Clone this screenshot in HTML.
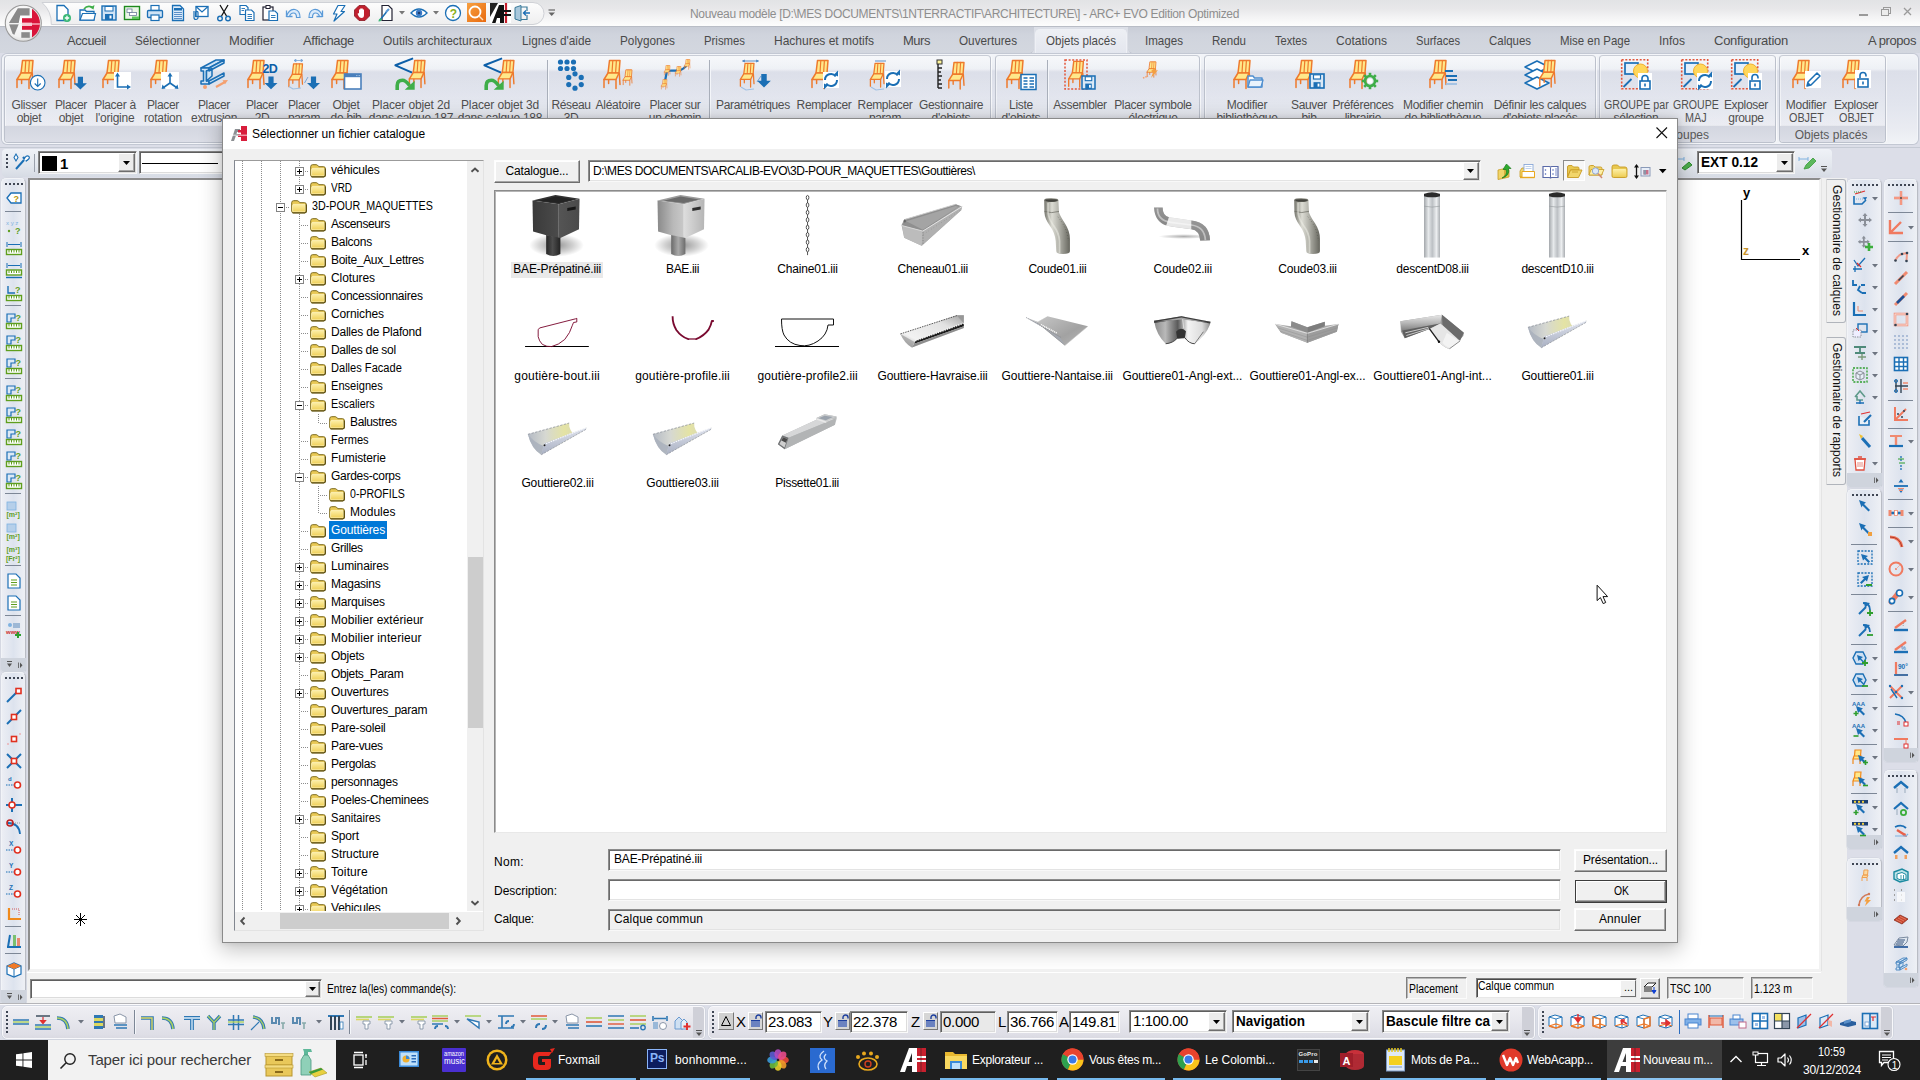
<!DOCTYPE html>
<html lang="fr"><head><meta charset="utf-8"><title>ARC+ EVO</title>
<style>
html,body{margin:0;padding:0;}
body{width:1920px;height:1080px;overflow:hidden;position:relative;background:#dde1e9;font-family:"Liberation Sans",sans-serif;}
.t{position:absolute;white-space:nowrap;line-height:1.25;}
.b{position:absolute;}
svg{overflow:visible;}
</style></head>
<body>
<!-- s_frame.frame -->
<div class="b" style="left:0px;top:0px;width:1920px;height:1040px;background:#dcdee8;"></div>
<div class="b" style="left:0px;top:0px;width:1920px;height:26px;background:linear-gradient(#e2e3e5 0,#e8e8ea 35%,#f3f3f4 65%,#fdfdfd 100%);"></div>
<div class="b" style="left:0px;top:26px;width:1920px;height:1px;background:#b9bdc6;"></div>
<div class="b" style="left:0px;top:27px;width:1920px;height:27px;background:#dcdfe7;"></div>
<div class="b" style="left:0px;top:27px;width:1034px;height:25.5px;background:linear-gradient(#c9cdd7 0,#d0d4dd 30%,#d3d7df 100%);border-radius:0 0 6px 0;box-shadow:0 1px 0 #c3c7d1;"></div>
<div class="b" style="left:1128px;top:27px;width:792px;height:25.5px;background:linear-gradient(#c9cdd7 0,#d0d4dd 30%,#d3d7df 100%);border-radius:0 0 0 6px;box-shadow:0 1px 0 #c3c7d1;"></div>
<div class="b" style="left:0px;top:53px;width:1920px;height:95px;background:#dcdee8;"></div>
<span class="t" style="left:690.0px;top:6.5px;font-size:12px;color:#8e8e8e;letter-spacing:-0.327px;">Nouveau modèle [D:\MES DOCUMENTS\1NTERRACTIF\ARCHITECTURE\] - ARC+ EVO Edition Optimized</span>
<div class="b" style="left:1859px;top:14px;width:9px;height:1.5px;background:#9a9a9a;"></div>
<svg style="position:absolute;left:1880px;top:6px;" width="12" height="12" viewBox="0 0 12 12"><rect x="3.5" y="1.5" width="7" height="6" fill="none" stroke="#9a9a9a"/><rect x="1.5" y="3.5" width="7" height="6" fill="#ececec" stroke="#9a9a9a"/></svg>
<svg style="position:absolute;left:1902px;top:6px;" width="12" height="12" viewBox="0 0 12 12"><path d="M2 2L9 9M9 2L2 9" stroke="#9a9a9a" stroke-width="1.3"/></svg>
<!-- s_frame.tabs -->
<div class="b" style="left:1035px;top:29px;width:92px;height:25px;background:linear-gradient(#edeff4,#e3e6ee);border:1px solid #eef0f5;border-bottom:none;border-radius:5px 5px 0 0;box-sizing:border-box;"></div>
<span class="t" style="left:67.0px;top:32.5px;font-size:13px;color:#4a4a4a;letter-spacing:-0.415px;">Accueil</span>
<span class="t" style="left:135.0px;top:32.5px;font-size:13px;color:#4a4a4a;transform-origin:0 50%;transform:scaleX(0.8995);">Sélectionner</span>
<span class="t" style="left:229.0px;top:32.5px;font-size:13px;color:#4a4a4a;letter-spacing:-0.154px;">Modifier</span>
<span class="t" style="left:303.0px;top:32.5px;font-size:13px;color:#4a4a4a;letter-spacing:-0.329px;">Affichage</span>
<span class="t" style="left:383.0px;top:32.5px;font-size:13px;color:#4a4a4a;transform-origin:0 50%;transform:scaleX(0.9199);">Outils architecturaux</span>
<span class="t" style="left:522.0px;top:32.5px;font-size:13px;color:#4a4a4a;transform-origin:0 50%;transform:scaleX(0.9055);">Lignes d'aide</span>
<span class="t" style="left:620.0px;top:32.5px;font-size:13px;color:#4a4a4a;transform-origin:0 50%;transform:scaleX(0.9060);">Polygones</span>
<span class="t" style="left:704.0px;top:32.5px;font-size:13px;color:#4a4a4a;transform-origin:0 50%;transform:scaleX(0.8733);">Prismes</span>
<span class="t" style="left:774.0px;top:32.5px;font-size:13px;color:#4a4a4a;transform-origin:0 50%;transform:scaleX(0.9228);">Hachures et motifs</span>
<span class="t" style="left:903.0px;top:32.5px;font-size:13px;color:#4a4a4a;letter-spacing:-0.472px;">Murs</span>
<span class="t" style="left:959.0px;top:32.5px;font-size:13px;color:#4a4a4a;transform-origin:0 50%;transform:scaleX(0.9021);">Ouvertures</span>
<span class="t" style="left:1046.0px;top:32.5px;font-size:13px;color:#4a4a4a;transform-origin:0 50%;transform:scaleX(0.8888);">Objets placés</span>
<span class="t" style="left:1145.0px;top:32.5px;font-size:13px;color:#4a4a4a;transform-origin:0 50%;transform:scaleX(0.8914);">Images</span>
<span class="t" style="left:1212.0px;top:32.5px;font-size:13px;color:#4a4a4a;transform-origin:0 50%;transform:scaleX(0.8876);">Rendu</span>
<span class="t" style="left:1275.0px;top:32.5px;font-size:13px;color:#4a4a4a;transform-origin:0 50%;transform:scaleX(0.8517);">Textes</span>
<span class="t" style="left:1336.0px;top:32.5px;font-size:13px;color:#4a4a4a;transform-origin:0 50%;transform:scaleX(0.9287);">Cotations</span>
<span class="t" style="left:1416.0px;top:32.5px;font-size:13px;color:#4a4a4a;transform-origin:0 50%;transform:scaleX(0.8577);">Surfaces</span>
<span class="t" style="left:1489.0px;top:32.5px;font-size:13px;color:#4a4a4a;transform-origin:0 50%;transform:scaleX(0.8806);">Calques</span>
<span class="t" style="left:1560.0px;top:32.5px;font-size:13px;color:#4a4a4a;transform-origin:0 50%;transform:scaleX(0.8806);">Mise en Page</span>
<span class="t" style="left:1659.0px;top:32.5px;font-size:13px;color:#4a4a4a;transform-origin:0 50%;transform:scaleX(0.9226);">Infos</span>
<span class="t" style="left:1714.0px;top:32.5px;font-size:13px;color:#4a4a4a;letter-spacing:-0.256px;">Configuration</span>
<span class="t" style="left:1868.0px;top:32.5px;font-size:13px;color:#4a4a4a;letter-spacing:-0.414px;">A propos</span>
<!-- s_qat.qat -->
<svg style="position:absolute;left:0px;top:0px;" width="560" height="28" viewBox="0 0 560 28"><defs><linearGradient id="qg" x1="0" y1="0" x2="0" y2="1"><stop offset="0" stop-color="#fdfdfd"/><stop offset="1" stop-color="#eeeeef"/></linearGradient></defs><path d="M42 2.500H533A11 11 0 0 1 533 24.500H51.300A28 28 0 0 0 42 2.500Z" fill="url(#qg)" stroke="#cfd1d6" stroke-width="1"/></svg>
<svg style="position:absolute;left:3px;top:3px;" width="42" height="42" viewBox="0 0 42 42"><defs><radialGradient id="lg" cx=".45" cy=".35" r=".75"><stop offset="0" stop-color="#ffffff"/><stop offset=".7" stop-color="#f1f1f1"/><stop offset="1" stop-color="#cfcfcf"/></radialGradient><clipPath id="lc"><circle cx="20.300" cy="20.300" r="16.700"/></clipPath></defs><circle cx="20.300" cy="20.300" r="18" fill="url(#lg)" stroke="#9a9a9a" stroke-width="1.100"/><g clip-path="url(#lc)"><path d="M14.800 5.200H26.600V12.600H17.200L15.700 20.100H5.900Z" fill="#8a8a8a"/><path d="M6.100 21.200H15.700L11.200 32.100L9.400 30.300Z" fill="#8a8a8a"/><rect x="18.300" y="29.200" width="8.500" height="5.600" fill="#8a8a8a"/><rect x="29" y="0" width="12" height="42" fill="#d9143a"/><rect x="19" y="15.200" width="10.500" height="4.500" fill="#d9143a"/><rect x="19" y="22.800" width="10.500" height="4" fill="#d9143a"/><rect x="19" y="20.300" width="20" height="1.400" fill="#f9b4c0"/><path d="M4 20.700H19" stroke="#f0f0f0" stroke-width="0.900"/></g></svg>
<svg style="position:absolute;left:54px;top:3.5px;" width="18" height="18" viewBox="0 0 18 18"><path d="M3 1.500H10L14 5.500V16.500H3Z" fill="#fff" stroke="#1b6fb5" stroke-width="1.300"/><circle cx="13" cy="14" r="4" fill="#3cb878"/><path d="M13 11.800V16.200M10.800 14H15.200" stroke="#fff" stroke-width="1.300"/></svg>
<svg style="position:absolute;left:77.5px;top:3.5px;" width="18" height="18" viewBox="0 0 18 18"><path d="M2 6H7L8.500 7.500H16V16H2Z" fill="#fff" stroke="#1b6fb5" stroke-width="1.300"/><path d="M2 16L4.500 9.500H17.500L16 16Z" fill="#fff" stroke="#1b6fb5" stroke-width="1.200"/><path d="M6 5Q9 1 14 3" fill="none" stroke="#3fae49" stroke-width="1.600"/><path d="M16.500 1L15.500 5.500L12 3.500Z" fill="#3fae49"/></svg>
<svg style="position:absolute;left:100px;top:3.5px;" width="18" height="18" viewBox="0 0 18 18"><rect x="2" y="2" width="14" height="14" fill="#cfe3f5" stroke="#1b6fb5" stroke-width="1.400"/><rect x="5" y="2.500" width="8" height="4.500" fill="#fff" stroke="#1b6fb5" stroke-width="1"/><rect x="5" y="10" width="8" height="6" fill="#1b6fb5"/><rect x="9.500" y="11.500" width="2" height="3" fill="#fff"/></svg>
<svg style="position:absolute;left:122.5px;top:3.5px;" width="18" height="18" viewBox="0 0 18 18"><rect x="1.500" y="2.500" width="15" height="13" fill="#eaf6e6" stroke="#1e8a1e" stroke-width="1.400"/><rect x="4" y="5" width="5" height="3.500" fill="#fff" stroke="#6a7a9a" stroke-width="0.800"/><rect x="6.500" y="8.500" width="7" height="3" fill="#fff" stroke="#6a7a9a" stroke-width="0.800"/><rect x="9" y="12.500" width="7" height="2.500" fill="#5cc85c"/></svg>
<svg style="position:absolute;left:146px;top:3.5px;" width="18" height="18" viewBox="0 0 18 18"><rect x="5" y="1.500" width="8" height="5" fill="#fff" stroke="#1b6fb5" stroke-width="1.200"/><rect x="1.500" y="6.500" width="15" height="7" rx="1" fill="#cfe3f5" stroke="#1b6fb5" stroke-width="1.300"/><rect x="5" y="11" width="8" height="5.500" fill="#fff" stroke="#1b6fb5" stroke-width="1.200"/></svg>
<svg style="position:absolute;left:169px;top:3.5px;" width="18" height="18" viewBox="0 0 18 18"><path d="M3.500 1.500H11L14.500 5V16.500H3.500Z" fill="#dcebfa" stroke="#1b6fb5" stroke-width="1.300"/><rect x="5" y="4" width="8" height="2.500" fill="#1b6fb5"/><path d="M5 8.500H13M5 10.500H13M5 12.500H13M5 14.500H13" stroke="#5a8fc8" stroke-width="1.200"/></svg>
<svg style="position:absolute;left:191px;top:3.5px;" width="19" height="18" viewBox="0 0 19 18"><rect x="5" y="2.500" width="12" height="10" fill="#fff" stroke="#1b6fb5" stroke-width="1.300"/><path d="M5 2.500L11 8L17 2.500" fill="none" stroke="#1b6fb5" stroke-width="1.200"/><path d="M3 7V13.500A2 2 0 0 0 7 13.500V8.500A1.200 1.200 0 0 0 4.600 8.500V13" fill="none" stroke="#1b6fb5" stroke-width="1.200"/></svg>
<svg style="position:absolute;left:215px;top:3.5px;" width="18" height="19" viewBox="0 0 18 19"><path d="M5 1L11.500 12M13 1L6.500 12" stroke="#111" stroke-width="1.300"/><circle cx="5" cy="14.500" r="2.300" fill="none" stroke="#1b6fb5" stroke-width="1.400"/><circle cx="13" cy="14.500" r="2.300" fill="none" stroke="#1b6fb5" stroke-width="1.400"/></svg>
<svg style="position:absolute;left:238px;top:3.5px;" width="18" height="18" viewBox="0 0 18 18"><path d="M2 1.500H8L10 3.500V10.500H2Z" fill="#fff" stroke="#1b6fb5" stroke-width="1.200"/><path d="M7.500 6H13.500L16 8.500V16.500H7.500Z" fill="#fff" stroke="#1b6fb5" stroke-width="1.200"/><path d="M9.500 10.500H14M9.500 12.500H14M9.500 14.500H14M3.500 4.500H7M3.500 6.500H6" stroke="#1b6fb5" stroke-width="0.900"/></svg>
<svg style="position:absolute;left:260.5px;top:3.5px;" width="18" height="18" viewBox="0 0 18 18"><rect x="2" y="3" width="10" height="13" fill="#fff" stroke="#223" stroke-width="1.200"/><rect x="5" y="1.500" width="4" height="3" fill="#fff" stroke="#223" stroke-width="1"/><path d="M8 7H14L16.500 9.500V16.500H8Z" fill="#fff" stroke="#1b6fb5" stroke-width="1.200"/><path d="M10 11.500H14.500M10 13.500H14.500" stroke="#1b6fb5" stroke-width="0.900"/></svg>
<svg style="position:absolute;left:284px;top:3.5px;" width="18" height="18" viewBox="0 0 18 18"><path d="M2.500 12.500V6.500M2.500 12.500H8.500" fill="none" stroke="#5a9ad8" stroke-width="1.300"/><path d="M2.500 12.500Q5 4.500 11 5.500Q16 6.500 16 13.500L12.500 13.500Q12.500 9 9.500 9Q6.500 9 5.500 12.500Z" fill="#dcebfa" stroke="#5a9ad8" stroke-width="1.200"/></svg>
<svg style="position:absolute;left:307px;top:3.5px;" width="18" height="18" viewBox="0 0 18 18"><path d="M15.500 12.500V6.500M15.500 12.500H9.500" fill="none" stroke="#5a9ad8" stroke-width="1.300"/><path d="M15.500 12.500Q13 4.500 7 5.500Q2 6.500 2 13.500L5.500 13.500Q5.500 9 8.500 9Q11.500 9 12.500 12.500Z" fill="#dcebfa" stroke="#5a9ad8" stroke-width="1.200"/></svg>
<svg style="position:absolute;left:329.5px;top:3.5px;" width="18" height="18" viewBox="0 0 18 18"><path d="M8 1.500H15L11 7.500H14.500L4 17L7 10H3.500Z" fill="#fff" stroke="#1b6fb5" stroke-width="1.200" stroke-linejoin="round"/></svg>
<svg style="position:absolute;left:352.5px;top:3.5px;" width="18" height="18" viewBox="0 0 18 18"><path d="M6 1.500H12L16.500 6V12L12 16.500H6L1.500 12V6Z" fill="#c0202e" stroke="#8a1420" stroke-width="0.800"/><path d="M6 9V5.500H7.200V8.500V4.500H8.500V8.500V4.500H9.800V8.500V5.500H11V11Q11 14 8.500 14Q6.500 14 5.500 12L4.500 9.800L5.500 9.300Z" fill="#fff"/></svg>
<svg style="position:absolute;left:377px;top:3.5px;" width="18" height="18" viewBox="0 0 18 18"><path d="M5 1.500H11.500L15 5V16.500H5Z" fill="#fff" stroke="#223" stroke-width="1.200"/><path d="M3 16L9.500 8" stroke="#1b6fb5" stroke-width="1.600"/><path d="M1.500 17.500Q1.500 14 4.500 14.500Q5.500 17 1.500 17.500Z" fill="#3cb878"/><path d="M9 8L12 5" stroke="#5a9ad8" stroke-width="2.200"/></svg>
<svg style="position:absolute;left:399px;top:11px;" width="7" height="5" viewBox="0 0 7 5"><path d="M0 0H6L3 3.500Z" fill="#777"/></svg>
<svg style="position:absolute;left:410px;top:3.5px;" width="18" height="18" viewBox="0 0 18 18"><path d="M1 9Q9 1 17 9Q9 17 1 9Z" fill="#fff" stroke="#1b6fb5" stroke-width="1.400"/><circle cx="9" cy="9" r="3.200" fill="#3a7ac8"/><circle cx="9" cy="9" r="1.300" fill="#1d3f6e"/></svg>
<svg style="position:absolute;left:433px;top:11px;" width="7" height="5" viewBox="0 0 7 5"><path d="M0 0H6L3 3.500Z" fill="#777"/></svg>
<svg style="position:absolute;left:444px;top:3.5px;" width="18" height="18" viewBox="0 0 18 18"><circle cx="9" cy="9" r="7.500" fill="#fff" stroke="#1b6fb5" stroke-width="1.300"/><text x="5.800" y="13.500" font-family="Liberation Sans,sans-serif" font-size="12" font-weight="bold" fill="#8ab020">?</text></svg>
<div class="b" style="left:467px;top:3px;width:19px;height:19px;background:linear-gradient(135deg,#f7a040,#e86a10);"></div>
<svg style="position:absolute;left:467px;top:3px;" width="19" height="19" viewBox="0 0 19 19"><circle cx="8" cy="9" r="5.500" fill="none" stroke="#fff" stroke-width="1.800"/><path d="M12 13L16 17" stroke="#fde0c0" stroke-width="1.500"/></svg>
<svg style="position:absolute;left:490px;top:3px;" width="21" height="20" viewBox="0 0 21 20"><rect x="0" y="0" width="21" height="20" fill="#fff"/><path d="M0 0H8L0 14Z" fill="#222"/><path d="M2 20L9 2H14V20H10V15H7L5.500 20Z" fill="#111"/><path d="M16 0V20" stroke="#c8202e" stroke-width="2.200"/><path d="M13 8H21M13 12H21" stroke="#111" stroke-width="2"/></svg>
<svg style="position:absolute;left:512.5px;top:3.5px;" width="18" height="18" viewBox="0 0 18 18"><path d="M2 3.500L8 1.500V17L2 15Z" fill="#a9c8dc" stroke="#3a7a9a" stroke-width="1"/><path d="M8 3H14V7M14 11V15.500H8" fill="none" stroke="#3a7a9a" stroke-width="1.200"/><path d="M17 9H10.500M13 6.500L10.500 9L13 11.500" fill="none" stroke="#1b6fb5" stroke-width="1.400"/></svg>
<svg style="position:absolute;left:548px;top:9px;" width="8" height="8" viewBox="0 0 8 8"><path d="M0.500 1H7" stroke="#666" stroke-width="1.200"/><path d="M0.500 3.500H7L3.700 7Z" fill="#666"/></svg>
<!-- s_ribbon.ribbon -->
<div class="b" style="left:2px;top:54px;width:1916px;height:90px;box-sizing:border-box;border:1px solid #f3f5f9;border-radius:5px;box-shadow:0 0 0 1px #c3c8d3;background:linear-gradient(#f2f4f8 0px,#eaedf3 14px,#dcdfe9 16px,#e2e5ee 50px,#eaecf2 75px,#f1f3f7 89px);"></div>
<div class="b" style="left:4px;top:55px;width:986.5px;height:87.5px;box-sizing:border-box;border:1px solid #bcc1cc;border-top-color:#c9cdd6;border-radius:4px;background:linear-gradient(rgba(255,255,255,.35) 0px,rgba(255,255,255,.18) 15px,rgba(255,255,255,0) 16px,rgba(255,255,255,.12) 69px,rgba(0,0,0,.03) 70px,rgba(0,0,0,.02) 85px);box-shadow:1px 0 0 rgba(255,255,255,.7), inset 1px 0 0 rgba(255,255,255,.5);"></div>
<div class="b" style="left:995px;top:55px;width:205px;height:87.5px;box-sizing:border-box;border:1px solid #bcc1cc;border-top-color:#c9cdd6;border-radius:4px;background:linear-gradient(rgba(255,255,255,.35) 0px,rgba(255,255,255,.18) 15px,rgba(255,255,255,0) 16px,rgba(255,255,255,.12) 69px,rgba(0,0,0,.03) 70px,rgba(0,0,0,.02) 85px);box-shadow:1px 0 0 rgba(255,255,255,.7), inset 1px 0 0 rgba(255,255,255,.5);"></div>
<div class="b" style="left:1204px;top:55px;width:391.5px;height:87.5px;box-sizing:border-box;border:1px solid #bcc1cc;border-top-color:#c9cdd6;border-radius:4px;background:linear-gradient(rgba(255,255,255,.35) 0px,rgba(255,255,255,.18) 15px,rgba(255,255,255,0) 16px,rgba(255,255,255,.12) 69px,rgba(0,0,0,.03) 70px,rgba(0,0,0,.02) 85px);box-shadow:1px 0 0 rgba(255,255,255,.7), inset 1px 0 0 rgba(255,255,255,.5);"></div>
<div class="b" style="left:1599px;top:55px;width:176.5px;height:87.5px;box-sizing:border-box;border:1px solid #bcc1cc;border-top-color:#c9cdd6;border-radius:4px;background:linear-gradient(rgba(255,255,255,.35) 0px,rgba(255,255,255,.18) 15px,rgba(255,255,255,0) 16px,rgba(255,255,255,.12) 69px,rgba(0,0,0,.03) 70px,rgba(0,0,0,.02) 85px);box-shadow:1px 0 0 rgba(255,255,255,.7), inset 1px 0 0 rgba(255,255,255,.5);"></div>
<div class="b" style="left:1779px;top:55px;width:106.5px;height:87.5px;box-sizing:border-box;border:1px solid #bcc1cc;border-top-color:#c9cdd6;border-radius:4px;background:linear-gradient(rgba(255,255,255,.35) 0px,rgba(255,255,255,.18) 15px,rgba(255,255,255,0) 16px,rgba(255,255,255,.12) 69px,rgba(0,0,0,.03) 70px,rgba(0,0,0,.02) 85px);box-shadow:1px 0 0 rgba(255,255,255,.7), inset 1px 0 0 rgba(255,255,255,.5);"></div>
<div class="b" style="left:5px;top:126px;width:984.5px;height:15.5px;background:linear-gradient(#d3d6e0,#dcdee7);border-radius:0 0 3px 3px;"></div>
<div class="b" style="left:996px;top:126px;width:203px;height:15.5px;background:linear-gradient(#d3d6e0,#dcdee7);border-radius:0 0 3px 3px;"></div>
<div class="b" style="left:1205px;top:126px;width:389.5px;height:15.5px;background:linear-gradient(#d3d6e0,#dcdee7);border-radius:0 0 3px 3px;"></div>
<div class="b" style="left:1600px;top:126px;width:174.5px;height:15.5px;background:linear-gradient(#d3d6e0,#dcdee7);border-radius:0 0 3px 3px;"></div>
<div class="b" style="left:1780px;top:126px;width:104.5px;height:15.5px;background:linear-gradient(#d3d6e0,#dcdee7);border-radius:0 0 3px 3px;"></div>
<div class="b" style="left:547px;top:60px;width:1px;height:64px;background:#a9afba;box-shadow:1px 0 0 #f4f6fa;"></div>
<div class="b" style="left:709px;top:60px;width:1px;height:64px;background:#a9afba;box-shadow:1px 0 0 #f4f6fa;"></div>
<div class="b" style="left:1047px;top:60px;width:1px;height:64px;background:#a9afba;box-shadow:1px 0 0 #f4f6fa;"></div>
<svg style="position:absolute;left:13px;top:59.4px;" width="32" height="32" viewBox="0 0 32 32"><g transform="translate(0,0) scale(1)" opacity="1" stroke="#ee7a2c" stroke-width="1.5" fill="#ffe88a" stroke-linejoin="round" stroke-linecap="round"><path d="M9.5 1.5L20 1.5L19 14L8 14Z"/><path d="M12.8 1.5L12 14M16.4 1.5L15.6 14" fill="none" stroke-width="1.2"/><path d="M8 14L19 14L16 20.5L4 20.5Z"/><path d="M4 20.5L4 28.5M16 20.5L16 29.5M19.3 14.5L20 25.5M8.6 21L8.6 24.5" fill="none"/></g><circle cx="24.700" cy="23.700" r="7.300" fill="#fff" stroke="#1b6fb5" stroke-width="1.100"/><path d="M24.700 19.500V27.500M21.700 24.500L24.700 27.500L27.700 24.500" fill="none" stroke="#1b6fb5" stroke-width="1.100"/></svg>
<span class="t" style="left:11.4px;top:98.0px;font-size:12px;color:#505050;letter-spacing:-0.293px;">Glisser</span>
<span class="t" style="left:16.7px;top:111.0px;font-size:12px;color:#505050;letter-spacing:-0.286px;">objet</span>
<svg style="position:absolute;left:55px;top:59.4px;" width="32" height="32" viewBox="0 0 32 32"><g transform="translate(0,0) scale(1)" opacity="1" stroke="#ee7a2c" stroke-width="1.5" fill="#ffe88a" stroke-linejoin="round" stroke-linecap="round"><path d="M9.5 1.5L20 1.5L19 14L8 14Z"/><path d="M12.8 1.5L12 14M16.4 1.5L15.6 14" fill="none" stroke-width="1.2"/><path d="M8 14L19 14L16 20.5L4 20.5Z"/><path d="M4 20.5L4 28.5M16 20.5L16 29.5M19.3 14.5L20 25.5M8.6 21L8.6 24.5" fill="none"/></g><path transform="translate(25.4,17.8) scale(1)" d="M-2.600 0H2.600V6.500H6.500L0 12.800L-6.500 6.500H-2.600Z" fill="#1b6fb5"/></svg>
<span class="t" style="left:54.9px;top:98.0px;font-size:12px;color:#505050;letter-spacing:-0.312px;">Placer</span>
<span class="t" style="left:58.7px;top:111.0px;font-size:12px;color:#505050;letter-spacing:-0.286px;">objet</span>
<svg style="position:absolute;left:99px;top:59.4px;" width="32" height="32" viewBox="0 0 32 32"><g transform="translate(0,0) scale(1)" opacity="1" stroke="#ee7a2c" stroke-width="1.5" fill="#ffe88a" stroke-linejoin="round" stroke-linecap="round"><path d="M9.5 1.5L20 1.5L19 14L8 14Z"/><path d="M12.8 1.5L12 14M16.4 1.5L15.6 14" fill="none" stroke-width="1.2"/><path d="M8 14L19 14L16 20.5L4 20.5Z"/><path d="M4 20.5L4 28.5M16 20.5L16 29.5M19.3 14.5L20 25.5M8.6 21L8.6 24.5" fill="none"/></g><rect x="15" y="13" width="17" height="17" fill="#fff"/><path d="M18.5 16V28H30" fill="none" stroke="#1b6fb5" stroke-width="1.6"/><path d="M18.5 13.5l-2.5 4h5zM32 28l-4-2.5v5z" fill="#1b6fb5"/></svg>
<span class="t" style="left:94.2px;top:98.0px;font-size:12px;color:#505050;letter-spacing:-0.303px;">Placer à</span>
<span class="t" style="left:95.6px;top:111.0px;font-size:12px;color:#505050;letter-spacing:-0.250px;">l'origine</span>
<svg style="position:absolute;left:147px;top:59.4px;" width="32" height="32" viewBox="0 0 32 32"><g transform="translate(0,0) scale(1)" opacity="1" stroke="#ee7a2c" stroke-width="1.5" fill="#ffe88a" stroke-linejoin="round" stroke-linecap="round"><path d="M9.5 1.5L20 1.5L19 14L8 14Z"/><path d="M12.8 1.5L12 14M16.4 1.5L15.6 14" fill="none" stroke-width="1.2"/><path d="M8 14L19 14L16 20.5L4 20.5Z"/><path d="M4 20.5L4 28.5M16 20.5L16 29.5M19.3 14.5L20 25.5M8.6 21L8.6 24.5" fill="none"/></g><rect x="14" y="13" width="18" height="17" fill="#fff"/><path d="M23 16V24M23 24L16.5 28.5M23 24L29.5 28.5" fill="none" stroke="#1b6fb5" stroke-width="1.6"/><path d="M23 13.5l-2.5 4h5zM14.5 30l1-4.6 3 4zM31.5 30l-1-4.6-3 4z" fill="#1b6fb5"/></svg>
<span class="t" style="left:146.9px;top:98.0px;font-size:12px;color:#505050;letter-spacing:-0.312px;">Placer</span>
<span class="t" style="left:144.1px;top:111.0px;font-size:12px;color:#505050;letter-spacing:-0.275px;">rotation</span>
<svg style="position:absolute;left:198px;top:59.4px;" width="32" height="32" viewBox="0 0 32 32"><g stroke="#1b6fb5" stroke-width="1.5" fill="#cfe3f5" stroke-linejoin="round"><path d="M3 9L18 1L26 1L11 9Z"/><path d="M3 9H11V12H8.5V22H11V25H3V22H5.5V12H3Z"/><path d="M11 9L26 1V4L11 12ZM8.5 12L14 9.5V17L8.5 22ZM11 22L26 14V17L11 25Z"/></g><circle cx="7" cy="28" r="2" fill="#f4a070"/><path d="M18 28L27 23" stroke="#f4a070" stroke-width="2.2"/><path d="M30 21l-5.5 0.3 2.5 4z" fill="#f4a070"/></svg>
<span class="t" style="left:197.9px;top:98.0px;font-size:12px;color:#505050;letter-spacing:-0.312px;">Placer</span>
<span class="t" style="left:191.0px;top:111.0px;font-size:12px;color:#505050;letter-spacing:-0.298px;">extrusion</span>
<svg style="position:absolute;left:246px;top:59.4px;" width="32" height="32" viewBox="0 0 32 32"><g transform="translate(-2,0) scale(1)" opacity="1" stroke="#ee7a2c" stroke-width="1.5" fill="#ffe88a" stroke-linejoin="round" stroke-linecap="round"><path d="M9.5 1.5L20 1.5L19 14L8 14Z"/><path d="M12.8 1.5L12 14M16.4 1.5L15.6 14" fill="none" stroke-width="1.2"/><path d="M8 14L19 14L16 20.5L4 20.5Z"/><path d="M4 20.5L4 28.5M16 20.5L16 29.5M19.3 14.5L20 25.5M8.6 21L8.6 24.5" fill="none"/></g><text x="16.500" y="14" font-family="Liberation Sans,sans-serif" font-weight="bold" font-size="12.500" letter-spacing="-0.600" fill="#0d5fa8">2D</text><path transform="translate(25,17.5) scale(1)" d="M-2.600 0H2.600V6.500H6.500L0 12.800L-6.500 6.500H-2.600Z" fill="#1b6fb5"/></svg>
<span class="t" style="left:245.9px;top:98.0px;font-size:12px;color:#505050;letter-spacing:-0.312px;">Placer</span>
<span class="t" style="left:254.8px;top:111.0px;font-size:12px;color:#505050;letter-spacing:-0.422px;">2D</span>
<svg style="position:absolute;left:288px;top:59.4px;" width="32" height="32" viewBox="0 0 32 32"><g transform="translate(-2.5,3.5) scale(0.85)" opacity="1" stroke="#ee7a2c" stroke-width="1.5" fill="#ffe88a" stroke-linejoin="round" stroke-linecap="round"><path d="M9.5 1.5L20 1.5L19 14L8 14Z"/><path d="M12.8 1.5L12 14M16.4 1.5L15.6 14" fill="none" stroke-width="1.2"/><path d="M8 14L19 14L16 20.5L4 20.5Z"/><path d="M4 20.5L4 28.5M16 20.5L16 29.5M19.3 14.5L20 25.5M8.6 21L8.6 24.5" fill="none"/></g><path d="M6 1.500H15M6 1.500l2 -1.200v2.400zM15 1.500l-2 -1.200v2.400z" stroke="#7aa6d6" fill="#7aa6d6" stroke-width="0.800"/><path d="M16.500 24L20 18" stroke="#7aa6d6" stroke-width="1"/><path d="M1 27.500L5 30L13 29" fill="none" stroke="#9fc0e4" stroke-width="1.200"/><path transform="translate(25.5,17.5) scale(1)" d="M-2.600 0H2.600V6.500H6.500L0 12.800L-6.500 6.500H-2.600Z" fill="#1b6fb5"/></svg>
<span class="t" style="left:287.9px;top:98.0px;font-size:12px;color:#505050;letter-spacing:-0.312px;">Placer</span>
<span class="t" style="left:287.9px;top:111.0px;font-size:12px;color:#505050;letter-spacing:-0.374px;">param</span>
<svg style="position:absolute;left:330px;top:59.4px;" width="32" height="32" viewBox="0 0 32 32"><g transform="translate(-2,0) scale(1)" opacity="1" stroke="#ee7a2c" stroke-width="1.5" fill="#ffe88a" stroke-linejoin="round" stroke-linecap="round"><path d="M9.5 1.5L20 1.5L19 14L8 14Z"/><path d="M12.8 1.5L12 14M16.4 1.5L15.6 14" fill="none" stroke-width="1.2"/><path d="M8 14L19 14L16 20.5L4 20.5Z"/><path d="M4 20.5L4 28.5M16 20.5L16 29.5M19.3 14.5L20 25.5M8.6 21L8.6 24.5" fill="none"/></g><rect x="14.500" y="15" width="16.500" height="15" fill="#fff" stroke="#4a80bc" stroke-width="1.600"/><rect x="14.500" y="15" width="16.500" height="3.200" fill="#4a80bc"/><path d="M26 16.600H30" stroke="#cfe0f2" stroke-width="0.800" stroke-dasharray="0.800 0.800"/></svg>
<span class="t" style="left:332.4px;top:98.0px;font-size:12px;color:#505050;letter-spacing:-0.315px;">Objet</span>
<span class="t" style="left:330.6px;top:111.0px;font-size:12px;color:#505050;letter-spacing:-0.300px;">de bib</span>
<svg style="position:absolute;left:395px;top:59.4px;" width="32" height="32" viewBox="0 0 32 32"><path d="M18.100 -0.600L0.400 6.300L17.100 13.600" fill="none" stroke="#0d5fa8" stroke-width="2" stroke-linejoin="round"/><g transform="translate(10.5,0) scale(0.97)" opacity="1" stroke="#ee7a2c" stroke-width="1.5" fill="#ffe88a" stroke-linejoin="round" stroke-linecap="round"><path d="M9.5 1.5L20 1.5L19 14L8 14Z"/><path d="M12.8 1.5L12 14M16.4 1.5L15.6 14" fill="none" stroke-width="1.2"/><path d="M8 14L19 14L16 20.5L4 20.5Z"/><path d="M4 20.5L4 28.5M16 20.5L16 29.5M19.3 14.5L20 25.5M8.6 21L8.6 24.5" fill="none"/></g><path d="M2.200 31V26.500Q2.200 21.300 7.500 21.300Q10.500 21.300 14.500 26.500" fill="none" stroke="#3fae49" stroke-width="3.600"/><path d="M9.700 30.800H19.700V21.700Z" fill="#3fae49"/></svg>
<span class="t" style="left:372.0px;top:98.0px;font-size:12px;color:#505050;letter-spacing:-0.133px;">Placer objet 2d</span>
<span class="t" style="left:368.7px;top:111.0px;font-size:12px;color:#505050;letter-spacing:-0.235px;">dans calque 187</span>
<svg style="position:absolute;left:484px;top:59.4px;" width="32" height="32" viewBox="0 0 32 32"><path d="M18.100 -0.600L0.400 6.300L17.100 13.600" fill="none" stroke="#0d5fa8" stroke-width="2" stroke-linejoin="round"/><g transform="translate(10.5,0) scale(0.97)" opacity="1" stroke="#ee7a2c" stroke-width="1.5" fill="#ffe88a" stroke-linejoin="round" stroke-linecap="round"><path d="M9.5 1.5L20 1.5L19 14L8 14Z"/><path d="M12.8 1.5L12 14M16.4 1.5L15.6 14" fill="none" stroke-width="1.2"/><path d="M8 14L19 14L16 20.5L4 20.5Z"/><path d="M4 20.5L4 28.5M16 20.5L16 29.5M19.3 14.5L20 25.5M8.6 21L8.6 24.5" fill="none"/></g><path d="M2.200 31V26.500Q2.200 21.300 7.500 21.300Q10.500 21.300 14.500 26.500" fill="none" stroke="#3fae49" stroke-width="3.600"/><path d="M9.700 30.800H19.700V21.700Z" fill="#3fae49"/></svg>
<span class="t" style="left:461.0px;top:98.0px;font-size:12px;color:#505050;letter-spacing:-0.133px;">Placer objet 3d</span>
<span class="t" style="left:457.7px;top:111.0px;font-size:12px;color:#505050;letter-spacing:-0.235px;">dans calque 188</span>
<svg style="position:absolute;left:555px;top:59.4px;" width="32" height="32" viewBox="0 0 32 32"><circle cx="5.5" cy="3" r="2.600" fill="#1b6fb5"/><circle cx="5.5" cy="9.5" r="2.600" fill="#1b6fb5"/><circle cx="12" cy="3" r="2.600" fill="#1b6fb5"/><circle cx="12" cy="9.5" r="2.600" fill="#1b6fb5"/><circle cx="18.5" cy="3" r="2.600" fill="#1b6fb5"/><circle cx="18.5" cy="9.5" r="2.600" fill="#1b6fb5"/><circle cx="26.24" cy="25.60" r="2.600" fill="#1b6fb5"/><circle cx="20.00" cy="29.20" r="2.600" fill="#1b6fb5"/><circle cx="13.76" cy="25.60" r="2.600" fill="#1b6fb5"/><circle cx="13.76" cy="18.40" r="2.600" fill="#1b6fb5"/><circle cx="20.00" cy="14.80" r="2.600" fill="#1b6fb5"/><circle cx="26.24" cy="18.40" r="2.600" fill="#1b6fb5"/></svg>
<span class="t" style="left:551.5px;top:98.0px;font-size:12px;color:#505050;letter-spacing:-0.379px;">Réseau</span>
<span class="t" style="left:563.8px;top:111.0px;font-size:12px;color:#505050;letter-spacing:-0.422px;">3D</span>
<svg style="position:absolute;left:602px;top:59.4px;" width="32" height="32" viewBox="0 0 32 32"><g transform="translate(-2,0) scale(1)" opacity="1" stroke="#ee7a2c" stroke-width="1.5" fill="#ffe88a" stroke-linejoin="round" stroke-linecap="round"><path d="M9.5 1.5L20 1.5L19 14L8 14Z"/><path d="M12.8 1.5L12 14M16.4 1.5L15.6 14" fill="none" stroke-width="1.2"/><path d="M8 14L19 14L16 20.5L4 20.5Z"/><path d="M4 20.5L4 28.5M16 20.5L16 29.5M19.3 14.5L20 25.5M8.6 21L8.6 24.5" fill="none"/></g><g transform="translate(19,10) scale(0.55)" opacity="1" stroke="#ee7a2c" stroke-width="1.5" fill="#ffe88a" stroke-linejoin="round" stroke-linecap="round"><path d="M9.5 1.5L20 1.5L19 14L8 14Z"/><path d="M12.8 1.5L12 14M16.4 1.5L15.6 14" fill="none" stroke-width="1.2"/><path d="M8 14L19 14L16 20.5L4 20.5Z"/><path d="M4 20.5L4 28.5M16 20.5L16 29.5M19.3 14.5L20 25.5M8.6 21L8.6 24.5" fill="none"/></g></svg>
<span class="t" style="left:595.6px;top:98.0px;font-size:12px;color:#505050;letter-spacing:-0.289px;">Aléatoire</span>
<svg style="position:absolute;left:659px;top:59.4px;" width="32" height="32" viewBox="0 0 32 32"><path d="M5 27L8 12C16 10 22 16 30 3" fill="none" stroke="#1b6fb5" stroke-width="2.2"/><g transform="translate(1,20) scale(0.35)" opacity="1" stroke="#ee7a2c" stroke-width="1.5" fill="#ffe88a" stroke-linejoin="round" stroke-linecap="round"><path d="M9.5 1.5L20 1.5L19 14L8 14Z"/><path d="M12.8 1.5L12 14M16.4 1.5L15.6 14" fill="none" stroke-width="1.2"/><path d="M8 14L19 14L16 20.5L4 20.5Z"/><path d="M4 20.5L4 28.5M16 20.5L16 29.5M19.3 14.5L20 25.5M8.6 21L8.6 24.5" fill="none"/></g><g transform="translate(4,6) scale(0.35)" opacity="1" stroke="#ee7a2c" stroke-width="1.5" fill="#ffe88a" stroke-linejoin="round" stroke-linecap="round"><path d="M9.5 1.5L20 1.5L19 14L8 14Z"/><path d="M12.8 1.5L12 14M16.4 1.5L15.6 14" fill="none" stroke-width="1.2"/><path d="M8 14L19 14L16 20.5L4 20.5Z"/><path d="M4 20.5L4 28.5M16 20.5L16 29.5M19.3 14.5L20 25.5M8.6 21L8.6 24.5" fill="none"/></g><g transform="translate(15,7) scale(0.35)" opacity="1" stroke="#ee7a2c" stroke-width="1.5" fill="#ffe88a" stroke-linejoin="round" stroke-linecap="round"><path d="M9.5 1.5L20 1.5L19 14L8 14Z"/><path d="M12.8 1.5L12 14M16.4 1.5L15.6 14" fill="none" stroke-width="1.2"/><path d="M8 14L19 14L16 20.5L4 20.5Z"/><path d="M4 20.5L4 28.5M16 20.5L16 29.5M19.3 14.5L20 25.5M8.6 21L8.6 24.5" fill="none"/></g><g transform="translate(24,0) scale(0.35)" opacity="1" stroke="#ee7a2c" stroke-width="1.5" fill="#ffe88a" stroke-linejoin="round" stroke-linecap="round"><path d="M9.5 1.5L20 1.5L19 14L8 14Z"/><path d="M12.8 1.5L12 14M16.4 1.5L15.6 14" fill="none" stroke-width="1.2"/><path d="M8 14L19 14L16 20.5L4 20.5Z"/><path d="M4 20.5L4 28.5M16 20.5L16 29.5M19.3 14.5L20 25.5M8.6 21L8.6 24.5" fill="none"/></g></svg>
<span class="t" style="left:649.5px;top:98.0px;font-size:12px;color:#505050;letter-spacing:-0.297px;">Placer sur</span>
<span class="t" style="left:648.8px;top:111.0px;font-size:12px;color:#505050;letter-spacing:-0.338px;">un chemin</span>
<svg style="position:absolute;left:737px;top:59.4px;" width="32" height="32" viewBox="0 0 32 32"><g transform="translate(0,3) scale(0.85)" opacity="1" stroke="#ee7a2c" stroke-width="1.5" fill="#ffe88a" stroke-linejoin="round" stroke-linecap="round"><path d="M9.5 1.5L20 1.5L19 14L8 14Z"/><path d="M12.8 1.5L12 14M16.4 1.5L15.6 14" fill="none" stroke-width="1.2"/><path d="M8 14L19 14L16 20.5L4 20.5Z"/><path d="M4 20.5L4 28.5M16 20.5L16 29.5M19.3 14.5L20 25.5M8.6 21L8.6 24.5" fill="none"/></g><path d="M8 2H19M7.5 1l-2 1 2 1zM19.500 1l2 1-2 1z" stroke="#5a8fc8" fill="#5a8fc8" stroke-width="1"/><path d="M20 23L24 17" stroke="#7aa6d6" stroke-width="1"/><path d="M4 28L9 31L17 30" fill="none" stroke="#9fc0e4" stroke-width="1.2"/><path transform="translate(27,15) scale(1.05)" d="M-2.600 0H2.600V6.500H6.500L0 12.800L-6.500 6.500H-2.600Z" fill="#1b6fb5"/></svg>
<span class="t" style="left:716.1px;top:98.0px;font-size:12px;color:#505050;letter-spacing:-0.330px;">Paramétriques</span>
<svg style="position:absolute;left:808px;top:59.4px;" width="32" height="32" viewBox="0 0 32 32"><g transform="translate(0,0) scale(1)" opacity="1" stroke="#ee7a2c" stroke-width="1.5" fill="#ffe88a" stroke-linejoin="round" stroke-linecap="round"><path d="M9.5 1.5L20 1.5L19 14L8 14Z"/><path d="M12.8 1.5L12 14M16.4 1.5L15.6 14" fill="none" stroke-width="1.2"/><path d="M8 14L19 14L16 20.5L4 20.5Z"/><path d="M4 20.5L4 28.5M16 20.5L16 29.5M19.3 14.5L20 25.5M8.6 21L8.6 24.5" fill="none"/></g><rect x="15" y="13" width="16" height="16" fill="#fff"/><g transform="translate(23,21)" fill="none" stroke="#1b6fb5" stroke-width="2"><path d="M-6 0A6 6 0 0 1 4.8 -3.6"/><path d="M6 0A6 6 0 0 1 -4.8 3.6"/></g><path d="M26 15.6 l4 -4 l0 6z" fill="#1b6fb5"/><path d="M20 26.4 l-4 4 l0 -6z" fill="#1b6fb5"/></svg>
<span class="t" style="left:796.6px;top:98.0px;font-size:12px;color:#505050;letter-spacing:-0.355px;">Remplacer</span>
<svg style="position:absolute;left:869px;top:59.4px;" width="32" height="32" viewBox="0 0 32 32"><g transform="translate(-2,3) scale(0.85)" opacity="1" stroke="#ee7a2c" stroke-width="1.5" fill="#ffe88a" stroke-linejoin="round" stroke-linecap="round"><path d="M9.5 1.5L20 1.5L19 14L8 14Z"/><path d="M12.8 1.5L12 14M16.4 1.5L15.6 14" fill="none" stroke-width="1.2"/><path d="M8 14L19 14L16 20.5L4 20.5Z"/><path d="M4 20.5L4 28.5M16 20.5L16 29.5M19.3 14.5L20 25.5M8.6 21L8.6 24.5" fill="none"/></g><path d="M6 2H17" stroke="#5a8fc8" stroke-width="1"/><path d="M2 28L7 31L15 30" fill="none" stroke="#9fc0e4" stroke-width="1.2"/><rect x="16" y="12" width="16" height="16" fill="#fff"/><g transform="translate(24,20)" fill="none" stroke="#1b6fb5" stroke-width="2"><path d="M-6 0A6 6 0 0 1 4.8 -3.6"/><path d="M6 0A6 6 0 0 1 -4.8 3.6"/></g><path d="M27 14.6 l4 -4 l0 6z" fill="#1b6fb5"/><path d="M21 25.4 l-4 4 l0 -6z" fill="#1b6fb5"/></svg>
<span class="t" style="left:857.6px;top:98.0px;font-size:12px;color:#505050;letter-spacing:-0.355px;">Remplacer</span>
<span class="t" style="left:868.9px;top:111.0px;font-size:12px;color:#505050;letter-spacing:-0.374px;">param</span>
<svg style="position:absolute;left:935px;top:59.4px;" width="32" height="32" viewBox="0 0 32 32"><rect x="2" y="1" width="5" height="4" fill="#fff59a" stroke="#333" stroke-width="1"/><path d="M3 5V29M3 9H7M3 13H6M3 17H7M3 21H6M3 25H7M3 29H7" stroke="#222" stroke-width="1.4" fill="none"/><g transform="translate(10,2) scale(0.95)" opacity="1" stroke="#ee7a2c" stroke-width="1.5" fill="#ffe88a" stroke-linejoin="round" stroke-linecap="round"><path d="M9.5 1.5L20 1.5L19 14L8 14Z"/><path d="M12.8 1.5L12 14M16.4 1.5L15.6 14" fill="none" stroke-width="1.2"/><path d="M8 14L19 14L16 20.5L4 20.5Z"/><path d="M4 20.5L4 28.5M16 20.5L16 29.5M19.3 14.5L20 25.5M8.6 21L8.6 24.5" fill="none"/></g></svg>
<span class="t" style="left:918.9px;top:98.0px;font-size:12px;color:#505050;letter-spacing:-0.312px;">Gestionnaire</span>
<span class="t" style="left:931.6px;top:111.0px;font-size:12px;color:#505050;letter-spacing:-0.282px;">d'objets</span>
<svg style="position:absolute;left:1005px;top:59.4px;" width="32" height="32" viewBox="0 0 32 32"><g transform="translate(-2,0) scale(1)" opacity="1" stroke="#ee7a2c" stroke-width="1.5" fill="#ffe88a" stroke-linejoin="round" stroke-linecap="round"><path d="M9.5 1.5L20 1.5L19 14L8 14Z"/><path d="M12.8 1.5L12 14M16.4 1.5L15.6 14" fill="none" stroke-width="1.2"/><path d="M8 14L19 14L16 20.5L4 20.5Z"/><path d="M4 20.5L4 28.5M16 20.5L16 29.5M19.3 14.5L20 25.5M8.6 21L8.6 24.5" fill="none"/></g><g transform="translate(0,1.500)"><rect x="16" y="14" width="15" height="15" fill="#fff" stroke="#1b6fb5" stroke-width="1.500"/><path d="M18.500 17.500h4M24.500 17.500h4.500M18.500 20.500h4M24.500 20.500h4.500M18.500 23.500h4M24.500 23.500h4.500M18.500 26.500h4M24.500 26.500h4.500" stroke="#1b6fb5" stroke-width="1.600"/></g></svg>
<span class="t" style="left:1009.0px;top:98.0px;font-size:12px;color:#505050;letter-spacing:-0.279px;">Liste</span>
<span class="t" style="left:1001.6px;top:111.0px;font-size:12px;color:#505050;letter-spacing:-0.282px;">d'objets</span>
<svg style="position:absolute;left:1064px;top:59.4px;" width="32" height="32" viewBox="0 0 32 32"><rect x="1" y="1" width="22" height="29" fill="none" stroke="#e2553a" stroke-width="1.5" stroke-dasharray="2 1.6"/><g transform="translate(1,1) scale(0.92)" opacity="1" stroke="#ee7a2c" stroke-width="1.5" fill="#ffe88a" stroke-linejoin="round" stroke-linecap="round"><path d="M9.5 1.5L20 1.5L19 14L8 14Z"/><path d="M12.8 1.5L12 14M16.4 1.5L15.6 14" fill="none" stroke-width="1.2"/><path d="M8 14L19 14L16 20.5L4 20.5Z"/><path d="M4 20.5L4 28.5M16 20.5L16 29.5M19.3 14.5L20 25.5M8.6 21L8.6 24.5" fill="none"/></g><g transform="translate(18,17) scale(1.08333)"><rect x="0" y="0" width="12" height="12" fill="#dbe9f6" stroke="#1b6fb5" stroke-width="1.4"/><rect x="3" y="0.7" width="6" height="3.6" fill="#fff" stroke="#1b6fb5" stroke-width="1"/><rect x="3" y="7" width="6" height="5" fill="#1b6fb5"/><rect x="6.5" y="8.2" width="1.6" height="2.6" fill="#fff"/></g></svg>
<span class="t" style="left:1053.2px;top:98.0px;font-size:12px;color:#505050;letter-spacing:-0.346px;">Assembler</span>
<svg style="position:absolute;left:1137px;top:59.4px;" width="32" height="32" viewBox="0 0 32 32"><g transform="translate(8,2) scale(0.55)" opacity="1" stroke="#ee7a2c" stroke-width="1.5" fill="#ffe88a" stroke-linejoin="round" stroke-linecap="round"><path d="M9.5 1.5L20 1.5L19 14L8 14Z"/><path d="M12.8 1.5L12 14M16.4 1.5L15.6 14" fill="none" stroke-width="1.2"/><path d="M8 14L19 14L16 20.5L4 20.5Z"/><path d="M4 20.5L4 28.5M16 20.5L16 29.5M19.3 14.5L20 25.5M8.6 21L8.6 24.5" fill="none"/></g><path d="M14 12L19 8L17.500 12L21 11L14 19L16 13.500Z" fill="#f4a040"/><path d="M6 19L11 17" stroke="#f4a070" stroke-width="1.5" stroke-dasharray="1.500 1"/></svg>
<span class="t" style="left:1114.2px;top:98.0px;font-size:12px;color:#505050;letter-spacing:-0.322px;">Placer symbole</span>
<span class="t" style="left:1128.4px;top:111.0px;font-size:12px;color:#505050;letter-spacing:-0.286px;">électrique</span>
<svg style="position:absolute;left:1231px;top:59.4px;" width="32" height="32" viewBox="0 0 32 32"><g transform="translate(-1,0) scale(1)" opacity="1" stroke="#ee7a2c" stroke-width="1.5" fill="#ffe88a" stroke-linejoin="round" stroke-linecap="round"><path d="M9.5 1.5L20 1.5L19 14L8 14Z"/><path d="M12.8 1.5L12 14M16.4 1.5L15.6 14" fill="none" stroke-width="1.2"/><path d="M8 14L19 14L16 20.5L4 20.5Z"/><path d="M4 20.5L4 28.5M16 20.5L16 29.5M19.3 14.5L20 25.5M8.6 21L8.6 24.5" fill="none"/></g><path d="M17 17H22L23.500 19H31V28H17Z" fill="#fff" stroke="#4f8fd0" stroke-width="1.5" stroke-linejoin="round"/><path d="M17 28L19 21H32L30 28Z" fill="#eaf3fc" stroke="#4f8fd0" stroke-width="1.3" stroke-linejoin="round"/></svg>
<span class="t" style="left:1226.8px;top:98.0px;font-size:12px;color:#505050;letter-spacing:-0.293px;">Modifier</span>
<span class="t" style="left:1216.4px;top:111.0px;font-size:12px;color:#505050;letter-spacing:-0.297px;">bibliothèque</span>
<svg style="position:absolute;left:1293px;top:59.4px;" width="32" height="32" viewBox="0 0 32 32"><g transform="translate(-1,0) scale(1)" opacity="1" stroke="#ee7a2c" stroke-width="1.5" fill="#ffe88a" stroke-linejoin="round" stroke-linecap="round"><path d="M9.5 1.5L20 1.5L19 14L8 14Z"/><path d="M12.8 1.5L12 14M16.4 1.5L15.6 14" fill="none" stroke-width="1.2"/><path d="M8 14L19 14L16 20.5L4 20.5Z"/><path d="M4 20.5L4 28.5M16 20.5L16 29.5M19.3 14.5L20 25.5M8.6 21L8.6 24.5" fill="none"/></g><g transform="translate(17,15) scale(1.16667)"><rect x="0" y="0" width="12" height="12" fill="#dbe9f6" stroke="#1b6fb5" stroke-width="1.4"/><rect x="3" y="0.7" width="6" height="3.6" fill="#fff" stroke="#1b6fb5" stroke-width="1"/><rect x="3" y="7" width="6" height="5" fill="#1b6fb5"/><rect x="6.5" y="8.2" width="1.6" height="2.6" fill="#fff"/></g></svg>
<span class="t" style="left:1291.0px;top:98.0px;font-size:12px;color:#505050;letter-spacing:-0.349px;">Sauver</span>
<span class="t" style="left:1301.4px;top:111.0px;font-size:12px;color:#505050;letter-spacing:-0.294px;">bib</span>
<svg style="position:absolute;left:1347px;top:59.4px;" width="32" height="32" viewBox="0 0 32 32"><g transform="translate(-1,0) scale(1)" opacity="1" stroke="#ee7a2c" stroke-width="1.5" fill="#ffe88a" stroke-linejoin="round" stroke-linecap="round"><path d="M9.5 1.5L20 1.5L19 14L8 14Z"/><path d="M12.8 1.5L12 14M16.4 1.5L15.6 14" fill="none" stroke-width="1.2"/><path d="M8 14L19 14L16 20.5L4 20.5Z"/><path d="M4 20.5L4 28.5M16 20.5L16 29.5M19.3 14.5L20 25.5M8.6 21L8.6 24.5" fill="none"/></g><g transform="translate(23,22)"><circle r="5" fill="none" stroke="#3fae49" stroke-width="2.6"/><path d="M5 0L8.2 0" stroke="#3fae49" stroke-width="2.6"/><path d="M3.53553 3.53553L5.79828 5.79828" stroke="#3fae49" stroke-width="2.6"/><path d="M3.06162e-16 5L5.02105e-16 8.2" stroke="#3fae49" stroke-width="2.6"/><path d="M-3.53553 3.53553L-5.79828 5.79828" stroke="#3fae49" stroke-width="2.6"/><path d="M-5 6.12323e-16L-8.2 1.00421e-15" stroke="#3fae49" stroke-width="2.6"/><path d="M-3.53553 -3.53553L-5.79828 -5.79828" stroke="#3fae49" stroke-width="2.6"/><path d="M-9.18485e-16 -5L-1.50632e-15 -8.2" stroke="#3fae49" stroke-width="2.6"/><path d="M3.53553 -3.53553L5.79828 -5.79828" stroke="#3fae49" stroke-width="2.6"/><circle r="2.6" fill="#fff"/></g></svg>
<span class="t" style="left:1332.4px;top:98.0px;font-size:12px;color:#505050;letter-spacing:-0.323px;">Préférences</span>
<span class="t" style="left:1344.7px;top:111.0px;font-size:12px;color:#505050;letter-spacing:-0.236px;">librairie</span>
<svg style="position:absolute;left:1427px;top:59.4px;" width="32" height="32" viewBox="0 0 32 32"><g transform="translate(-1,0) scale(1)" opacity="1" stroke="#ee7a2c" stroke-width="1.5" fill="#ffe88a" stroke-linejoin="round" stroke-linecap="round"><path d="M9.5 1.5L20 1.5L19 14L8 14Z"/><path d="M12.8 1.5L12 14M16.4 1.5L15.6 14" fill="none" stroke-width="1.2"/><path d="M8 14L19 14L16 20.5L4 20.5Z"/><path d="M4 20.5L4 28.5M16 20.5L16 29.5M19.3 14.5L20 25.5M8.6 21L8.6 24.5" fill="none"/></g><path d="M18 12H26M19 17H30M21 21H30" stroke="#1b6fb5" stroke-width="1.8"/><path d="M19 25H30" stroke="#9fc0e4" stroke-width="1.800"/></svg>
<span class="t" style="left:1403.0px;top:98.0px;font-size:12px;color:#505050;letter-spacing:-0.311px;">Modifier chemin</span>
<span class="t" style="left:1404.5px;top:111.0px;font-size:12px;color:#505050;letter-spacing:-0.298px;">de bibliothèque</span>
<svg style="position:absolute;left:1524px;top:59.4px;" width="32" height="32" viewBox="0 0 32 32"><path d="M1 8L13 2L25 8L13 14Z" fill="#fff" stroke="#1b6fb5" stroke-width="1.6" stroke-linejoin="round"/><path d="M1 16L13 10L25 16L13 22Z" fill="#fff" stroke="#1b6fb5" stroke-width="1.6" stroke-linejoin="round"/><path d="M1 24L13 18L25 24L13 30Z" fill="#fff" stroke="#1b6fb5" stroke-width="1.6" stroke-linejoin="round"/><g transform="translate(12,0) scale(0.95)" opacity="1" stroke="#ee7a2c" stroke-width="1.5" fill="#ffe88a" stroke-linejoin="round" stroke-linecap="round"><path d="M9.5 1.5L20 1.5L19 14L8 14Z"/><path d="M12.8 1.5L12 14M16.4 1.5L15.6 14" fill="none" stroke-width="1.2"/><path d="M8 14L19 14L16 20.5L4 20.5Z"/><path d="M4 20.5L4 28.5M16 20.5L16 29.5M19.3 14.5L20 25.5M8.6 21L8.6 24.5" fill="none"/></g></svg>
<span class="t" style="left:1493.7px;top:98.0px;font-size:12px;color:#505050;letter-spacing:-0.284px;">Définir les calques</span>
<span class="t" style="left:1502.7px;top:111.0px;font-size:12px;color:#505050;letter-spacing:-0.290px;">d'objets placés</span>
<svg style="position:absolute;left:1620px;top:59.4px;" width="32" height="32" viewBox="0 0 32 32"><rect x="1.700" y="0.800" width="26" height="29" fill="none" stroke="#e2553a" stroke-width="1.600" stroke-dasharray="2 1.600"/><rect x="5" y="4" width="13" height="11" fill="#e6f0fa" stroke="#1b6fb5" stroke-width="1.700"/><circle cx="20.500" cy="12" r="7" fill="#ffd75a" stroke="#f0b030" stroke-width="1"/><path d="M3.500 28L11.500 20" stroke="#1b6fb5" stroke-width="1.800"/><g transform="translate(19,16)"><rect x="-1" y="-2" width="14" height="17" fill="#fff"/><path d="M3 6V3.5A3 3 0 0 1 9 3.5V6" fill="none" stroke="#1b6fb5" stroke-width="1.6"/><rect x="1" y="6" width="10" height="8" fill="#fff" stroke="#1b6fb5" stroke-width="1.6"/><rect x="5.2" y="8.5" width="1.6" height="3" fill="#1b6fb5"/></g></svg>
<span class="t" style="left:1603.7px;top:98.0px;font-size:12px;color:#505050;transform-origin:0 50%;transform:scaleX(0.8900);">GROUPE par</span>
<span class="t" style="left:1613.6px;top:111.0px;font-size:12px;color:#505050;letter-spacing:-0.289px;">sélection</span>
<svg style="position:absolute;left:1680px;top:59.4px;" width="32" height="32" viewBox="0 0 32 32"><rect x="1.700" y="0.800" width="26" height="29" fill="none" stroke="#e2553a" stroke-width="1.600" stroke-dasharray="2 1.600"/><rect x="5" y="4" width="13" height="11" fill="#e6f0fa" stroke="#1b6fb5" stroke-width="1.700"/><circle cx="20.500" cy="12" r="7" fill="#ffd75a" stroke="#f0b030" stroke-width="1"/><path d="M3.500 28L11.500 20" stroke="#1b6fb5" stroke-width="1.800"/><rect x="17" y="14" width="16" height="16" fill="#fff"/><g transform="translate(25,22)" fill="none" stroke="#1b6fb5" stroke-width="2"><path d="M-6 0A6 6 0 0 1 4.8 -3.6"/><path d="M6 0A6 6 0 0 1 -4.8 3.6"/></g><path d="M28 16.6 l4 -4 l0 6z" fill="#1b6fb5"/><path d="M22 27.4 l-4 4 l0 -6z" fill="#1b6fb5"/></svg>
<span class="t" style="left:1673.1px;top:98.0px;font-size:12px;color:#505050;transform-origin:0 50%;transform:scaleX(0.8800);">GROUPE</span>
<span class="t" style="left:1685.2px;top:111.0px;font-size:12px;color:#505050;transform-origin:0 50%;transform:scaleX(0.9000);">MAJ</span>
<svg style="position:absolute;left:1730px;top:59.4px;" width="32" height="32" viewBox="0 0 32 32"><rect x="1.700" y="0.800" width="26" height="29" fill="none" stroke="#e2553a" stroke-width="1.600" stroke-dasharray="2 1.600"/><rect x="5" y="4" width="13" height="11" fill="#e6f0fa" stroke="#1b6fb5" stroke-width="1.700"/><circle cx="20.500" cy="12" r="7" fill="#ffd75a" stroke="#f0b030" stroke-width="1"/><path d="M3.500 28L11.500 20" stroke="#1b6fb5" stroke-width="1.800"/><g transform="translate(19,16)"><rect x="-1" y="-2" width="14" height="17" fill="#fff"/><path d="M3 6V3.5A3 3 0 0 1 9 3.5V4.5" fill="none" stroke="#1b6fb5" stroke-width="1.6" transform="translate(0,-1)"/><rect x="1" y="6" width="10" height="8" fill="#fff" stroke="#1b6fb5" stroke-width="1.6"/><rect x="5.2" y="8.5" width="1.6" height="3" fill="#1b6fb5"/></g></svg>
<span class="t" style="left:1723.9px;top:98.0px;font-size:12px;color:#505050;letter-spacing:-0.321px;">Exploser</span>
<span class="t" style="left:1728.3px;top:111.0px;font-size:12px;color:#505050;letter-spacing:-0.342px;">groupe</span>
<svg style="position:absolute;left:1790px;top:59.4px;" width="32" height="32" viewBox="0 0 32 32"><g transform="translate(-1,0) scale(1)" opacity="1" stroke="#ee7a2c" stroke-width="1.5" fill="#ffe88a" stroke-linejoin="round" stroke-linecap="round"><path d="M9.5 1.5L20 1.5L19 14L8 14Z"/><path d="M12.8 1.5L12 14M16.4 1.5L15.6 14" fill="none" stroke-width="1.2"/><path d="M8 14L19 14L16 20.5L4 20.5Z"/><path d="M4 20.5L4 28.5M16 20.5L16 29.5M19.3 14.5L20 25.5M8.6 21L8.6 24.5" fill="none"/></g><rect x="15" y="12" width="16" height="17" fill="#fff"/><path d="M17 27L18 23L27 14L30 17L21 26Z" fill="#fff" stroke="#1b6fb5" stroke-width="1.5" stroke-linejoin="round"/><path d="M17 27L18 23L21 26Z" fill="#1b6fb5"/></svg>
<span class="t" style="left:1785.8px;top:98.0px;font-size:12px;color:#505050;letter-spacing:-0.293px;">Modifier</span>
<span class="t" style="left:1788.6px;top:111.0px;font-size:12px;color:#505050;transform-origin:0 50%;transform:scaleX(0.9000);">OBJET</span>
<svg style="position:absolute;left:1840px;top:59.4px;" width="32" height="32" viewBox="0 0 32 32"><g transform="translate(-1,0) scale(1)" opacity="1" stroke="#ee7a2c" stroke-width="1.5" fill="#ffe88a" stroke-linejoin="round" stroke-linecap="round"><path d="M9.5 1.5L20 1.5L19 14L8 14Z"/><path d="M12.8 1.5L12 14M16.4 1.5L15.6 14" fill="none" stroke-width="1.2"/><path d="M8 14L19 14L16 20.5L4 20.5Z"/><path d="M4 20.5L4 28.5M16 20.5L16 29.5M19.3 14.5L20 25.5M8.6 21L8.6 24.5" fill="none"/></g><rect x="15" y="11" width="16" height="18" fill="#fff"/><g transform="translate(17,14)"><rect x="-1" y="-2" width="14" height="17" fill="#fff"/><path d="M3 6V3.5A3 3 0 0 1 9 3.5V4.5" fill="none" stroke="#1b6fb5" stroke-width="1.6" transform="translate(0,-1)"/><rect x="1" y="6" width="10" height="8" fill="#fff" stroke="#1b6fb5" stroke-width="1.6"/><rect x="5.2" y="8.5" width="1.6" height="3" fill="#1b6fb5"/></g></svg>
<span class="t" style="left:1833.9px;top:98.0px;font-size:12px;color:#505050;letter-spacing:-0.321px;">Exploser</span>
<span class="t" style="left:1838.6px;top:111.0px;font-size:12px;color:#505050;transform-origin:0 50%;transform:scaleX(0.9000);">OBJET</span>
<span class="t" style="left:1663.0px;top:127.5px;font-size:12px;color:#5a5a5a;">Groupes</span>
<span class="t" style="left:1794.7px;top:127.5px;font-size:12px;color:#5a5a5a;">Objets placés</span>
<!-- s_tools.canvas -->
<div class="b" style="left:28px;top:178px;width:1793px;height:793px;box-sizing:border-box;background:#fff;border:2px solid;border-color:#8d8d8d #f2f2f2 #f2f2f2 #8d8d8d;"></div>
<svg style="position:absolute;left:1736px;top:185px;" width="80" height="80" viewBox="0 0 80 80"><path d="M5.500 15V74.500H64" fill="none" stroke="#000" stroke-width="1.2"/><text x="7" y="12" font-family="Liberation Sans,sans-serif" font-size="13" font-weight="bold" fill="#000">y</text><text x="66" y="70" font-family="Liberation Sans,sans-serif" font-size="13" font-weight="bold" fill="#000">x</text><text x="7" y="70" font-family="Liberation Sans,sans-serif" font-size="12" font-weight="bold" fill="#c9952e">z</text></svg>
<svg style="position:absolute;left:73px;top:912px;" width="15" height="15" viewBox="0 0 15 15"><path d="M7.500 1V14M1 7.500H14M3 3L12 12M12 3L3 12" stroke="#000" stroke-width="1"/></svg>
<!-- s_tools.proptb -->
<div class="b" style="left:0px;top:147px;width:1920px;height:1px;background:#c5cad4;"></div>
<div class="b" style="left:2px;top:149px;width:1830px;height:28px;background:linear-gradient(#eff2f7,#e3e7ee 60%,#d6dbe4);border-radius:4px 4px 4px 4px;"></div>
<div class="b" style="left:1832px;top:148px;width:88px;height:30px;background:#dcdee8;"></div>
<div class="b" style="left:6px;top:154px;width:2px;height:2px;background:#3f4654;"></div><div class="b" style="left:6px;top:158px;width:2px;height:2px;background:#3f4654;"></div><div class="b" style="left:6px;top:162px;width:2px;height:2px;background:#3f4654;"></div><div class="b" style="left:6px;top:166px;width:2px;height:2px;background:#3f4654;"></div>
<svg style="position:absolute;left:11px;top:152px;" width="20" height="20" viewBox="0 0 20 20"><path d="M3 5.500L5 2L7 5.500L5 9Z" fill="#fff" stroke="#1b6fb5" stroke-width="1.1"/><path d="M5 17L13 8" stroke="#1b6fb5" stroke-width="2"/><path d="M12 5L16 9" stroke="#1b6fb5" stroke-width="2.400"/><path d="M13 7.500Q15 2.500 18 4.500Q19.500 6.500 15 9" fill="#fff" stroke="#1b6fb5" stroke-width="1.200"/></svg>
<div class="b" style="left:34px;top:154px;width:1px;height:18px;background:#9aa0ab;"></div>
<div class="b" style="left:38px;top:151px;width:99px;height:23px;box-sizing:border-box;background:#fff;border:1px solid;border-color:#868686 #f6f6f6 #f6f6f6 #868686;box-shadow:inset 1px 1px 0 #5f5f5f, inset -1px -1px 0 #dcdcdc;"></div><div class="b" style="left:118px;top:153px;width:17px;height:19px;box-sizing:border-box;background:#ececec;border:1px solid;border-color:#fff #6e6e6e #6e6e6e #fff;box-shadow:inset -1px -1px 0 #a5a5a5;"></div><svg style="position:absolute;left:123px;top:160.5px;" width="8" height="5" viewBox="0 0 8 5"><path d="M0 0H7L3.500 4Z" fill="#000"/></svg><span class="t" style="left:60.0px;top:154.5px;font-size:15px;color:#000;font-weight:bold;">1</span>
<div class="b" style="left:42px;top:156px;width:15px;height:15px;background:#000;"></div>
<div class="b" style="left:139px;top:151px;width:110px;height:23px;box-sizing:border-box;background:#fff;border:1px solid;border-color:#868686 #f6f6f6 #f6f6f6 #868686;box-shadow:inset 1px 1px 0 #5f5f5f, inset -1px -1px 0 #dcdcdc;"></div><div class="b" style="left:231px;top:153px;width:16px;height:19px;box-sizing:border-box;background:#ececec;border:1px solid;border-color:#fff #6e6e6e #6e6e6e #fff;box-shadow:inset -1px -1px 0 #a5a5a5;"></div><svg style="position:absolute;left:235.5px;top:160.5px;" width="8" height="5" viewBox="0 0 8 5"><path d="M0 0H7L3.500 4Z" fill="#000"/></svg>
<div class="b" style="left:142px;top:163px;width:76px;height:1px;background:#000;"></div>
<svg style="position:absolute;left:1676px;top:154px;" width="20" height="18" viewBox="0 0 20 18"><path d="M1 5H8M1 3V7M8 3V7" stroke="#7fb2e0" stroke-width="1" fill="none"/><path d="M6 14L13 8L16 11L9 16Z" fill="#4cae4c" stroke="#2e8b2e" stroke-width="1"/></svg>
<div class="b" style="left:1697px;top:151px;width:98px;height:23px;box-sizing:border-box;background:#fff;border:1px solid;border-color:#868686 #f6f6f6 #f6f6f6 #868686;box-shadow:inset 1px 1px 0 #5f5f5f, inset -1px -1px 0 #dcdcdc;"></div><div class="b" style="left:1776px;top:153px;width:17px;height:19px;box-sizing:border-box;background:#ececec;border:1px solid;border-color:#fff #6e6e6e #6e6e6e #fff;box-shadow:inset -1px -1px 0 #a5a5a5;"></div><svg style="position:absolute;left:1781px;top:160.5px;" width="8" height="5" viewBox="0 0 8 5"><path d="M0 0H7L3.500 4Z" fill="#000"/></svg><span class="t" style="left:1701.0px;top:153.1px;font-size:15px;color:#000;transform-origin:0 50%;transform:scaleX(0.9115);font-weight:bold;">EXT 0.12</span>
<svg style="position:absolute;left:1798px;top:154px;" width="22" height="18" viewBox="0 0 22 18"><path d="M1 5H10M1 3V7M10 3V7" stroke="#7fb2e0" stroke-width="1" fill="none"/><path d="M6 15L8 11L15 4L18 7L11 14Z" fill="#5cb85c" stroke="#3a9a3a" stroke-width="0.800"/></svg>
<svg style="position:absolute;left:1821px;top:166px;" width="7" height="7" viewBox="0 0 7 7"><path d="M0 0.500H6" stroke="#555" stroke-width="1"/><path d="M0 2.500H6L3 6Z" fill="#555"/></svg>
<!-- s_tools.lefttb -->
<div class="b" style="left:1px;top:178px;width:25px;height:494px;box-sizing:border-box;background:linear-gradient(90deg,#eceef4,#dde3ee 50%,#eef0f5);border:1px solid #f2f4f8;border-right-color:#b9bcc4;border-radius:5px 5px 3px 3px;box-shadow:0 0 0 0.500px #cdd2db;"></div>
<div class="b" style="left:1px;top:658px;width:25px;height:14px;background:#cfd4dd;border-radius:0 0 3px 3px;"></div>
<div class="b" style="left:4.5px;top:183px;width:2px;height:2px;background:#3f4654;"></div><div class="b" style="left:8.5px;top:183px;width:2px;height:2px;background:#3f4654;"></div><div class="b" style="left:12.5px;top:183px;width:2px;height:2px;background:#3f4654;"></div><div class="b" style="left:16.5px;top:183px;width:2px;height:2px;background:#3f4654;"></div><div class="b" style="left:20.5px;top:183px;width:2px;height:2px;background:#3f4654;"></div>
<svg style="position:absolute;left:5.5px;top:190px;" width="16" height="16" viewBox="0 0 16 16"><path d="M1 8L5 3H15V13H5Z" fill="#fff" stroke="#1b6fb5" stroke-width="1.300"/><text x="7.500" y="11.500" font-size="9" font-weight="bold" font-family="Liberation Sans,sans-serif" fill="#b8960a">?</text></svg>
<div class="b" style="left:5px;top:211px;width:16px;height:1px;background:#7d8796;"></div>
<svg style="position:absolute;left:5.5px;top:219px;" width="16" height="16" viewBox="0 0 16 16"><text x="0" y="6" font-size="6" font-family="Liberation Sans,sans-serif" fill="#7fb2e0">x y z</text><circle cx="3" cy="12" r="1.200" fill="#5f9e1e"/><text x="9" y="15" font-size="9" font-weight="bold" font-family="Liberation Sans,sans-serif" fill="#5f9e1e">?</text></svg>
<svg style="position:absolute;left:5.5px;top:241px;" width="16" height="16" viewBox="0 0 16 16"><path d="M1 1V6M15 1V6M2 3.500H14" stroke="#1b6fb5" stroke-width="1" fill="none"/><rect x="0.500" y="8.500" width="15" height="5" fill="#fff" stroke="#5f9e1e" stroke-width="1.400"/><path d="M3 9V11.500M5.500 9V11.500M8 9V11.500M10.500 9V11.500M13 9V11.500" stroke="#5f9e1e" stroke-width="1"/></svg>
<svg style="position:absolute;left:5.5px;top:263px;" width="16" height="16" viewBox="0 0 16 16"><path d="M1 0V5M15 0V5M2 2.500H14" stroke="#1b6fb5" stroke-width="1" fill="none"/><rect x="0.500" y="7" width="15" height="5" fill="#fff" stroke="#5f9e1e" stroke-width="1.400"/><path d="M3 7.500V10M5.500 7.500V10M8 7.500V10M10.500 7.500V10M13 7.500V10" stroke="#5f9e1e" stroke-width="1"/><path d="M0 14.500H16" stroke="#1b6fb5" stroke-width="1.400"/></svg>
<svg style="position:absolute;left:5.5px;top:285px;" width="16" height="16" viewBox="0 0 16 16"><path d="M2 1V8H9" stroke="#1b6fb5" stroke-width="1.400" fill="none"/><text x="9" y="8" font-size="9" font-weight="bold" font-family="Liberation Sans,sans-serif" fill="#5f9e1e">?</text><rect x="0.500" y="10.500" width="15" height="5" fill="#fff" stroke="#5f9e1e" stroke-width="1.400"/><path d="M3 11V13.500M5.500 11V13.500M8 11V13.500M10.500 11V13.500M13 11V13.500" stroke="#5f9e1e" stroke-width="1"/></svg>
<div class="b" style="left:5px;top:305px;width:16px;height:1px;background:#7d8796;"></div>
<svg style="position:absolute;left:5.5px;top:313px;" width="16" height="16" viewBox="0 0 16 16"><path d="M1 1H9V5H5V9H1Z" stroke="#1b6fb5" stroke-width="1.200" fill="#dce9f6"/><text x="9.500" y="8" font-size="9" font-weight="bold" font-family="Liberation Sans,sans-serif" fill="#5f9e1e">?</text><rect x="0.500" y="10.500" width="15" height="5" fill="#fff" stroke="#5f9e1e" stroke-width="1.400"/><path d="M3 11V13.500M5.500 11V13.500M8 11V13.500M10.500 11V13.500M13 11V13.500" stroke="#5f9e1e" stroke-width="1"/></svg>
<svg style="position:absolute;left:5.5px;top:335px;" width="16" height="16" viewBox="0 0 16 16"><path d="M1 1H9V5H5V9H1Z" stroke="#1b6fb5" stroke-width="1.200" fill="#dce9f6"/><text x="9.500" y="8" font-size="9" font-weight="bold" font-family="Liberation Sans,sans-serif" fill="#5f9e1e">?</text><rect x="0.500" y="10.500" width="15" height="5" fill="#fff" stroke="#5f9e1e" stroke-width="1.400"/><path d="M3 11V13.500M5.500 11V13.500M8 11V13.500M10.500 11V13.500M13 11V13.500" stroke="#5f9e1e" stroke-width="1"/></svg>
<svg style="position:absolute;left:5.5px;top:358px;" width="16" height="16" viewBox="0 0 16 16"><path d="M1 1H9V5H5V9H1Z" stroke="#1b6fb5" stroke-width="1.200" fill="#dce9f6"/><text x="9.500" y="8" font-size="9" font-weight="bold" font-family="Liberation Sans,sans-serif" fill="#5f9e1e">?</text><rect x="0.500" y="10.500" width="15" height="5" fill="#fff" stroke="#5f9e1e" stroke-width="1.400"/><path d="M3 11V13.500M5.500 11V13.500M8 11V13.500M10.500 11V13.500M13 11V13.500" stroke="#5f9e1e" stroke-width="1"/></svg>
<div class="b" style="left:5px;top:378px;width:16px;height:1px;background:#7d8796;"></div>
<svg style="position:absolute;left:5.5px;top:385px;" width="16" height="16" viewBox="0 0 16 16"><path d="M1 1H9V5H5V9H1Z" stroke="#1b6fb5" stroke-width="1.200" fill="#dce9f6"/><text x="9.500" y="8" font-size="9" font-weight="bold" font-family="Liberation Sans,sans-serif" fill="#5f9e1e">?</text><rect x="0.500" y="10.500" width="15" height="5" fill="#fff" stroke="#5f9e1e" stroke-width="1.400"/><path d="M3 11V13.500M5.500 11V13.500M8 11V13.500M10.500 11V13.500M13 11V13.500" stroke="#5f9e1e" stroke-width="1"/></svg>
<svg style="position:absolute;left:5.5px;top:407px;" width="16" height="16" viewBox="0 0 16 16"><path d="M1 1H9V5H5V9H1Z" stroke="#1b6fb5" stroke-width="1.200" fill="#dce9f6"/><text x="9.500" y="8" font-size="9" font-weight="bold" font-family="Liberation Sans,sans-serif" fill="#5f9e1e">?</text><rect x="0.500" y="10.500" width="15" height="5" fill="#fff" stroke="#5f9e1e" stroke-width="1.400"/><path d="M3 11V13.500M5.500 11V13.500M8 11V13.500M10.500 11V13.500M13 11V13.500" stroke="#5f9e1e" stroke-width="1"/></svg>
<svg style="position:absolute;left:5.5px;top:429px;" width="16" height="16" viewBox="0 0 16 16"><path d="M1 1H9V5H5V9H1Z" stroke="#1b6fb5" stroke-width="1.200" fill="#dce9f6"/><text x="9.500" y="8" font-size="9" font-weight="bold" font-family="Liberation Sans,sans-serif" fill="#5f9e1e">?</text><rect x="0.500" y="10.500" width="15" height="5" fill="#fff" stroke="#5f9e1e" stroke-width="1.400"/><path d="M3 11V13.500M5.500 11V13.500M8 11V13.500M10.500 11V13.500M13 11V13.500" stroke="#5f9e1e" stroke-width="1"/></svg>
<svg style="position:absolute;left:5.5px;top:451px;" width="16" height="16" viewBox="0 0 16 16"><path d="M1 1H9V5H5V9H1Z" stroke="#1b6fb5" stroke-width="1.200" fill="#dce9f6"/><text x="9.500" y="8" font-size="9" font-weight="bold" font-family="Liberation Sans,sans-serif" fill="#5f9e1e">?</text><rect x="0.500" y="10.500" width="15" height="5" fill="#fff" stroke="#5f9e1e" stroke-width="1.400"/><path d="M3 11V13.500M5.500 11V13.500M8 11V13.500M10.500 11V13.500M13 11V13.500" stroke="#5f9e1e" stroke-width="1"/></svg>
<svg style="position:absolute;left:5.5px;top:473px;" width="16" height="16" viewBox="0 0 16 16"><path d="M1 1H9V5H5V9H1Z" stroke="#1b6fb5" stroke-width="1.200" fill="#dce9f6"/><text x="9.500" y="8" font-size="9" font-weight="bold" font-family="Liberation Sans,sans-serif" fill="#5f9e1e">?</text><rect x="0.500" y="10.500" width="15" height="5" fill="#fff" stroke="#5f9e1e" stroke-width="1.400"/><path d="M3 11V13.500M5.500 11V13.500M8 11V13.500M10.500 11V13.500M13 11V13.500" stroke="#5f9e1e" stroke-width="1"/></svg>
<div class="b" style="left:5px;top:493px;width:16px;height:1px;background:#7d8796;"></div>
<svg style="position:absolute;left:5.5px;top:501px;" width="16" height="16" viewBox="0 0 16 16"><rect x="1" y="1" width="9" height="8" fill="#b5cfea" stroke="#7fb2e0" stroke-width="0.800"/><text x="0.500" y="15.500" font-size="7" font-weight="bold" font-family="Liberation Sans,sans-serif" fill="#5f9e1e">[m²]</text></svg>
<svg style="position:absolute;left:5.5px;top:523px;" width="16" height="16" viewBox="0 0 16 16"><rect x="1" y="1" width="9" height="8" fill="#b5cfea" stroke="#7fb2e0" stroke-width="0.800"/><text x="0.500" y="15.500" font-size="7" font-weight="bold" font-family="Liberation Sans,sans-serif" fill="#5f9e1e">[m²]</text></svg>
<svg style="position:absolute;left:5.5px;top:545px;" width="16" height="16" viewBox="0 0 16 16"><text x="0.500" y="7" font-size="7" font-weight="bold" font-family="Liberation Sans,sans-serif" fill="#5f9e1e">[m³]</text><text x="0" y="15.500" font-size="7" font-weight="bold" font-family="Liberation Sans,sans-serif" fill="#5f9e1e">[Fr²]</text></svg>
<div class="b" style="left:5px;top:565px;width:16px;height:1px;background:#7d8796;"></div>
<svg style="position:absolute;left:5.5px;top:573px;" width="16" height="16" viewBox="0 0 16 16"><path d="M2 1H10L14 5V15H2Z" fill="#fff" stroke="#1b6fb5" stroke-width="1.200"/><path d="M5 7H11M5 9.500H11M5 12H11" stroke="#5f9e1e" stroke-width="1.200"/></svg>
<svg style="position:absolute;left:5.5px;top:595px;" width="16" height="16" viewBox="0 0 16 16"><path d="M2 1H10L14 5V15H2Z" fill="#fff" stroke="#1b6fb5" stroke-width="1.200"/><path d="M5 7H11M5 9.500H11M5 12H11" stroke="#5f9e1e" stroke-width="1.200"/></svg>
<div class="b" style="left:5px;top:615px;width:16px;height:1px;background:#7d8796;"></div>
<svg style="position:absolute;left:5.5px;top:622px;" width="16" height="16" viewBox="0 0 16 16"><circle cx="4" cy="3" r="2" fill="#7fb2e0"/><rect x="7" y="1" width="7" height="5" fill="#9db8d6"/><text x="0" y="11.500" font-size="6" font-weight="bold" font-family="Liberation Sans,sans-serif" fill="#d03030">www</text><path d="M12 10V16M9 13H15" stroke="#2e9e2e" stroke-width="2"/></svg>
<svg style="position:absolute;left:18px;top:662px;" width="5" height="7" viewBox="0 0 5 7"><path d="M0.500 0.500V6" stroke="#555" stroke-width="0.800"/><path d="M2 0.500L4.500 3.200L2 6Z" fill="#555"/></svg>
<svg style="position:absolute;left:6px;top:661px;" width="8" height="7" viewBox="0 0 8 7"><path d="M1 0.500H6" stroke="#555" stroke-width="1"/><path d="M1 2.500H6L3.500 6Z" fill="#555"/></svg>
<div class="b" style="left:1px;top:672px;width:25px;height:332px;box-sizing:border-box;background:linear-gradient(90deg,#eceef4,#dde3ee 50%,#eef0f5);border:1px solid #f2f4f8;border-right-color:#b9bcc4;border-radius:5px 5px 3px 3px;box-shadow:0 0 0 0.500px #cdd2db;"></div>
<div class="b" style="left:1px;top:990px;width:25px;height:14px;background:#cfd4dd;border-radius:0 0 3px 3px;"></div>
<div class="b" style="left:4.5px;top:677px;width:2px;height:2px;background:#3f4654;"></div><div class="b" style="left:8.5px;top:677px;width:2px;height:2px;background:#3f4654;"></div><div class="b" style="left:12.5px;top:677px;width:2px;height:2px;background:#3f4654;"></div><div class="b" style="left:16.5px;top:677px;width:2px;height:2px;background:#3f4654;"></div><div class="b" style="left:20.5px;top:677px;width:2px;height:2px;background:#3f4654;"></div>
<svg style="position:absolute;left:5.5px;top:687px;" width="16" height="16" viewBox="0 0 16 16"><path d="M1 15L11 5" stroke="#1b6fb5" stroke-width="2"/><rect x="10" y="1.500" width="5" height="5" fill="#fff" stroke="#e03020" stroke-width="1.600"/></svg>
<svg style="position:absolute;left:5.5px;top:709px;" width="16" height="16" viewBox="0 0 16 16"><path d="M1 15L15 1" stroke="#1b6fb5" stroke-width="2"/><rect x="5.500" y="5.500" width="5" height="5" fill="#fff" stroke="#e03020" stroke-width="1.600"/></svg>
<svg style="position:absolute;left:5.5px;top:731px;" width="16" height="16" viewBox="0 0 16 16"><rect x="5.500" y="5.500" width="5" height="5" fill="#fff" stroke="#e03020" stroke-width="1.600"/><circle cx="2" cy="13" r="0.800" fill="#e88"/><circle cx="14" cy="3" r="0.800" fill="#e88"/></svg>
<svg style="position:absolute;left:5.5px;top:753px;" width="16" height="16" viewBox="0 0 16 16"><path d="M1 15L15 1M1 1L15 15" stroke="#1b6fb5" stroke-width="2"/><rect x="5.500" y="5.500" width="5" height="5" fill="#fff" stroke="#e03020" stroke-width="1.600"/></svg>
<svg style="position:absolute;left:5.5px;top:775px;" width="16" height="16" viewBox="0 0 16 16"><path d="M0 10H8" stroke="#1b6fb5" stroke-width="1" stroke-dasharray="1.500 1"/><text x="2" y="6" font-size="6" font-weight="bold" font-family="Liberation Sans,sans-serif" fill="#1b6fb5">d</text><circle cx="11.500" cy="10" r="3" fill="#fff" stroke="#e03020" stroke-width="1.600"/></svg>
<svg style="position:absolute;left:5.5px;top:797px;" width="16" height="16" viewBox="0 0 16 16"><path d="M0 8H16M6 1V15" stroke="#1b6fb5" stroke-width="2"/><circle cx="6" cy="8" r="3" fill="#fff" stroke="#e03020" stroke-width="1.600"/></svg>
<svg style="position:absolute;left:5.5px;top:819px;" width="16" height="16" viewBox="0 0 16 16"><path d="M2 4Q13 4 14 15" fill="none" stroke="#1b6fb5" stroke-width="1.800"/><path d="M5 4H15" stroke="#888" stroke-width="0.800" stroke-dasharray="1 1"/><circle cx="4" cy="4" r="3" fill="none" stroke="#c02020" stroke-width="1.600"/></svg>
<svg style="position:absolute;left:5.5px;top:840px;" width="16" height="16" viewBox="0 0 16 16"><path d="M0 10H8" stroke="#1b6fb5" stroke-width="1" stroke-dasharray="1.500 1"/><text x="3" y="6" font-size="6.500" font-weight="bold" font-family="Liberation Sans,sans-serif" fill="#1b6fb5">X</text><circle cx="11.500" cy="10" r="3" fill="#fff" stroke="#e03020" stroke-width="1.600"/></svg>
<svg style="position:absolute;left:5.5px;top:862px;" width="16" height="16" viewBox="0 0 16 16"><path d="M0 10H8" stroke="#1b6fb5" stroke-width="1" stroke-dasharray="1.500 1"/><text x="3" y="6" font-size="6.500" font-weight="bold" font-family="Liberation Sans,sans-serif" fill="#1b6fb5">Y</text><circle cx="11.500" cy="10" r="3" fill="#fff" stroke="#e03020" stroke-width="1.600"/></svg>
<svg style="position:absolute;left:5.5px;top:884px;" width="16" height="16" viewBox="0 0 16 16"><path d="M0 10H8" stroke="#1b6fb5" stroke-width="1" stroke-dasharray="1.500 1"/><text x="3" y="6" font-size="6.500" font-weight="bold" font-family="Liberation Sans,sans-serif" fill="#1b6fb5">Z</text><circle cx="11.500" cy="10" r="3" fill="#fff" stroke="#e03020" stroke-width="1.600"/></svg>
<svg style="position:absolute;left:5.5px;top:906px;" width="16" height="16" viewBox="0 0 16 16"><path d="M3 2V13H15" fill="none" stroke="#f08a1c" stroke-width="2.200"/><path d="M6 3H13V10" fill="none" stroke="#c33" stroke-width="0.800" stroke-dasharray="1 1"/></svg>
<div class="b" style="left:5px;top:926px;width:16px;height:1px;background:#7d8796;"></div>
<svg style="position:absolute;left:5.5px;top:933px;" width="16" height="16" viewBox="0 0 16 16"><path d="M2 14L4 2M1 14H15" stroke="#1b6fb5" stroke-width="2"/><rect x="7" y="2" width="3" height="11" fill="#7ac070"/><rect x="11" y="5" width="3" height="8" fill="#e88a70"/></svg>
<div class="b" style="left:5px;top:953px;width:16px;height:1px;background:#7d8796;"></div>
<svg style="position:absolute;left:5.5px;top:962px;" width="16" height="16" viewBox="0 0 16 16"><path d="M1 4L8 1L15 4V12L8 15L1 12Z" fill="#fff" stroke="#1b6fb5" stroke-width="1.200"/><path d="M1 4L8 7L15 4M8 7V15" fill="none" stroke="#1b6fb5" stroke-width="1"/><path d="M1 4L8 1L15 4L8 7Z" fill="#f07a28"/></svg>
<svg style="position:absolute;left:18px;top:994px;" width="5" height="7" viewBox="0 0 5 7"><path d="M0.500 0.500V6" stroke="#555" stroke-width="0.800"/><path d="M2 0.500L4.500 3.200L2 6Z" fill="#555"/></svg>
<svg style="position:absolute;left:6px;top:993px;" width="8" height="7" viewBox="0 0 8 7"><path d="M1 0.500H6" stroke="#555" stroke-width="1"/><path d="M1 2.500H6L3.500 6Z" fill="#555"/></svg>
<!-- s_tools.righttb -->
<div class="b" style="left:1821px;top:178px;width:99px;height:862px;background:#dcdee8;"></div>
<div class="b" style="left:1821px;top:178px;width:26px;height:826px;background:#f0f0f0;border-left:1px solid #e4e4e4;box-sizing:border-box;"></div>
<div class="b" style="left:1826px;top:179px;width:20px;height:144px;box-sizing:border-box;background:#f0f0f0;border:1px solid #b0b4bb;border-left-color:#d8d8d8;border-radius:0 3px 3px 0;"></div>
<span class="t" style="left:1843.500px;top:184.5px;font-size:12px;transform-origin:0 0;transform:rotate(90deg);letter-spacing:0.069px;color:#111">Gestionnaire de calques</span>
<div class="b" style="left:1826px;top:337px;width:20px;height:148px;box-sizing:border-box;background:#f0f0f0;border:1px solid #b0b4bb;border-left-color:#d8d8d8;border-radius:0 3px 3px 0;"></div>
<span class="t" style="left:1843.500px;top:342.5px;font-size:12px;transform-origin:0 0;transform:rotate(90deg);letter-spacing:0.081px;color:#111">Gestionnaire de rapports</span>
<div class="b" style="left:1847px;top:179px;width:35px;height:308px;box-sizing:border-box;background:linear-gradient(90deg,#eceef4,#dde3ee 50%,#eef0f5);border:1px solid #f2f4f8;border-right-color:#b9bcc4;border-radius:5px 5px 3px 3px;box-shadow:0 0 0 0.500px #cdd2db;"></div>
<div class="b" style="left:1847px;top:473px;width:35px;height:14px;background:#cfd4dd;border-radius:0 0 3px 3px;"></div>
<div class="b" style="left:1851.5px;top:184px;width:2px;height:2px;background:#3f4654;"></div><div class="b" style="left:1855.5px;top:184px;width:2px;height:2px;background:#3f4654;"></div><div class="b" style="left:1859.5px;top:184px;width:2px;height:2px;background:#3f4654;"></div><div class="b" style="left:1863.5px;top:184px;width:2px;height:2px;background:#3f4654;"></div><div class="b" style="left:1867.5px;top:184px;width:2px;height:2px;background:#3f4654;"></div><div class="b" style="left:1871.5px;top:184px;width:2px;height:2px;background:#3f4654;"></div><div class="b" style="left:1875.5px;top:184px;width:2px;height:2px;background:#3f4654;"></div>
<svg style="position:absolute;left:1851.5px;top:190px;" width="16" height="16" viewBox="0 0 16 16"><path d="M2 6V14H10L14 10" fill="none" stroke="#1b6fb5" stroke-width="1.600"/><path d="M3 4L13 1" stroke="#e03030" stroke-width="1.300"/><path d="M4 9H11" stroke="#7fb2e0" stroke-width="1" stroke-dasharray="1 1"/><path d="M15 7l-4.500 0.500 3 3z" fill="#1b6fb5"/><path d="M2 2H10" stroke="#3a9a3a" stroke-width="1" stroke-dasharray="1 1"/></svg>
<svg style="position:absolute;left:1872px;top:197px;" width="6" height="4" viewBox="0 0 6 4"><path d="M0 0H6L3 3.500Z" fill="#6d7480"/></svg>
<svg style="position:absolute;left:1856.5px;top:212px;" width="16" height="16" viewBox="0 0 16 16"><path d="M8 1L10.500 4H9V7H12V5.500L15 8L12 10.500V9H9V12H10.500L8 15L5.500 12H7V9H4V10.500L1 8L4 5.500V7H7V4H5.500Z" fill="#8a8f98"/></svg>
<svg style="position:absolute;left:1856.5px;top:235px;" width="16" height="16" viewBox="0 0 16 16"><g transform="scale(0.850)"><path d="M8 1L10.500 4H9V7H12V5.500L15 8L12 10.500V9H9V12H10.500L8 15L5.500 12H7V9H4V10.500L1 8L4 5.500V7H7V4H5.500Z" fill="#8a8f98"/></g><path d="M12 8V16M8 12H16" stroke="#3cae3c" stroke-width="2.600"/></svg>
<svg style="position:absolute;left:1851.5px;top:257px;" width="16" height="16" viewBox="0 0 16 16"><path d="M2 3L6 9L13 1M1 12H10M3 9V15" fill="none" stroke="#1b6fb5" stroke-width="1.300"/><path d="M5 6L9 10" stroke="#e03030" stroke-width="1.200"/></svg>
<svg style="position:absolute;left:1872px;top:264px;" width="6" height="4" viewBox="0 0 6 4"><path d="M0 0H6L3 3.500Z" fill="#6d7480"/></svg>
<svg style="position:absolute;left:1851.5px;top:279px;" width="16" height="16" viewBox="0 0 16 16"><path d="M1 1V6H5M8 7L6 11L10 14M9 6H13M10 14H14" fill="none" stroke="#1b6fb5" stroke-width="1.800"/></svg>
<svg style="position:absolute;left:1872px;top:286px;" width="6" height="4" viewBox="0 0 6 4"><path d="M0 0H6L3 3.500Z" fill="#6d7480"/></svg>
<svg style="position:absolute;left:1851.5px;top:301px;" width="16" height="16" viewBox="0 0 16 16"><path d="M2 1V14H14" fill="none" stroke="#1b6fb5" stroke-width="2.200"/><path d="M6 5V10H11" fill="none" stroke="#e88a70" stroke-width="1"/></svg>
<svg style="position:absolute;left:1872px;top:308px;" width="6" height="4" viewBox="0 0 6 4"><path d="M0 0H6L3 3.500Z" fill="#6d7480"/></svg>
<svg style="position:absolute;left:1851.5px;top:323px;" width="16" height="16" viewBox="0 0 16 16"><rect x="6" y="1" width="9" height="8" fill="none" stroke="#1b6fb5" stroke-width="1.400"/><rect x="1" y="7" width="8" height="7" fill="#eef" stroke="#8a8f98" stroke-width="1" stroke-dasharray="1.500 1"/><path d="M4 5L7 8" stroke="#e03030" stroke-width="1"/></svg>
<svg style="position:absolute;left:1872px;top:330px;" width="6" height="4" viewBox="0 0 6 4"><path d="M0 0H6L3 3.500Z" fill="#6d7480"/></svg>
<svg style="position:absolute;left:1851.5px;top:345px;" width="16" height="16" viewBox="0 0 16 16"><path d="M2 2H14M8 2V8M3 8H13" stroke="#4e8a7a" stroke-width="1.800" fill="none"/><path d="M6 12H14M10 9V15" stroke="#7a9a7a" stroke-width="1.400"/></svg>
<svg style="position:absolute;left:1872px;top:352px;" width="6" height="4" viewBox="0 0 6 4"><path d="M0 0H6L3 3.500Z" fill="#6d7480"/></svg>
<svg style="position:absolute;left:1851.5px;top:367px;" width="16" height="16" viewBox="0 0 16 16"><rect x="1" y="1" width="14" height="14" fill="none" stroke="#2e9e2e" stroke-width="1.300" stroke-dasharray="2 1.300"/><path d="M4 6L8 4L12 6V11L8 13L4 11Z M4 6L8 8L12 6M8 8V13" fill="#e8f0f8" stroke="#8a8f98" stroke-width="1"/></svg>
<svg style="position:absolute;left:1872px;top:374px;" width="6" height="4" viewBox="0 0 6 4"><path d="M0 0H6L3 3.500Z" fill="#6d7480"/></svg>
<svg style="position:absolute;left:1851.5px;top:389px;" width="16" height="16" viewBox="0 0 16 16"><path d="M3 8L8 2L13 8M5 7V11H11" fill="none" stroke="#5e9a8a" stroke-width="1.600"/><path d="M4 14H12M8 11V15" stroke="#1b6fb5" stroke-width="1.300"/></svg>
<svg style="position:absolute;left:1872px;top:396px;" width="6" height="4" viewBox="0 0 6 4"><path d="M0 0H6L3 3.500Z" fill="#6d7480"/></svg>
<svg style="position:absolute;left:1856.5px;top:411px;" width="16" height="16" viewBox="0 0 16 16"><path d="M2 5V14H12V9" fill="#e8f0f8" stroke="#1b6fb5" stroke-width="1.600"/><path d="M4 3L13 1" stroke="#e03030" stroke-width="1.200"/><path d="M7 11L14 4" stroke="#1b6fb5" stroke-width="2.200"/></svg>
<svg style="position:absolute;left:1856.5px;top:433px;" width="16" height="16" viewBox="0 0 16 16"><path d="M5 5L13 14" stroke="#1b6fb5" stroke-width="3"/><path d="M2 1L6 3L4 6Z" fill="#f0c030"/></svg>
<svg style="position:absolute;left:1851.5px;top:455px;" width="16" height="16" viewBox="0 0 16 16"><path d="M3 4H13L12 15H4Z" fill="#fff" stroke="#e05040" stroke-width="1.300"/><path d="M2 4H14M6 2H10" stroke="#e05040" stroke-width="1.400"/><path d="M6 7V12M8 7V12M10 7V12" stroke="#e88a80" stroke-width="1"/></svg>
<svg style="position:absolute;left:1872px;top:462px;" width="6" height="4" viewBox="0 0 6 4"><path d="M0 0H6L3 3.500Z" fill="#6d7480"/></svg>
<svg style="position:absolute;left:1874px;top:477px;" width="5" height="7" viewBox="0 0 5 7"><path d="M0.500 0.500V6" stroke="#555" stroke-width="0.800"/><path d="M2 0.500L4.500 3.200L2 6Z" fill="#555"/></svg>
<div class="b" style="left:1847px;top:489px;width:35px;height:360px;box-sizing:border-box;background:linear-gradient(90deg,#eceef4,#dde3ee 50%,#eef0f5);border:1px solid #f2f4f8;border-right-color:#b9bcc4;border-radius:5px 5px 3px 3px;box-shadow:0 0 0 0.500px #cdd2db;"></div>
<div class="b" style="left:1847px;top:835px;width:35px;height:14px;background:#cfd4dd;border-radius:0 0 3px 3px;"></div>
<div class="b" style="left:1851.5px;top:494px;width:2px;height:2px;background:#3f4654;"></div><div class="b" style="left:1855.5px;top:494px;width:2px;height:2px;background:#3f4654;"></div><div class="b" style="left:1859.5px;top:494px;width:2px;height:2px;background:#3f4654;"></div><div class="b" style="left:1863.5px;top:494px;width:2px;height:2px;background:#3f4654;"></div><div class="b" style="left:1867.5px;top:494px;width:2px;height:2px;background:#3f4654;"></div><div class="b" style="left:1871.5px;top:494px;width:2px;height:2px;background:#3f4654;"></div><div class="b" style="left:1875.5px;top:494px;width:2px;height:2px;background:#3f4654;"></div>
<svg style="position:absolute;left:1856.5px;top:498px;" width="16" height="16" viewBox="0 0 16 16"><path d="M2 2L9 4.500L7 6L13 12L11.500 13.500L5.500 7.500L4.500 9.500Z" fill="#1b6fb5"/></svg>
<svg style="position:absolute;left:1856.5px;top:521px;" width="16" height="16" viewBox="0 0 16 16"><path d="M2 2L9 4.500L7 6L13 12L11.500 13.500L5.500 7.500L4.500 9.500Z" fill="#1b6fb5"/><rect x="11" y="11" width="4" height="4" fill="#f0a040"/></svg>
<div class="b" style="left:1851px;top:544px;width:26px;height:1px;background:#7d8796;"></div>
<svg style="position:absolute;left:1856.5px;top:550px;" width="16" height="16" viewBox="0 0 16 16"><rect x="1" y="1" width="14" height="13" fill="none" stroke="#1b6fb5" stroke-width="1.300" stroke-dasharray="2 1.300"/><path d="M4 4L11 6L9 7.500L13 11.500L11.500 13L7.500 9L6 10.500Z" fill="#1b6fb5"/></svg>
<svg style="position:absolute;left:1856.5px;top:572px;" width="16" height="16" viewBox="0 0 16 16"><rect x="1" y="1" width="14" height="13" fill="none" stroke="#1b6fb5" stroke-width="1.300" stroke-dasharray="2 1.300"/><path d="M12 3L5 5L7 6.500L3 10.500L4.500 12L8.500 8L10 9.500Z" fill="#1b6fb5"/><path d="M9 13H15" stroke="#2e9e2e" stroke-width="2"/></svg>
<div class="b" style="left:1851px;top:594px;width:26px;height:1px;background:#7d8796;"></div>
<svg style="position:absolute;left:1856.5px;top:600px;" width="16" height="16" viewBox="0 0 16 16"><path d="M2 14L9 7" stroke="#1b6fb5" stroke-width="2"/><path d="M6 3Q13 3 13 10" fill="none" stroke="#1b6fb5" stroke-width="1.800"/><path d="M4 4L10 5L5 10Z" fill="#1b6fb5" transform="translate(3,-2)"/><path d="M13 10V16M10 13H16" stroke="#2e9e2e" stroke-width="1.800"/></svg>
<svg style="position:absolute;left:1856.5px;top:622px;" width="16" height="16" viewBox="0 0 16 16"><path d="M2 14L9 7" stroke="#1b6fb5" stroke-width="2"/><path d="M6 3Q13 3 13 10" fill="none" stroke="#1b6fb5" stroke-width="1.800"/><path d="M4 4L10 5L5 10Z" fill="#1b6fb5" transform="translate(3,-2)"/><path d="M10 13H16" stroke="#2e9e2e" stroke-width="1.800"/></svg>
<div class="b" style="left:1851px;top:644px;width:26px;height:1px;background:#7d8796;"></div>
<svg style="position:absolute;left:1851.5px;top:650px;" width="16" height="16" viewBox="0 0 16 16"><path d="M4 2H11L14 8L11 14H4L1 8Z" fill="#cfe0f2" stroke="#1b6fb5" stroke-width="1.400"/><path d="M5 5L11 7L9 8.500L12 11.500L11 12.500L8 9.500L6.500 11Z" fill="#1b6fb5"/><path d="M13 10V16M10 13H16" stroke="#2e9e2e" stroke-width="1.800"/></svg>
<svg style="position:absolute;left:1872px;top:657px;" width="6" height="4" viewBox="0 0 6 4"><path d="M0 0H6L3 3.500Z" fill="#6d7480"/></svg>
<svg style="position:absolute;left:1851.5px;top:672px;" width="16" height="16" viewBox="0 0 16 16"><path d="M4 2H11L14 8L11 14H4L1 8Z" fill="#cfe0f2" stroke="#1b6fb5" stroke-width="1.400"/><path d="M5 5L11 7L9 8.500L12 11.500L11 12.500L8 9.500L6.500 11Z" fill="#1b6fb5"/><path d="M10 14H16" stroke="#2e9e2e" stroke-width="1.800"/></svg>
<svg style="position:absolute;left:1872px;top:679px;" width="6" height="4" viewBox="0 0 6 4"><path d="M0 0H6L3 3.500Z" fill="#6d7480"/></svg>
<div class="b" style="left:1851px;top:694px;width:26px;height:1px;background:#7d8796;"></div>
<svg style="position:absolute;left:1851.5px;top:700px;" width="16" height="16" viewBox="0 0 16 16"><text x="0" y="6" font-size="6" font-weight="bold" font-family="Liberation Sans,sans-serif" fill="#1b6fb5">AAA</text><path d="M4 6L11 8.500L9 10L13 14L11.500 15.500L7.500 11.500L6 13Z" fill="#1b6fb5"/><path d="M4 11V16M1.500 13.500H6.500" stroke="#2e9e2e" stroke-width="1.600"/></svg>
<svg style="position:absolute;left:1872px;top:707px;" width="6" height="4" viewBox="0 0 6 4"><path d="M0 0H6L3 3.500Z" fill="#6d7480"/></svg>
<svg style="position:absolute;left:1851.5px;top:722px;" width="16" height="16" viewBox="0 0 16 16"><text x="0" y="6" font-size="6" font-weight="bold" font-family="Liberation Sans,sans-serif" fill="#1b6fb5">AAA</text><path d="M4 6L11 8.500L9 10L13 14L11.500 15.500L7.500 11.500L6 13Z" fill="#1b6fb5"/><path d="M1.500 14H6.500" stroke="#2e9e2e" stroke-width="1.600"/></svg>
<svg style="position:absolute;left:1872px;top:729px;" width="6" height="4" viewBox="0 0 6 4"><path d="M0 0H6L3 3.500Z" fill="#6d7480"/></svg>
<div class="b" style="left:1851px;top:744px;width:26px;height:1px;background:#7d8796;"></div>
<svg style="position:absolute;left:1851.5px;top:749px;" width="16" height="16" viewBox="0 0 16 16"><path d="M3 1H9L8.500 7H2.500ZM2 7H9L8 10H1ZM1 10V15M8 10V15" fill="#ffe88a" stroke="#f08a1c" stroke-width="1.200"/><path d="M6 6L13 8.500L11 10L14 13L12.500 14.500L9.500 11.500L8 13Z" fill="#1b6fb5"/><path d="M13.500 11V16M11 13.500H16" stroke="#2e9e2e" stroke-width="1.600"/></svg>
<svg style="position:absolute;left:1872px;top:756px;" width="6" height="4" viewBox="0 0 6 4"><path d="M0 0H6L3 3.500Z" fill="#6d7480"/></svg>
<svg style="position:absolute;left:1851.5px;top:771px;" width="16" height="16" viewBox="0 0 16 16"><path d="M3 1H9L8.500 7H2.500ZM2 7H9L8 10H1ZM1 10V15M8 10V15" fill="#ffe88a" stroke="#f08a1c" stroke-width="1.200"/><path d="M6 6L13 8.500L11 10L14 13L12.500 14.500L9.500 11.500L8 13Z" fill="#1b6fb5"/><path d="M11 14.500H16" stroke="#2e9e2e" stroke-width="1.600"/></svg>
<svg style="position:absolute;left:1872px;top:778px;" width="6" height="4" viewBox="0 0 6 4"><path d="M0 0H6L3 3.500Z" fill="#6d7480"/></svg>
<div class="b" style="left:1851px;top:793px;width:26px;height:1px;background:#7d8796;"></div>
<svg style="position:absolute;left:1851.5px;top:799px;" width="16" height="16" viewBox="0 0 16 16"><rect x="0" y="1" width="16" height="3.500" fill="#1d3f6e"/><rect x="2" y="1.800" width="2" height="2" fill="#f0d040"/><rect x="6" y="1.800" width="2" height="2" fill="#f0d040"/><rect x="10" y="1.800" width="2" height="2" fill="#f0d040"/><path d="M4 5L11 7.500L9 9L13 13L11.500 14.500L7.500 10.500L6 12Z" fill="#1b6fb5"/><path d="M4 11V16M1.500 13.500H6.500" stroke="#2e9e2e" stroke-width="1.600"/></svg>
<svg style="position:absolute;left:1872px;top:806px;" width="6" height="4" viewBox="0 0 6 4"><path d="M0 0H6L3 3.500Z" fill="#6d7480"/></svg>
<svg style="position:absolute;left:1851.5px;top:821px;" width="16" height="16" viewBox="0 0 16 16"><rect x="0" y="1" width="16" height="3.500" fill="#1d3f6e"/><rect x="2" y="1.800" width="2" height="2" fill="#f0d040"/><rect x="6" y="1.800" width="2" height="2" fill="#f0d040"/><rect x="10" y="1.800" width="2" height="2" fill="#f0d040"/><path d="M4 5L11 7.500L9 9L13 13L11.500 14.500L7.500 10.500L6 12Z" fill="#1b6fb5"/><path d="M8 14.500H14" stroke="#2e9e2e" stroke-width="1.600"/></svg>
<svg style="position:absolute;left:1872px;top:828px;" width="6" height="4" viewBox="0 0 6 4"><path d="M0 0H6L3 3.500Z" fill="#6d7480"/></svg>
<svg style="position:absolute;left:1874px;top:839px;" width="5" height="7" viewBox="0 0 5 7"><path d="M0.500 0.500V6" stroke="#555" stroke-width="0.800"/><path d="M2 0.500L4.500 3.200L2 6Z" fill="#555"/></svg>
<div class="b" style="left:1847px;top:858px;width:35px;height:63px;box-sizing:border-box;background:linear-gradient(90deg,#eceef4,#dde3ee 50%,#eef0f5);border:1px solid #f2f4f8;border-right-color:#b9bcc4;border-radius:5px 5px 3px 3px;box-shadow:0 0 0 0.500px #cdd2db;"></div>
<div class="b" style="left:1847px;top:907px;width:35px;height:14px;background:#cfd4dd;border-radius:0 0 3px 3px;"></div>
<div class="b" style="left:1851.5px;top:863px;width:2px;height:2px;background:#3f4654;"></div><div class="b" style="left:1855.5px;top:863px;width:2px;height:2px;background:#3f4654;"></div><div class="b" style="left:1859.5px;top:863px;width:2px;height:2px;background:#3f4654;"></div><div class="b" style="left:1863.5px;top:863px;width:2px;height:2px;background:#3f4654;"></div><div class="b" style="left:1867.5px;top:863px;width:2px;height:2px;background:#3f4654;"></div><div class="b" style="left:1871.5px;top:863px;width:2px;height:2px;background:#3f4654;"></div><div class="b" style="left:1875.5px;top:863px;width:2px;height:2px;background:#3f4654;"></div>
<svg style="position:absolute;left:1856.5px;top:867px;" width="16" height="16" viewBox="0 0 16 16"><path d="M7 3H11L10.500 8H6.500ZM6 8H11L10 10.500H5ZM5 10.500V14M10 10.500V14" fill="#fbd9a0" stroke="#f0a050" stroke-width="1"/></svg>
<svg style="position:absolute;left:1856.5px;top:891px;" width="16" height="16" viewBox="0 0 16 16"><path d="M2 14Q3 5 12 3" fill="none" stroke="#d07a5a" stroke-width="1.400"/><circle cx="2" cy="14" r="1.200" fill="#d07a5a"/><circle cx="12" cy="3" r="1.200" fill="#d07a5a"/><path d="M10 6L13 6L11 9L14 9L8 15L9.500 10.500L7.500 10.500Z" fill="#f4a040"/></svg>
<svg style="position:absolute;left:1874px;top:911px;" width="5" height="7" viewBox="0 0 5 7"><path d="M0.500 0.500V6" stroke="#555" stroke-width="0.800"/><path d="M2 0.500L4.500 3.200L2 6Z" fill="#555"/></svg>
<div class="b" style="left:1884px;top:179px;width:34px;height:583px;box-sizing:border-box;background:linear-gradient(90deg,#eceef4,#dde3ee 50%,#eef0f5);border:1px solid #f2f4f8;border-right-color:#b9bcc4;border-radius:5px 5px 3px 3px;box-shadow:0 0 0 0.500px #cdd2db;"></div>
<div class="b" style="left:1884px;top:748px;width:34px;height:14px;background:#cfd4dd;border-radius:0 0 3px 3px;"></div>
<div class="b" style="left:1888px;top:184px;width:2px;height:2px;background:#3f4654;"></div><div class="b" style="left:1892px;top:184px;width:2px;height:2px;background:#3f4654;"></div><div class="b" style="left:1896px;top:184px;width:2px;height:2px;background:#3f4654;"></div><div class="b" style="left:1900px;top:184px;width:2px;height:2px;background:#3f4654;"></div><div class="b" style="left:1904px;top:184px;width:2px;height:2px;background:#3f4654;"></div><div class="b" style="left:1908px;top:184px;width:2px;height:2px;background:#3f4654;"></div><div class="b" style="left:1912px;top:184px;width:2px;height:2px;background:#3f4654;"></div>
<svg style="position:absolute;left:1893px;top:190px;" width="16" height="16" viewBox="0 0 16 16"><path d="M8 1V15M1 8H15" stroke="#f07a60" stroke-width="2.400"/><path d="M8 1V15M1 8H15" stroke="#fbc6b8" stroke-width="0.800"/><circle cx="8" cy="8" r="1" fill="#444"/></svg>
<div class="b" style="left:1888px;top:212px;width:25px;height:1px;background:#7d8796;"></div>
<svg style="position:absolute;left:1888px;top:219px;" width="16" height="16" viewBox="0 0 16 16"><path d="M2 1V14H15M2 14L13 3" fill="none" stroke="#f07a60" stroke-width="2.400"/></svg>
<svg style="position:absolute;left:1908px;top:226px;" width="6" height="4" viewBox="0 0 6 4"><path d="M0 0H6L3 3.500Z" fill="#6d7480"/></svg>
<div class="b" style="left:1888px;top:241px;width:25px;height:1px;background:#7d8796;"></div>
<svg style="position:absolute;left:1893px;top:248px;" width="16" height="16" viewBox="0 0 16 16"><path d="M2 13Q5 7 9 6L14 5L13.500 13" fill="none" stroke="#f09a88" stroke-width="2"/><circle cx="2.500" cy="12.500" r="1.300" fill="#345"/><circle cx="9" cy="6" r="1.300" fill="#345"/><circle cx="14" cy="5" r="1.300" fill="#345"/><circle cx="13.500" cy="13" r="1.300" fill="#345"/></svg>
<svg style="position:absolute;left:1893px;top:270px;" width="16" height="16" viewBox="0 0 16 16"><path d="M2 14L14 2" stroke="#f08a70" stroke-width="3"/><path d="M5.500 10.500L10.500 5.500" stroke="#345" stroke-width="1.600"/></svg>
<svg style="position:absolute;left:1893px;top:291px;" width="16" height="16" viewBox="0 0 16 16"><path d="M2 14L14 2" stroke="#f08a70" stroke-width="3"/><path d="M4 12L11 5" stroke="#1b4f95" stroke-width="2.600"/></svg>
<svg style="position:absolute;left:1893px;top:312px;" width="16" height="16" viewBox="0 0 16 16"><rect x="2" y="2" width="12" height="11" fill="none" stroke="#f09a88" stroke-width="2.600"/><rect x="2" y="2" width="12" height="11" fill="none" stroke="#fff" stroke-width="0.600"/><circle cx="2.500" cy="13" r="1.300" fill="#345"/><circle cx="14" cy="2" r="1.300" fill="#345"/></svg>
<svg style="position:absolute;left:1893px;top:334px;" width="16" height="16" viewBox="0 0 16 16"><circle cx="2" cy="2" r="0.800" fill="#6a8ab8"/><circle cx="2" cy="6" r="0.800" fill="#6a8ab8"/><circle cx="2" cy="10" r="0.800" fill="#6a8ab8"/><circle cx="2" cy="14" r="0.800" fill="#6a8ab8"/><circle cx="6" cy="2" r="0.800" fill="#6a8ab8"/><circle cx="6" cy="6" r="0.800" fill="#6a8ab8"/><circle cx="6" cy="10" r="0.800" fill="#6a8ab8"/><circle cx="6" cy="14" r="0.800" fill="#6a8ab8"/><circle cx="10" cy="2" r="0.800" fill="#6a8ab8"/><circle cx="10" cy="6" r="0.800" fill="#6a8ab8"/><circle cx="10" cy="10" r="0.800" fill="#6a8ab8"/><circle cx="10" cy="14" r="0.800" fill="#6a8ab8"/><circle cx="14" cy="2" r="0.800" fill="#6a8ab8"/><circle cx="14" cy="6" r="0.800" fill="#6a8ab8"/><circle cx="14" cy="10" r="0.800" fill="#6a8ab8"/><circle cx="14" cy="14" r="0.800" fill="#6a8ab8"/></svg>
<svg style="position:absolute;left:1893px;top:356px;" width="16" height="16" viewBox="0 0 16 16"><rect x="1.500" y="1.500" width="13" height="13" fill="#fff" stroke="#1b6fb5" stroke-width="1.600"/><path d="M6 1.500V14.500M10.500 1.500V14.500M1.500 6H14.500M1.500 10.500H14.500" stroke="#1b6fb5" stroke-width="1.400"/></svg>
<svg style="position:absolute;left:1893px;top:378px;" width="16" height="16" viewBox="0 0 16 16"><path d="M3 2V14M8 1V15M2 8H15" stroke="#345" stroke-width="1.400"/><circle cx="3" cy="3" r="1.500" fill="none" stroke="#1b6fb5" stroke-width="1"/><circle cx="3" cy="13" r="1.500" fill="none" stroke="#1b6fb5" stroke-width="1"/><path d="M10 5H15M10 11H15" stroke="#f08a70" stroke-width="1.400"/></svg>
<div class="b" style="left:1888px;top:400px;width:25px;height:1px;background:#7d8796;"></div>
<svg style="position:absolute;left:1893px;top:406px;" width="16" height="16" viewBox="0 0 16 16"><path d="M2 1V14H15M2 14L13 3" fill="none" stroke="#f07a60" stroke-width="2"/><circle cx="5" cy="8" r="1" fill="#345"/><circle cx="9" cy="11" r="1" fill="#345"/><circle cx="11" cy="5" r="1" fill="#345"/></svg>
<div class="b" style="left:1888px;top:428px;width:25px;height:1px;background:#7d8796;"></div>
<svg style="position:absolute;left:1888px;top:433px;" width="16" height="16" viewBox="0 0 16 16"><path d="M2 3H14" stroke="#f08a70" stroke-width="2"/><path d="M8 3V12" stroke="#f08a70" stroke-width="2.400"/><path d="M1 13H15" stroke="#1b6fb5" stroke-width="2.200"/></svg>
<svg style="position:absolute;left:1908px;top:440px;" width="6" height="4" viewBox="0 0 6 4"><path d="M0 0H6L3 3.500Z" fill="#6d7480"/></svg>
<svg style="position:absolute;left:1893px;top:455px;" width="16" height="16" viewBox="0 0 16 16"><path d="M8 1V6M8 10V15" stroke="#1b6fb5" stroke-width="1.300" stroke-dasharray="2 1"/><path d="M5 4H11M6 8H12" stroke="#2e9e2e" stroke-width="1.200"/></svg>
<svg style="position:absolute;left:1893px;top:478px;" width="16" height="16" viewBox="0 0 16 16"><path d="M1 8H15" stroke="#1b6fb5" stroke-width="1.800"/><path d="M8 1L10.500 4.500H5.500ZM8 15L10.500 11.500H5.500Z" fill="#1b6fb5"/><path d="M5 10.500H11M6 12.500H10" stroke="#f08a70" stroke-width="1"/></svg>
<div class="b" style="left:1888px;top:499px;width:25px;height:1px;background:#7d8796;"></div>
<svg style="position:absolute;left:1888px;top:505px;" width="16" height="16" viewBox="0 0 16 16"><path d="M1 8H15" stroke="#1b6fb5" stroke-width="2.600"/><rect x="0.500" y="5" width="3" height="6" fill="#f08a70"/><rect x="12.500" y="5" width="3" height="6" fill="#f08a70"/><rect x="6.500" y="5.500" width="3" height="5" fill="#fff" stroke="#f08a70" stroke-width="0.800"/></svg>
<svg style="position:absolute;left:1908px;top:512px;" width="6" height="4" viewBox="0 0 6 4"><path d="M0 0H6L3 3.500Z" fill="#6d7480"/></svg>
<div class="b" style="left:1888px;top:527px;width:25px;height:1px;background:#7d8796;"></div>
<svg style="position:absolute;left:1888px;top:533px;" width="16" height="16" viewBox="0 0 16 16"><path d="M2 4Q12 4 14 14" fill="none" stroke="#f07a60" stroke-width="3"/><path d="M2 4Q12 4 14 14" fill="none" stroke="#a02818" stroke-width="0.800"/></svg>
<svg style="position:absolute;left:1908px;top:540px;" width="6" height="4" viewBox="0 0 6 4"><path d="M0 0H6L3 3.500Z" fill="#6d7480"/></svg>
<svg style="position:absolute;left:1888px;top:561px;" width="16" height="16" viewBox="0 0 16 16"><circle cx="8" cy="8" r="6.500" fill="none" stroke="#f07a60" stroke-width="2"/><circle cx="8" cy="8" r="1" fill="#f07a60"/><path d="M8 8L12 4" stroke="#f0a090" stroke-width="0.800"/></svg>
<svg style="position:absolute;left:1908px;top:568px;" width="6" height="4" viewBox="0 0 6 4"><path d="M0 0H6L3 3.500Z" fill="#6d7480"/></svg>
<svg style="position:absolute;left:1888px;top:589px;" width="16" height="16" viewBox="0 0 16 16"><path d="M3 13L11 3" stroke="#f07a60" stroke-width="5" stroke-linecap="round"/><circle cx="4" cy="12" r="2.600" fill="#fff" stroke="#1b6fb5" stroke-width="1.600"/><circle cx="11.500" cy="4" r="3" fill="#fff" stroke="#1b6fb5" stroke-width="1.600"/></svg>
<svg style="position:absolute;left:1908px;top:596px;" width="6" height="4" viewBox="0 0 6 4"><path d="M0 0H6L3 3.500Z" fill="#6d7480"/></svg>
<div class="b" style="left:1888px;top:611px;width:25px;height:1px;background:#7d8796;"></div>
<svg style="position:absolute;left:1893px;top:617px;" width="16" height="16" viewBox="0 0 16 16"><path d="M1 13H15" stroke="#1b6fb5" stroke-width="2.400"/><path d="M2 11L13 3" stroke="#f07a60" stroke-width="2.400"/><path d="M10 9Q11 7 10 5" fill="none" stroke="#888" stroke-width="0.800" stroke-dasharray="1 1"/></svg>
<svg style="position:absolute;left:1893px;top:639px;" width="16" height="16" viewBox="0 0 16 16"><path d="M1 13H15" stroke="#1b6fb5" stroke-width="2.400"/><path d="M2 11L13 3" stroke="#f07a60" stroke-width="2.400"/><text x="8" y="11" font-size="5.500" font-family="Liberation Sans,sans-serif" fill="#1b6fb5">%</text></svg>
<svg style="position:absolute;left:1893px;top:661px;" width="16" height="16" viewBox="0 0 16 16"><path d="M3 1V14H15" fill="none" stroke="#f07a60" stroke-width="2.200"/><path d="M1 14H15" stroke="#1b6fb5" stroke-width="1.600"/><text x="5" y="8" font-size="6.500" font-weight="bold" font-family="Liberation Sans,sans-serif" fill="#1b6fb5">90°</text></svg>
<svg style="position:absolute;left:1888px;top:684px;" width="16" height="16" viewBox="0 0 16 16"><path d="M2 2L14 14M2 14L14 2" stroke="#f07a60" stroke-width="2"/><path d="M3 5L9 14" stroke="#1b6fb5" stroke-width="1.400"/><circle cx="2" cy="2" r="1.200" fill="#1b6fb5"/><circle cx="14" cy="2" r="1.200" fill="#1b6fb5"/><circle cx="14" cy="14" r="1.200" fill="#1b6fb5"/><circle cx="8" cy="8" r="1.200" fill="#1b6fb5"/></svg>
<svg style="position:absolute;left:1908px;top:691px;" width="6" height="4" viewBox="0 0 6 4"><path d="M0 0H6L3 3.500Z" fill="#6d7480"/></svg>
<div class="b" style="left:1888px;top:706px;width:25px;height:1px;background:#7d8796;"></div>
<svg style="position:absolute;left:1893px;top:711px;" width="16" height="16" viewBox="0 0 16 16"><path d="M2 3Q11 4 13 12" fill="none" stroke="#1b6fb5" stroke-width="1.600"/><rect x="11" y="11" width="4" height="4" fill="#fff" stroke="#e03030" stroke-width="1"/><path d="M4 11H7M4 13H7" stroke="#e03030" stroke-width="1"/></svg>
<svg style="position:absolute;left:1893px;top:734px;" width="16" height="16" viewBox="0 0 16 16"><path d="M1 5H15" stroke="#f07a60" stroke-width="2"/><path d="M13 5V10" stroke="#f07a60" stroke-width="1"/><rect x="11" y="10" width="4" height="4" fill="#fff" stroke="#e03030" stroke-width="1"/></svg>
<svg style="position:absolute;left:1910px;top:752px;" width="5" height="7" viewBox="0 0 5 7"><path d="M0.500 0.500V6" stroke="#555" stroke-width="0.800"/><path d="M2 0.500L4.500 3.200L2 6Z" fill="#555"/></svg>
<div class="b" style="left:1884px;top:770px;width:34px;height:217px;box-sizing:border-box;background:linear-gradient(90deg,#eceef4,#dde3ee 50%,#eef0f5);border:1px solid #f2f4f8;border-right-color:#b9bcc4;border-radius:5px 5px 3px 3px;box-shadow:0 0 0 0.500px #cdd2db;"></div>
<div class="b" style="left:1884px;top:973px;width:34px;height:14px;background:#cfd4dd;border-radius:0 0 3px 3px;"></div>
<div class="b" style="left:1888px;top:775px;width:2px;height:2px;background:#3f4654;"></div><div class="b" style="left:1892px;top:775px;width:2px;height:2px;background:#3f4654;"></div><div class="b" style="left:1896px;top:775px;width:2px;height:2px;background:#3f4654;"></div><div class="b" style="left:1900px;top:775px;width:2px;height:2px;background:#3f4654;"></div><div class="b" style="left:1904px;top:775px;width:2px;height:2px;background:#3f4654;"></div><div class="b" style="left:1908px;top:775px;width:2px;height:2px;background:#3f4654;"></div><div class="b" style="left:1912px;top:775px;width:2px;height:2px;background:#3f4654;"></div>
<svg style="position:absolute;left:1893px;top:779px;" width="16" height="16" viewBox="0 0 16 16"><path d="M1 9L8 3L15 9" fill="none" stroke="#1b6fb5" stroke-width="2.400"/><path d="M4 9V14M12 9V14" stroke="#9ab" stroke-width="1"/></svg>
<svg style="position:absolute;left:1893px;top:801px;" width="16" height="16" viewBox="0 0 16 16"><path d="M1 8L8 2L15 8" fill="none" stroke="#1b6fb5" stroke-width="2.200"/><circle cx="10.500" cy="11.500" r="2.600" fill="none" stroke="#3cae3c" stroke-width="1.800"/><path d="M4 8V14" stroke="#9ab" stroke-width="1"/></svg>
<svg style="position:absolute;left:1893px;top:823px;" width="16" height="16" viewBox="0 0 16 16"><path d="M2 4Q9 1 13 5" fill="none" stroke="#1b6fb5" stroke-width="1.800"/><path d="M4 7L12 12" stroke="#e8604a" stroke-width="2.400"/><path d="M14 14l-4.500-1 2.500-3z" fill="#e8604a"/><path d="M2 13H13L15 11" fill="none" stroke="#7fb2e0" stroke-width="1.200"/></svg>
<svg style="position:absolute;left:1893px;top:845px;" width="16" height="16" viewBox="0 0 16 16"><path d="M1 8L8 2L15 8" fill="none" stroke="#1b6fb5" stroke-width="2.400"/><rect x="2" y="10" width="2.500" height="4" fill="#f0a060"/><rect x="11.500" y="10" width="2.500" height="4" fill="#f0a060"/></svg>
<svg style="position:absolute;left:1893px;top:867px;" width="16" height="16" viewBox="0 0 16 16"><path d="M1 5L9 2L15 5V13L7 15L1 12Z" fill="#bfe3e8" stroke="#1b8aa0" stroke-width="1.400"/><path d="M4 7L9 5.500L13 7.500V12L8 13L4 11.500Z" fill="#fff" stroke="#1b8aa0" stroke-width="1"/><path d="M8 8V13M10.500 8V12.500" stroke="#1b8aa0" stroke-width="0.800"/></svg>
<svg style="position:absolute;left:1893px;top:889px;" width="16" height="16" viewBox="0 0 16 16"><rect x="1" y="0.5" width="1" height="1" fill="#999"/><rect x="8" y="5.5" width="1" height="1" fill="#999"/><rect x="1" y="10.5" width="1" height="1" fill="#999"/><rect x="8" y="0.5" width="1" height="1" fill="#999"/><rect x="1" y="5.5" width="1" height="1" fill="#999"/><rect x="8" y="10.5" width="1" height="1" fill="#999"/><rect x="1" y="0.5" width="1" height="1" fill="#999"/><rect x="8" y="5.5" width="1" height="1" fill="#999"/><rect x="1" y="10.5" width="1" height="1" fill="#999"/><rect x="8" y="0.5" width="1" height="1" fill="#999"/><rect x="1" y="5.5" width="1" height="1" fill="#999"/><rect x="8" y="10.5" width="1" height="1" fill="#999"/><rect x="1" y="0.5" width="1" height="1" fill="#999"/><rect x="8" y="5.5" width="1" height="1" fill="#999"/><rect x="1" y="10.5" width="1" height="1" fill="#999"/><rect x="8" y="0.5" width="1" height="1" fill="#999"/><rect x="1" y="5.5" width="1" height="1" fill="#999"/><rect x="8" y="10.5" width="1" height="1" fill="#999"/><rect x="1" y="0.5" width="1" height="1" fill="#999"/><rect x="8" y="5.5" width="1" height="1" fill="#999"/><rect x="1" y="10.5" width="1" height="1" fill="#999"/><rect x="8" y="0.5" width="1" height="1" fill="#999"/><rect x="1" y="5.5" width="1" height="1" fill="#999"/><rect x="8" y="10.5" width="1" height="1" fill="#999"/><rect x="1" y="0.5" width="1" height="1" fill="#999"/><rect x="8" y="5.5" width="1" height="1" fill="#999"/><rect x="1" y="10.5" width="1" height="1" fill="#999"/><rect x="8" y="0.5" width="1" height="1" fill="#999"/><rect x="4" y="3" width="8" height="10" fill="#fff" opacity=".700"/></svg>
<svg style="position:absolute;left:1893px;top:911px;" width="16" height="16" viewBox="0 0 16 16"><path d="M1 9L7 4L15 8L9 13Z" fill="#c8452e" stroke="#8a2a18" stroke-width="0.800"/><path d="M3 8.500L9 11.500M5 7L11 10M7 5.500L13 8.500" stroke="#e88a70" stroke-width="0.800"/></svg>
<svg style="position:absolute;left:1893px;top:933px;" width="16" height="16" viewBox="0 0 16 16"><path d="M1 12L6 5L15 4L14 9L10 13Z" fill="#dfe7f0" stroke="#7a8aa0" stroke-width="1"/><path d="M3 11H10M4 9H11M5 7H12" stroke="#34507a" stroke-width="1.200"/><path d="M1 14H15" stroke="#1b4f95" stroke-width="1.600"/></svg>
<svg style="position:absolute;left:1893px;top:956px;" width="16" height="16" viewBox="0 0 16 16"><path d="M3 6L10 2L14 2L7 6ZM3 6H7V8H6V12H7V14H3V12H4V8H3ZM7 6L14 2V4L7 8ZM6 8L10 6V10L6 12ZM7 12L14 8V10L7 14Z" fill="#cfe3f5" stroke="#4a86c0" stroke-width="0.900" stroke-linejoin="round"/><circle cx="13" cy="13" r="1.300" fill="#f4a070"/></svg>
<svg style="position:absolute;left:1910px;top:977px;" width="5" height="7" viewBox="0 0 5 7"><path d="M0.500 0.500V6" stroke="#555" stroke-width="0.800"/><path d="M2 0.500L4.500 3.200L2 6Z" fill="#555"/></svg>
<!-- s_dialog.dialog -->
<div class="b" style="left:223px;top:119px;width:1454px;height:823px;background:#f0f0f0;box-shadow:0 0 0 1px #8a8a8a, 0 5px 20px 3px rgba(0,0,0,.24), 0 0 6px 1px rgba(0,0,0,.10);"></div>
<div class="b" style="left:223px;top:119px;width:1454px;height:30px;background:#fff;"></div>
<svg style="position:absolute;left:231px;top:126px;" width="17" height="16" viewBox="0 0 17 16"><path d="M0 15L4 3H9V6H6L5.5 8H9V10H4.800L3 15Z" fill="#8c8f93"/><path d="M10 0H16V15H10V11H7V8.500H10V6.500H7V4H10Z" fill="#d81e3c"/><path d="M0 9.200H16" stroke="#fff" stroke-width="0.8"/><path d="M12.500 0V15" stroke="#fff" stroke-width="0.6" opacity=".0"/></svg>
<span class="t" style="left:252.0px;top:127.0px;font-size:12px;color:#000;letter-spacing:-0.033px;">Sélectionner un fichier catalogue</span>
<svg style="position:absolute;left:1656px;top:127px;" width="12" height="12" viewBox="0 0 12 12"><path d="M0.500 0.500L11 11M11 0.500L0.500 11" stroke="#111" stroke-width="1.1"/></svg>
<!-- s_dialog.tree -->
<svg width="0" height="0" style="position:absolute"><defs><linearGradient id="fg" x1="0" y1="0" x2="0" y2="1"><stop offset="0" stop-color="#fdf0a8"/><stop offset="1" stop-color="#efcf58"/></linearGradient></defs></svg>
<div class="b" style="left:234px;top:160px;width:250px;height:771px;box-sizing:border-box;background:#fff;border:1px solid #828790;border-right-color:#e3e3e3;border-bottom-color:#e3e3e3;border-top-color:#9b9b9b;"></div>
<svg style="position:absolute;left:235px;top:161px;overflow:hidden" width="232" height="750" viewBox="0 0 232 750"><path d="M7.5 0V750" stroke="#8c8c8c" stroke-width="1" stroke-dasharray="1 1" shape-rendering="crispEdges"/><path d="M26.5 0V750" stroke="#8c8c8c" stroke-width="1" stroke-dasharray="1 1" shape-rendering="crispEdges"/><path d="M45.5 0V750" stroke="#8c8c8c" stroke-width="1" stroke-dasharray="1 1" shape-rendering="crispEdges"/><path d="M64.5 0V28" stroke="#8c8c8c" stroke-width="1" stroke-dasharray="1 1" shape-rendering="crispEdges"/><path d="M64.5 53V750" stroke="#8c8c8c" stroke-width="1" stroke-dasharray="1 1" shape-rendering="crispEdges"/><path d="M66 10.5H74" stroke="#8c8c8c" stroke-width="1" stroke-dasharray="1 1" shape-rendering="crispEdges"/><rect x="60.5" y="6.5" width="8" height="8" fill="#fff" stroke="#848484" stroke-width="1" shape-rendering="crispEdges"/><path d="M62 10.5H67" stroke="#000" stroke-width="1" shape-rendering="crispEdges"/><path d="M64.5 8V13" stroke="#000" stroke-width="1" shape-rendering="crispEdges"/><g transform="translate(75,2.5)"><path d="M0.700 3.200Q0.700 1.200 2.600 1.200H6.200Q7.400 1.200 8.200 2.400L8.800 3.200H13.600Q15.300 3.200 15.300 5V11.600Q15.300 13.300 13.600 13.300H2.400Q0.700 13.300 0.700 11.600Z" fill="#e9c955" stroke="#7d6a1c" stroke-width="1"/><path d="M1.600 6.200Q1.600 4.900 2.900 4.900H13.200Q14.400 4.900 14.400 6.200V11.300Q14.400 12.400 13.300 12.400H2.700Q1.600 12.400 1.600 11.300Z" fill="url(#fg)" stroke="#fff8cc" stroke-width="0.700"/><path d="M1.500 13.300H13.800Q15.300 13.300 15.300 11.800V5" fill="none" stroke="#5f5010" stroke-width="1.300"/></g><path d="M66 28.5H74" stroke="#8c8c8c" stroke-width="1" stroke-dasharray="1 1" shape-rendering="crispEdges"/><rect x="60.5" y="24.5" width="8" height="8" fill="#fff" stroke="#848484" stroke-width="1" shape-rendering="crispEdges"/><path d="M62 28.5H67" stroke="#000" stroke-width="1" shape-rendering="crispEdges"/><path d="M64.5 26V31" stroke="#000" stroke-width="1" shape-rendering="crispEdges"/><g transform="translate(75,20.5)"><path d="M0.700 3.200Q0.700 1.200 2.600 1.200H6.200Q7.400 1.200 8.200 2.400L8.800 3.200H13.600Q15.300 3.200 15.300 5V11.600Q15.300 13.300 13.600 13.300H2.400Q0.700 13.300 0.700 11.600Z" fill="#e9c955" stroke="#7d6a1c" stroke-width="1"/><path d="M1.600 6.200Q1.600 4.900 2.900 4.900H13.200Q14.400 4.900 14.400 6.200V11.300Q14.400 12.400 13.300 12.400H2.700Q1.600 12.400 1.600 11.300Z" fill="url(#fg)" stroke="#fff8cc" stroke-width="0.700"/><path d="M1.500 13.300H13.800Q15.300 13.300 15.300 11.800V5" fill="none" stroke="#5f5010" stroke-width="1.300"/></g><path d="M47 46.5H55" stroke="#8c8c8c" stroke-width="1" stroke-dasharray="1 1" shape-rendering="crispEdges"/><rect x="41.5" y="42.5" width="8" height="8" fill="#fff" stroke="#848484" stroke-width="1" shape-rendering="crispEdges"/><path d="M43 46.5H48" stroke="#000" stroke-width="1" shape-rendering="crispEdges"/><g transform="translate(56,38.5)"><path d="M0.700 3.200Q0.700 1.200 2.600 1.200H6.200Q7.400 1.200 8.200 2.400L8.800 3.200H13.600Q15.300 3.200 15.300 5V11.600Q15.300 13.300 13.600 13.300H2.400Q0.700 13.300 0.700 11.600Z" fill="#e9c955" stroke="#7d6a1c" stroke-width="1"/><path d="M1.600 6.200Q1.600 4.900 2.900 4.900H13.200Q14.400 4.900 14.400 6.200V11.300Q14.400 12.400 13.300 12.400H2.700Q1.600 12.400 1.600 11.300Z" fill="url(#fg)" stroke="#fff8cc" stroke-width="0.700"/><path d="M1.500 13.300H13.800Q15.300 13.300 15.300 11.800V5" fill="none" stroke="#5f5010" stroke-width="1.300"/></g><path d="M66 64.5H74" stroke="#8c8c8c" stroke-width="1" stroke-dasharray="1 1" shape-rendering="crispEdges"/><g transform="translate(75,56.5)"><path d="M0.700 3.200Q0.700 1.200 2.600 1.200H6.200Q7.400 1.200 8.200 2.400L8.800 3.200H13.600Q15.300 3.200 15.300 5V11.600Q15.300 13.300 13.600 13.300H2.400Q0.700 13.300 0.700 11.600Z" fill="#e9c955" stroke="#7d6a1c" stroke-width="1"/><path d="M1.600 6.200Q1.600 4.900 2.900 4.900H13.200Q14.400 4.900 14.400 6.200V11.300Q14.400 12.400 13.300 12.400H2.700Q1.600 12.400 1.600 11.300Z" fill="url(#fg)" stroke="#fff8cc" stroke-width="0.700"/><path d="M1.500 13.300H13.800Q15.300 13.300 15.300 11.800V5" fill="none" stroke="#5f5010" stroke-width="1.300"/></g><path d="M66 82.5H74" stroke="#8c8c8c" stroke-width="1" stroke-dasharray="1 1" shape-rendering="crispEdges"/><g transform="translate(75,74.5)"><path d="M0.700 3.200Q0.700 1.200 2.600 1.200H6.200Q7.400 1.200 8.200 2.400L8.800 3.200H13.600Q15.300 3.200 15.300 5V11.600Q15.300 13.300 13.600 13.300H2.400Q0.700 13.300 0.700 11.600Z" fill="#e9c955" stroke="#7d6a1c" stroke-width="1"/><path d="M1.600 6.200Q1.600 4.900 2.900 4.900H13.200Q14.400 4.900 14.400 6.200V11.300Q14.400 12.400 13.300 12.400H2.700Q1.600 12.400 1.600 11.300Z" fill="url(#fg)" stroke="#fff8cc" stroke-width="0.700"/><path d="M1.500 13.300H13.800Q15.300 13.300 15.300 11.800V5" fill="none" stroke="#5f5010" stroke-width="1.300"/></g><path d="M66 100.5H74" stroke="#8c8c8c" stroke-width="1" stroke-dasharray="1 1" shape-rendering="crispEdges"/><g transform="translate(75,92.5)"><path d="M0.700 3.200Q0.700 1.200 2.600 1.200H6.200Q7.400 1.200 8.200 2.400L8.800 3.200H13.600Q15.300 3.200 15.300 5V11.600Q15.300 13.300 13.600 13.300H2.400Q0.700 13.300 0.700 11.600Z" fill="#e9c955" stroke="#7d6a1c" stroke-width="1"/><path d="M1.600 6.200Q1.600 4.900 2.900 4.900H13.200Q14.400 4.900 14.400 6.200V11.300Q14.400 12.400 13.300 12.400H2.700Q1.600 12.400 1.600 11.300Z" fill="url(#fg)" stroke="#fff8cc" stroke-width="0.700"/><path d="M1.500 13.300H13.800Q15.300 13.300 15.300 11.800V5" fill="none" stroke="#5f5010" stroke-width="1.300"/></g><path d="M66 118.5H74" stroke="#8c8c8c" stroke-width="1" stroke-dasharray="1 1" shape-rendering="crispEdges"/><rect x="60.5" y="114.5" width="8" height="8" fill="#fff" stroke="#848484" stroke-width="1" shape-rendering="crispEdges"/><path d="M62 118.5H67" stroke="#000" stroke-width="1" shape-rendering="crispEdges"/><path d="M64.5 116V121" stroke="#000" stroke-width="1" shape-rendering="crispEdges"/><g transform="translate(75,110.5)"><path d="M0.700 3.200Q0.700 1.200 2.600 1.200H6.200Q7.400 1.200 8.200 2.400L8.800 3.200H13.600Q15.300 3.200 15.300 5V11.600Q15.300 13.300 13.600 13.300H2.400Q0.700 13.300 0.700 11.600Z" fill="#e9c955" stroke="#7d6a1c" stroke-width="1"/><path d="M1.600 6.200Q1.600 4.900 2.900 4.900H13.200Q14.400 4.900 14.400 6.200V11.300Q14.400 12.400 13.300 12.400H2.700Q1.600 12.400 1.600 11.300Z" fill="url(#fg)" stroke="#fff8cc" stroke-width="0.700"/><path d="M1.500 13.300H13.800Q15.300 13.300 15.300 11.800V5" fill="none" stroke="#5f5010" stroke-width="1.300"/></g><path d="M66 136.5H74" stroke="#8c8c8c" stroke-width="1" stroke-dasharray="1 1" shape-rendering="crispEdges"/><g transform="translate(75,128.5)"><path d="M0.700 3.200Q0.700 1.200 2.600 1.200H6.200Q7.400 1.200 8.200 2.400L8.800 3.200H13.600Q15.300 3.200 15.300 5V11.600Q15.300 13.300 13.600 13.300H2.400Q0.700 13.300 0.700 11.600Z" fill="#e9c955" stroke="#7d6a1c" stroke-width="1"/><path d="M1.600 6.200Q1.600 4.900 2.900 4.900H13.200Q14.400 4.900 14.400 6.200V11.300Q14.400 12.400 13.300 12.400H2.700Q1.600 12.400 1.600 11.300Z" fill="url(#fg)" stroke="#fff8cc" stroke-width="0.700"/><path d="M1.500 13.300H13.800Q15.300 13.300 15.300 11.800V5" fill="none" stroke="#5f5010" stroke-width="1.300"/></g><path d="M66 154.5H74" stroke="#8c8c8c" stroke-width="1" stroke-dasharray="1 1" shape-rendering="crispEdges"/><g transform="translate(75,146.5)"><path d="M0.700 3.200Q0.700 1.200 2.600 1.200H6.200Q7.400 1.200 8.200 2.400L8.800 3.200H13.600Q15.300 3.200 15.300 5V11.600Q15.300 13.300 13.600 13.300H2.400Q0.700 13.300 0.700 11.600Z" fill="#e9c955" stroke="#7d6a1c" stroke-width="1"/><path d="M1.600 6.200Q1.600 4.900 2.900 4.900H13.200Q14.400 4.900 14.400 6.200V11.300Q14.400 12.400 13.300 12.400H2.700Q1.600 12.400 1.600 11.300Z" fill="url(#fg)" stroke="#fff8cc" stroke-width="0.700"/><path d="M1.500 13.300H13.800Q15.300 13.300 15.300 11.800V5" fill="none" stroke="#5f5010" stroke-width="1.300"/></g><path d="M66 172.5H74" stroke="#8c8c8c" stroke-width="1" stroke-dasharray="1 1" shape-rendering="crispEdges"/><g transform="translate(75,164.5)"><path d="M0.700 3.200Q0.700 1.200 2.600 1.200H6.200Q7.400 1.200 8.200 2.400L8.800 3.200H13.600Q15.300 3.200 15.300 5V11.600Q15.300 13.300 13.600 13.300H2.400Q0.700 13.300 0.700 11.600Z" fill="#e9c955" stroke="#7d6a1c" stroke-width="1"/><path d="M1.600 6.200Q1.600 4.900 2.900 4.900H13.200Q14.400 4.900 14.400 6.200V11.300Q14.400 12.400 13.300 12.400H2.700Q1.600 12.400 1.600 11.300Z" fill="url(#fg)" stroke="#fff8cc" stroke-width="0.700"/><path d="M1.500 13.300H13.800Q15.300 13.300 15.300 11.800V5" fill="none" stroke="#5f5010" stroke-width="1.300"/></g><path d="M66 190.5H74" stroke="#8c8c8c" stroke-width="1" stroke-dasharray="1 1" shape-rendering="crispEdges"/><g transform="translate(75,182.5)"><path d="M0.700 3.200Q0.700 1.200 2.600 1.200H6.200Q7.400 1.200 8.200 2.400L8.800 3.200H13.600Q15.300 3.200 15.300 5V11.600Q15.300 13.300 13.600 13.300H2.400Q0.700 13.300 0.700 11.600Z" fill="#e9c955" stroke="#7d6a1c" stroke-width="1"/><path d="M1.600 6.200Q1.600 4.900 2.900 4.900H13.200Q14.400 4.900 14.400 6.200V11.300Q14.400 12.400 13.300 12.400H2.700Q1.600 12.400 1.600 11.300Z" fill="url(#fg)" stroke="#fff8cc" stroke-width="0.700"/><path d="M1.500 13.300H13.800Q15.300 13.300 15.300 11.800V5" fill="none" stroke="#5f5010" stroke-width="1.300"/></g><path d="M66 208.5H74" stroke="#8c8c8c" stroke-width="1" stroke-dasharray="1 1" shape-rendering="crispEdges"/><g transform="translate(75,200.5)"><path d="M0.700 3.200Q0.700 1.200 2.600 1.200H6.200Q7.400 1.200 8.200 2.400L8.800 3.200H13.600Q15.300 3.200 15.300 5V11.600Q15.300 13.300 13.600 13.300H2.400Q0.700 13.300 0.700 11.600Z" fill="#e9c955" stroke="#7d6a1c" stroke-width="1"/><path d="M1.600 6.200Q1.600 4.900 2.900 4.900H13.200Q14.400 4.900 14.400 6.200V11.300Q14.400 12.400 13.300 12.400H2.700Q1.600 12.400 1.600 11.300Z" fill="url(#fg)" stroke="#fff8cc" stroke-width="0.700"/><path d="M1.500 13.300H13.800Q15.300 13.300 15.300 11.800V5" fill="none" stroke="#5f5010" stroke-width="1.300"/></g><path d="M66 226.5H74" stroke="#8c8c8c" stroke-width="1" stroke-dasharray="1 1" shape-rendering="crispEdges"/><g transform="translate(75,218.5)"><path d="M0.700 3.200Q0.700 1.200 2.600 1.200H6.200Q7.400 1.200 8.200 2.400L8.800 3.200H13.600Q15.300 3.200 15.300 5V11.600Q15.300 13.300 13.600 13.300H2.400Q0.700 13.300 0.700 11.600Z" fill="#e9c955" stroke="#7d6a1c" stroke-width="1"/><path d="M1.600 6.200Q1.600 4.900 2.900 4.900H13.200Q14.400 4.900 14.400 6.200V11.300Q14.400 12.400 13.300 12.400H2.700Q1.600 12.400 1.600 11.300Z" fill="url(#fg)" stroke="#fff8cc" stroke-width="0.700"/><path d="M1.500 13.300H13.800Q15.300 13.300 15.300 11.800V5" fill="none" stroke="#5f5010" stroke-width="1.300"/></g><path d="M66 244.5H74" stroke="#8c8c8c" stroke-width="1" stroke-dasharray="1 1" shape-rendering="crispEdges"/><rect x="60.5" y="240.5" width="8" height="8" fill="#fff" stroke="#848484" stroke-width="1" shape-rendering="crispEdges"/><path d="M62 244.5H67" stroke="#000" stroke-width="1" shape-rendering="crispEdges"/><g transform="translate(75,236.5)"><path d="M0.700 3.200Q0.700 1.200 2.600 1.200H6.200Q7.400 1.200 8.200 2.400L8.800 3.200H13.600Q15.300 3.200 15.300 5V11.600Q15.300 13.300 13.600 13.300H2.400Q0.700 13.300 0.700 11.600Z" fill="#e9c955" stroke="#7d6a1c" stroke-width="1"/><path d="M1.600 6.200Q1.600 4.900 2.900 4.900H13.200Q14.400 4.900 14.400 6.200V11.300Q14.400 12.400 13.300 12.400H2.700Q1.600 12.400 1.600 11.300Z" fill="url(#fg)" stroke="#fff8cc" stroke-width="0.700"/><path d="M1.500 13.300H13.800Q15.300 13.300 15.300 11.800V5" fill="none" stroke="#5f5010" stroke-width="1.300"/></g><path d="M85 262.5H93" stroke="#8c8c8c" stroke-width="1" stroke-dasharray="1 1" shape-rendering="crispEdges"/><path d="M83.5 253V262" stroke="#8c8c8c" stroke-width="1" stroke-dasharray="1 1" shape-rendering="crispEdges"/><g transform="translate(94,254.5)"><path d="M0.700 3.200Q0.700 1.200 2.600 1.200H6.200Q7.400 1.200 8.200 2.400L8.800 3.200H13.600Q15.300 3.200 15.300 5V11.600Q15.300 13.300 13.600 13.300H2.400Q0.700 13.300 0.700 11.600Z" fill="#e9c955" stroke="#7d6a1c" stroke-width="1"/><path d="M1.600 6.200Q1.600 4.900 2.900 4.900H13.200Q14.400 4.900 14.400 6.200V11.300Q14.400 12.400 13.300 12.400H2.700Q1.600 12.400 1.600 11.300Z" fill="url(#fg)" stroke="#fff8cc" stroke-width="0.700"/><path d="M1.500 13.300H13.800Q15.300 13.300 15.300 11.800V5" fill="none" stroke="#5f5010" stroke-width="1.300"/></g><path d="M66 280.5H74" stroke="#8c8c8c" stroke-width="1" stroke-dasharray="1 1" shape-rendering="crispEdges"/><g transform="translate(75,272.5)"><path d="M0.700 3.200Q0.700 1.200 2.600 1.200H6.200Q7.400 1.200 8.200 2.400L8.800 3.200H13.600Q15.300 3.200 15.300 5V11.600Q15.300 13.300 13.600 13.300H2.400Q0.700 13.300 0.700 11.600Z" fill="#e9c955" stroke="#7d6a1c" stroke-width="1"/><path d="M1.600 6.200Q1.600 4.900 2.900 4.900H13.200Q14.400 4.900 14.400 6.200V11.300Q14.400 12.400 13.300 12.400H2.700Q1.600 12.400 1.600 11.300Z" fill="url(#fg)" stroke="#fff8cc" stroke-width="0.700"/><path d="M1.500 13.300H13.800Q15.300 13.300 15.300 11.800V5" fill="none" stroke="#5f5010" stroke-width="1.300"/></g><path d="M66 298.5H74" stroke="#8c8c8c" stroke-width="1" stroke-dasharray="1 1" shape-rendering="crispEdges"/><g transform="translate(75,290.5)"><path d="M0.700 3.200Q0.700 1.200 2.600 1.200H6.200Q7.400 1.200 8.200 2.400L8.800 3.200H13.600Q15.300 3.200 15.300 5V11.600Q15.300 13.300 13.600 13.300H2.400Q0.700 13.300 0.700 11.600Z" fill="#e9c955" stroke="#7d6a1c" stroke-width="1"/><path d="M1.600 6.200Q1.600 4.900 2.900 4.900H13.200Q14.400 4.900 14.400 6.200V11.300Q14.400 12.400 13.300 12.400H2.700Q1.600 12.400 1.600 11.300Z" fill="url(#fg)" stroke="#fff8cc" stroke-width="0.700"/><path d="M1.500 13.300H13.800Q15.300 13.300 15.300 11.800V5" fill="none" stroke="#5f5010" stroke-width="1.300"/></g><path d="M66 316.5H74" stroke="#8c8c8c" stroke-width="1" stroke-dasharray="1 1" shape-rendering="crispEdges"/><rect x="60.5" y="312.5" width="8" height="8" fill="#fff" stroke="#848484" stroke-width="1" shape-rendering="crispEdges"/><path d="M62 316.5H67" stroke="#000" stroke-width="1" shape-rendering="crispEdges"/><g transform="translate(75,308.5)"><path d="M0.700 3.200Q0.700 1.200 2.600 1.200H6.200Q7.400 1.200 8.200 2.400L8.800 3.200H13.600Q15.300 3.200 15.300 5V11.600Q15.300 13.300 13.600 13.300H2.400Q0.700 13.300 0.700 11.600Z" fill="#e9c955" stroke="#7d6a1c" stroke-width="1"/><path d="M1.600 6.200Q1.600 4.900 2.900 4.900H13.200Q14.400 4.900 14.400 6.200V11.300Q14.400 12.400 13.300 12.400H2.700Q1.600 12.400 1.600 11.300Z" fill="url(#fg)" stroke="#fff8cc" stroke-width="0.700"/><path d="M1.500 13.300H13.800Q15.300 13.300 15.300 11.800V5" fill="none" stroke="#5f5010" stroke-width="1.300"/></g><path d="M85 334.5H93" stroke="#8c8c8c" stroke-width="1" stroke-dasharray="1 1" shape-rendering="crispEdges"/><path d="M83.5 325V343" stroke="#8c8c8c" stroke-width="1" stroke-dasharray="1 1" shape-rendering="crispEdges"/><g transform="translate(94,326.5)"><path d="M0.700 3.200Q0.700 1.200 2.600 1.200H6.200Q7.400 1.200 8.200 2.400L8.800 3.200H13.600Q15.300 3.200 15.300 5V11.600Q15.300 13.300 13.600 13.300H2.400Q0.700 13.300 0.700 11.600Z" fill="#e9c955" stroke="#7d6a1c" stroke-width="1"/><path d="M1.600 6.200Q1.600 4.900 2.900 4.900H13.200Q14.400 4.900 14.400 6.200V11.300Q14.400 12.400 13.300 12.400H2.700Q1.600 12.400 1.600 11.300Z" fill="url(#fg)" stroke="#fff8cc" stroke-width="0.700"/><path d="M1.500 13.300H13.800Q15.300 13.300 15.300 11.800V5" fill="none" stroke="#5f5010" stroke-width="1.300"/></g><path d="M85 352.5H93" stroke="#8c8c8c" stroke-width="1" stroke-dasharray="1 1" shape-rendering="crispEdges"/><path d="M83.5 343V352" stroke="#8c8c8c" stroke-width="1" stroke-dasharray="1 1" shape-rendering="crispEdges"/><g transform="translate(94,344.5)"><path d="M0.700 3.200Q0.700 1.200 2.600 1.200H6.200Q7.400 1.200 8.200 2.400L8.800 3.200H13.600Q15.300 3.200 15.300 5V11.600Q15.300 13.300 13.600 13.300H2.400Q0.700 13.300 0.700 11.600Z" fill="#e9c955" stroke="#7d6a1c" stroke-width="1"/><path d="M1.600 6.200Q1.600 4.900 2.900 4.900H13.200Q14.400 4.900 14.400 6.200V11.300Q14.400 12.400 13.300 12.400H2.700Q1.600 12.400 1.600 11.300Z" fill="url(#fg)" stroke="#fff8cc" stroke-width="0.700"/><path d="M1.500 13.300H13.800Q15.300 13.300 15.300 11.800V5" fill="none" stroke="#5f5010" stroke-width="1.300"/></g><path d="M66 370.5H74" stroke="#8c8c8c" stroke-width="1" stroke-dasharray="1 1" shape-rendering="crispEdges"/><g transform="translate(75,362.5)"><path d="M0.700 3.200Q0.700 1.200 2.600 1.200H6.200Q7.400 1.200 8.200 2.400L8.800 3.200H13.600Q15.300 3.200 15.300 5V11.600Q15.300 13.300 13.600 13.300H2.400Q0.700 13.300 0.700 11.600Z" fill="#e9c955" stroke="#7d6a1c" stroke-width="1"/><path d="M1.600 6.200Q1.600 4.900 2.900 4.900H13.200Q14.400 4.900 14.400 6.200V11.300Q14.400 12.400 13.300 12.400H2.700Q1.600 12.400 1.600 11.300Z" fill="url(#fg)" stroke="#fff8cc" stroke-width="0.700"/><path d="M1.500 13.300H13.800Q15.300 13.300 15.300 11.800V5" fill="none" stroke="#5f5010" stroke-width="1.300"/></g><path d="M66 388.5H74" stroke="#8c8c8c" stroke-width="1" stroke-dasharray="1 1" shape-rendering="crispEdges"/><g transform="translate(75,380.5)"><path d="M0.700 3.200Q0.700 1.200 2.600 1.200H6.200Q7.400 1.200 8.200 2.400L8.800 3.200H13.600Q15.300 3.200 15.300 5V11.600Q15.300 13.300 13.600 13.300H2.400Q0.700 13.300 0.700 11.600Z" fill="#e9c955" stroke="#7d6a1c" stroke-width="1"/><path d="M1.600 6.200Q1.600 4.900 2.900 4.900H13.200Q14.400 4.900 14.400 6.200V11.300Q14.400 12.400 13.300 12.400H2.700Q1.600 12.400 1.600 11.300Z" fill="url(#fg)" stroke="#fff8cc" stroke-width="0.700"/><path d="M1.500 13.300H13.800Q15.300 13.300 15.300 11.800V5" fill="none" stroke="#5f5010" stroke-width="1.300"/></g><path d="M66 406.5H74" stroke="#8c8c8c" stroke-width="1" stroke-dasharray="1 1" shape-rendering="crispEdges"/><rect x="60.5" y="402.5" width="8" height="8" fill="#fff" stroke="#848484" stroke-width="1" shape-rendering="crispEdges"/><path d="M62 406.5H67" stroke="#000" stroke-width="1" shape-rendering="crispEdges"/><path d="M64.5 404V409" stroke="#000" stroke-width="1" shape-rendering="crispEdges"/><g transform="translate(75,398.5)"><path d="M0.700 3.200Q0.700 1.200 2.600 1.200H6.200Q7.400 1.200 8.200 2.400L8.800 3.200H13.600Q15.300 3.200 15.300 5V11.600Q15.300 13.300 13.600 13.300H2.400Q0.700 13.300 0.700 11.600Z" fill="#e9c955" stroke="#7d6a1c" stroke-width="1"/><path d="M1.600 6.200Q1.600 4.900 2.900 4.900H13.200Q14.400 4.900 14.400 6.200V11.300Q14.400 12.400 13.300 12.400H2.700Q1.600 12.400 1.600 11.300Z" fill="url(#fg)" stroke="#fff8cc" stroke-width="0.700"/><path d="M1.500 13.300H13.800Q15.300 13.300 15.300 11.800V5" fill="none" stroke="#5f5010" stroke-width="1.300"/></g><path d="M66 424.5H74" stroke="#8c8c8c" stroke-width="1" stroke-dasharray="1 1" shape-rendering="crispEdges"/><rect x="60.5" y="420.5" width="8" height="8" fill="#fff" stroke="#848484" stroke-width="1" shape-rendering="crispEdges"/><path d="M62 424.5H67" stroke="#000" stroke-width="1" shape-rendering="crispEdges"/><path d="M64.5 422V427" stroke="#000" stroke-width="1" shape-rendering="crispEdges"/><g transform="translate(75,416.5)"><path d="M0.700 3.200Q0.700 1.200 2.600 1.200H6.200Q7.400 1.200 8.200 2.400L8.800 3.200H13.600Q15.300 3.200 15.300 5V11.600Q15.300 13.300 13.600 13.300H2.400Q0.700 13.300 0.700 11.600Z" fill="#e9c955" stroke="#7d6a1c" stroke-width="1"/><path d="M1.600 6.200Q1.600 4.900 2.900 4.900H13.200Q14.400 4.900 14.400 6.200V11.300Q14.400 12.400 13.300 12.400H2.700Q1.600 12.400 1.600 11.300Z" fill="url(#fg)" stroke="#fff8cc" stroke-width="0.700"/><path d="M1.500 13.300H13.800Q15.300 13.300 15.300 11.800V5" fill="none" stroke="#5f5010" stroke-width="1.300"/></g><path d="M66 442.5H74" stroke="#8c8c8c" stroke-width="1" stroke-dasharray="1 1" shape-rendering="crispEdges"/><rect x="60.5" y="438.5" width="8" height="8" fill="#fff" stroke="#848484" stroke-width="1" shape-rendering="crispEdges"/><path d="M62 442.5H67" stroke="#000" stroke-width="1" shape-rendering="crispEdges"/><path d="M64.5 440V445" stroke="#000" stroke-width="1" shape-rendering="crispEdges"/><g transform="translate(75,434.5)"><path d="M0.700 3.200Q0.700 1.200 2.600 1.200H6.200Q7.400 1.200 8.200 2.400L8.800 3.200H13.600Q15.300 3.200 15.300 5V11.600Q15.300 13.300 13.600 13.300H2.400Q0.700 13.300 0.700 11.600Z" fill="#e9c955" stroke="#7d6a1c" stroke-width="1"/><path d="M1.600 6.200Q1.600 4.900 2.900 4.900H13.200Q14.400 4.900 14.400 6.200V11.300Q14.400 12.400 13.300 12.400H2.700Q1.600 12.400 1.600 11.300Z" fill="url(#fg)" stroke="#fff8cc" stroke-width="0.700"/><path d="M1.500 13.300H13.800Q15.300 13.300 15.300 11.800V5" fill="none" stroke="#5f5010" stroke-width="1.300"/></g><path d="M66 460.5H74" stroke="#8c8c8c" stroke-width="1" stroke-dasharray="1 1" shape-rendering="crispEdges"/><rect x="60.5" y="456.5" width="8" height="8" fill="#fff" stroke="#848484" stroke-width="1" shape-rendering="crispEdges"/><path d="M62 460.5H67" stroke="#000" stroke-width="1" shape-rendering="crispEdges"/><path d="M64.5 458V463" stroke="#000" stroke-width="1" shape-rendering="crispEdges"/><g transform="translate(75,452.5)"><path d="M0.700 3.200Q0.700 1.200 2.600 1.200H6.200Q7.400 1.200 8.200 2.400L8.800 3.200H13.600Q15.300 3.200 15.300 5V11.600Q15.300 13.300 13.600 13.300H2.400Q0.700 13.300 0.700 11.600Z" fill="#e9c955" stroke="#7d6a1c" stroke-width="1"/><path d="M1.600 6.200Q1.600 4.900 2.900 4.900H13.200Q14.400 4.900 14.400 6.200V11.300Q14.400 12.400 13.300 12.400H2.700Q1.600 12.400 1.600 11.300Z" fill="url(#fg)" stroke="#fff8cc" stroke-width="0.700"/><path d="M1.500 13.300H13.800Q15.300 13.300 15.300 11.800V5" fill="none" stroke="#5f5010" stroke-width="1.300"/></g><path d="M66 478.5H74" stroke="#8c8c8c" stroke-width="1" stroke-dasharray="1 1" shape-rendering="crispEdges"/><rect x="60.5" y="474.5" width="8" height="8" fill="#fff" stroke="#848484" stroke-width="1" shape-rendering="crispEdges"/><path d="M62 478.5H67" stroke="#000" stroke-width="1" shape-rendering="crispEdges"/><path d="M64.5 476V481" stroke="#000" stroke-width="1" shape-rendering="crispEdges"/><g transform="translate(75,470.5)"><path d="M0.700 3.200Q0.700 1.200 2.600 1.200H6.200Q7.400 1.200 8.200 2.400L8.800 3.200H13.600Q15.300 3.200 15.300 5V11.600Q15.300 13.300 13.600 13.300H2.400Q0.700 13.300 0.700 11.600Z" fill="#e9c955" stroke="#7d6a1c" stroke-width="1"/><path d="M1.600 6.200Q1.600 4.900 2.900 4.900H13.200Q14.400 4.900 14.400 6.200V11.300Q14.400 12.400 13.300 12.400H2.700Q1.600 12.400 1.600 11.300Z" fill="url(#fg)" stroke="#fff8cc" stroke-width="0.700"/><path d="M1.500 13.300H13.800Q15.300 13.300 15.300 11.800V5" fill="none" stroke="#5f5010" stroke-width="1.300"/></g><path d="M66 496.5H74" stroke="#8c8c8c" stroke-width="1" stroke-dasharray="1 1" shape-rendering="crispEdges"/><rect x="60.5" y="492.5" width="8" height="8" fill="#fff" stroke="#848484" stroke-width="1" shape-rendering="crispEdges"/><path d="M62 496.5H67" stroke="#000" stroke-width="1" shape-rendering="crispEdges"/><path d="M64.5 494V499" stroke="#000" stroke-width="1" shape-rendering="crispEdges"/><g transform="translate(75,488.5)"><path d="M0.700 3.200Q0.700 1.200 2.600 1.200H6.200Q7.400 1.200 8.200 2.400L8.800 3.200H13.600Q15.300 3.200 15.300 5V11.600Q15.300 13.300 13.600 13.300H2.400Q0.700 13.300 0.700 11.600Z" fill="#e9c955" stroke="#7d6a1c" stroke-width="1"/><path d="M1.600 6.200Q1.600 4.900 2.900 4.900H13.200Q14.400 4.900 14.400 6.200V11.300Q14.400 12.400 13.300 12.400H2.700Q1.600 12.400 1.600 11.300Z" fill="url(#fg)" stroke="#fff8cc" stroke-width="0.700"/><path d="M1.500 13.300H13.800Q15.300 13.300 15.300 11.800V5" fill="none" stroke="#5f5010" stroke-width="1.300"/></g><path d="M66 514.5H74" stroke="#8c8c8c" stroke-width="1" stroke-dasharray="1 1" shape-rendering="crispEdges"/><g transform="translate(75,506.5)"><path d="M0.700 3.200Q0.700 1.200 2.600 1.200H6.200Q7.400 1.200 8.200 2.400L8.800 3.200H13.600Q15.300 3.200 15.300 5V11.600Q15.300 13.300 13.600 13.300H2.400Q0.700 13.300 0.700 11.600Z" fill="#e9c955" stroke="#7d6a1c" stroke-width="1"/><path d="M1.600 6.200Q1.600 4.900 2.900 4.900H13.200Q14.400 4.900 14.400 6.200V11.300Q14.400 12.400 13.300 12.400H2.700Q1.600 12.400 1.600 11.300Z" fill="url(#fg)" stroke="#fff8cc" stroke-width="0.700"/><path d="M1.500 13.300H13.800Q15.300 13.300 15.300 11.800V5" fill="none" stroke="#5f5010" stroke-width="1.300"/></g><path d="M66 532.5H74" stroke="#8c8c8c" stroke-width="1" stroke-dasharray="1 1" shape-rendering="crispEdges"/><rect x="60.5" y="528.5" width="8" height="8" fill="#fff" stroke="#848484" stroke-width="1" shape-rendering="crispEdges"/><path d="M62 532.5H67" stroke="#000" stroke-width="1" shape-rendering="crispEdges"/><path d="M64.5 530V535" stroke="#000" stroke-width="1" shape-rendering="crispEdges"/><g transform="translate(75,524.5)"><path d="M0.700 3.200Q0.700 1.200 2.600 1.200H6.200Q7.400 1.200 8.200 2.400L8.800 3.200H13.600Q15.300 3.200 15.300 5V11.600Q15.300 13.300 13.600 13.300H2.400Q0.700 13.300 0.700 11.600Z" fill="#e9c955" stroke="#7d6a1c" stroke-width="1"/><path d="M1.600 6.200Q1.600 4.900 2.900 4.900H13.200Q14.400 4.900 14.400 6.200V11.300Q14.400 12.400 13.300 12.400H2.700Q1.600 12.400 1.600 11.300Z" fill="url(#fg)" stroke="#fff8cc" stroke-width="0.700"/><path d="M1.500 13.300H13.800Q15.300 13.300 15.300 11.800V5" fill="none" stroke="#5f5010" stroke-width="1.300"/></g><path d="M66 550.5H74" stroke="#8c8c8c" stroke-width="1" stroke-dasharray="1 1" shape-rendering="crispEdges"/><g transform="translate(75,542.5)"><path d="M0.700 3.200Q0.700 1.200 2.600 1.200H6.200Q7.400 1.200 8.200 2.400L8.800 3.200H13.600Q15.300 3.200 15.300 5V11.600Q15.300 13.300 13.600 13.300H2.400Q0.700 13.300 0.700 11.600Z" fill="#e9c955" stroke="#7d6a1c" stroke-width="1"/><path d="M1.600 6.200Q1.600 4.900 2.900 4.900H13.200Q14.400 4.900 14.400 6.200V11.300Q14.400 12.400 13.300 12.400H2.700Q1.600 12.400 1.600 11.300Z" fill="url(#fg)" stroke="#fff8cc" stroke-width="0.700"/><path d="M1.500 13.300H13.800Q15.300 13.300 15.300 11.800V5" fill="none" stroke="#5f5010" stroke-width="1.300"/></g><path d="M66 568.5H74" stroke="#8c8c8c" stroke-width="1" stroke-dasharray="1 1" shape-rendering="crispEdges"/><g transform="translate(75,560.5)"><path d="M0.700 3.200Q0.700 1.200 2.600 1.200H6.200Q7.400 1.200 8.200 2.400L8.800 3.200H13.600Q15.300 3.200 15.300 5V11.600Q15.300 13.300 13.600 13.300H2.400Q0.700 13.300 0.700 11.600Z" fill="#e9c955" stroke="#7d6a1c" stroke-width="1"/><path d="M1.600 6.200Q1.600 4.900 2.900 4.900H13.200Q14.400 4.900 14.400 6.200V11.300Q14.400 12.400 13.300 12.400H2.700Q1.600 12.400 1.600 11.300Z" fill="url(#fg)" stroke="#fff8cc" stroke-width="0.700"/><path d="M1.500 13.300H13.800Q15.300 13.300 15.300 11.800V5" fill="none" stroke="#5f5010" stroke-width="1.300"/></g><path d="M66 586.5H74" stroke="#8c8c8c" stroke-width="1" stroke-dasharray="1 1" shape-rendering="crispEdges"/><g transform="translate(75,578.5)"><path d="M0.700 3.200Q0.700 1.200 2.600 1.200H6.200Q7.400 1.200 8.200 2.400L8.800 3.200H13.600Q15.300 3.200 15.300 5V11.600Q15.300 13.300 13.600 13.300H2.400Q0.700 13.300 0.700 11.600Z" fill="#e9c955" stroke="#7d6a1c" stroke-width="1"/><path d="M1.600 6.200Q1.600 4.900 2.900 4.900H13.200Q14.400 4.900 14.400 6.200V11.300Q14.400 12.400 13.300 12.400H2.700Q1.600 12.400 1.600 11.300Z" fill="url(#fg)" stroke="#fff8cc" stroke-width="0.700"/><path d="M1.500 13.300H13.800Q15.300 13.300 15.300 11.800V5" fill="none" stroke="#5f5010" stroke-width="1.300"/></g><path d="M66 604.5H74" stroke="#8c8c8c" stroke-width="1" stroke-dasharray="1 1" shape-rendering="crispEdges"/><g transform="translate(75,596.5)"><path d="M0.700 3.200Q0.700 1.200 2.600 1.200H6.200Q7.400 1.200 8.200 2.400L8.800 3.200H13.600Q15.300 3.200 15.300 5V11.600Q15.300 13.300 13.600 13.300H2.400Q0.700 13.300 0.700 11.600Z" fill="#e9c955" stroke="#7d6a1c" stroke-width="1"/><path d="M1.600 6.200Q1.600 4.900 2.900 4.900H13.200Q14.400 4.900 14.400 6.200V11.300Q14.400 12.400 13.300 12.400H2.700Q1.600 12.400 1.600 11.300Z" fill="url(#fg)" stroke="#fff8cc" stroke-width="0.700"/><path d="M1.500 13.300H13.800Q15.300 13.300 15.300 11.800V5" fill="none" stroke="#5f5010" stroke-width="1.300"/></g><path d="M66 622.5H74" stroke="#8c8c8c" stroke-width="1" stroke-dasharray="1 1" shape-rendering="crispEdges"/><g transform="translate(75,614.5)"><path d="M0.700 3.200Q0.700 1.200 2.600 1.200H6.200Q7.400 1.200 8.200 2.400L8.800 3.200H13.600Q15.300 3.200 15.300 5V11.600Q15.300 13.300 13.600 13.300H2.400Q0.700 13.300 0.700 11.600Z" fill="#e9c955" stroke="#7d6a1c" stroke-width="1"/><path d="M1.600 6.200Q1.600 4.900 2.900 4.900H13.200Q14.400 4.900 14.400 6.200V11.300Q14.400 12.400 13.300 12.400H2.700Q1.600 12.400 1.600 11.300Z" fill="url(#fg)" stroke="#fff8cc" stroke-width="0.700"/><path d="M1.500 13.300H13.800Q15.300 13.300 15.300 11.800V5" fill="none" stroke="#5f5010" stroke-width="1.300"/></g><path d="M66 640.5H74" stroke="#8c8c8c" stroke-width="1" stroke-dasharray="1 1" shape-rendering="crispEdges"/><g transform="translate(75,632.5)"><path d="M0.700 3.200Q0.700 1.200 2.600 1.200H6.200Q7.400 1.200 8.200 2.400L8.800 3.200H13.600Q15.300 3.200 15.300 5V11.600Q15.300 13.300 13.600 13.300H2.400Q0.700 13.300 0.700 11.600Z" fill="#e9c955" stroke="#7d6a1c" stroke-width="1"/><path d="M1.600 6.200Q1.600 4.900 2.900 4.900H13.200Q14.400 4.900 14.400 6.200V11.300Q14.400 12.400 13.300 12.400H2.700Q1.600 12.400 1.600 11.300Z" fill="url(#fg)" stroke="#fff8cc" stroke-width="0.700"/><path d="M1.500 13.300H13.800Q15.300 13.300 15.300 11.800V5" fill="none" stroke="#5f5010" stroke-width="1.300"/></g><path d="M66 658.5H74" stroke="#8c8c8c" stroke-width="1" stroke-dasharray="1 1" shape-rendering="crispEdges"/><rect x="60.5" y="654.5" width="8" height="8" fill="#fff" stroke="#848484" stroke-width="1" shape-rendering="crispEdges"/><path d="M62 658.5H67" stroke="#000" stroke-width="1" shape-rendering="crispEdges"/><path d="M64.5 656V661" stroke="#000" stroke-width="1" shape-rendering="crispEdges"/><g transform="translate(75,650.5)"><path d="M0.700 3.200Q0.700 1.200 2.600 1.200H6.200Q7.400 1.200 8.200 2.400L8.800 3.200H13.600Q15.300 3.200 15.300 5V11.600Q15.300 13.300 13.600 13.300H2.400Q0.700 13.300 0.700 11.600Z" fill="#e9c955" stroke="#7d6a1c" stroke-width="1"/><path d="M1.600 6.200Q1.600 4.900 2.900 4.900H13.200Q14.400 4.900 14.400 6.200V11.300Q14.400 12.400 13.300 12.400H2.700Q1.600 12.400 1.600 11.300Z" fill="url(#fg)" stroke="#fff8cc" stroke-width="0.700"/><path d="M1.500 13.300H13.800Q15.300 13.300 15.300 11.800V5" fill="none" stroke="#5f5010" stroke-width="1.300"/></g><path d="M66 676.5H74" stroke="#8c8c8c" stroke-width="1" stroke-dasharray="1 1" shape-rendering="crispEdges"/><g transform="translate(75,668.5)"><path d="M0.700 3.200Q0.700 1.200 2.600 1.200H6.200Q7.400 1.200 8.200 2.400L8.800 3.200H13.600Q15.300 3.200 15.300 5V11.600Q15.300 13.300 13.600 13.300H2.400Q0.700 13.300 0.700 11.600Z" fill="#e9c955" stroke="#7d6a1c" stroke-width="1"/><path d="M1.600 6.200Q1.600 4.900 2.900 4.900H13.200Q14.400 4.900 14.400 6.200V11.300Q14.400 12.400 13.300 12.400H2.700Q1.600 12.400 1.600 11.300Z" fill="url(#fg)" stroke="#fff8cc" stroke-width="0.700"/><path d="M1.500 13.300H13.800Q15.300 13.300 15.300 11.800V5" fill="none" stroke="#5f5010" stroke-width="1.300"/></g><path d="M66 694.5H74" stroke="#8c8c8c" stroke-width="1" stroke-dasharray="1 1" shape-rendering="crispEdges"/><g transform="translate(75,686.5)"><path d="M0.700 3.200Q0.700 1.200 2.600 1.200H6.200Q7.400 1.200 8.200 2.400L8.800 3.200H13.600Q15.300 3.200 15.300 5V11.600Q15.300 13.300 13.600 13.300H2.400Q0.700 13.300 0.700 11.600Z" fill="#e9c955" stroke="#7d6a1c" stroke-width="1"/><path d="M1.600 6.200Q1.600 4.900 2.900 4.900H13.200Q14.400 4.900 14.400 6.200V11.300Q14.400 12.400 13.300 12.400H2.700Q1.600 12.400 1.600 11.300Z" fill="url(#fg)" stroke="#fff8cc" stroke-width="0.700"/><path d="M1.500 13.300H13.800Q15.300 13.300 15.300 11.800V5" fill="none" stroke="#5f5010" stroke-width="1.300"/></g><path d="M66 712.5H74" stroke="#8c8c8c" stroke-width="1" stroke-dasharray="1 1" shape-rendering="crispEdges"/><rect x="60.5" y="708.5" width="8" height="8" fill="#fff" stroke="#848484" stroke-width="1" shape-rendering="crispEdges"/><path d="M62 712.5H67" stroke="#000" stroke-width="1" shape-rendering="crispEdges"/><path d="M64.5 710V715" stroke="#000" stroke-width="1" shape-rendering="crispEdges"/><g transform="translate(75,704.5)"><path d="M0.700 3.200Q0.700 1.200 2.600 1.200H6.200Q7.400 1.200 8.200 2.400L8.800 3.200H13.600Q15.300 3.200 15.300 5V11.600Q15.300 13.300 13.600 13.300H2.400Q0.700 13.300 0.700 11.600Z" fill="#e9c955" stroke="#7d6a1c" stroke-width="1"/><path d="M1.600 6.200Q1.600 4.900 2.900 4.900H13.200Q14.400 4.900 14.400 6.200V11.300Q14.400 12.400 13.300 12.400H2.700Q1.600 12.400 1.600 11.300Z" fill="url(#fg)" stroke="#fff8cc" stroke-width="0.700"/><path d="M1.500 13.300H13.800Q15.300 13.300 15.300 11.800V5" fill="none" stroke="#5f5010" stroke-width="1.300"/></g><path d="M66 730.5H74" stroke="#8c8c8c" stroke-width="1" stroke-dasharray="1 1" shape-rendering="crispEdges"/><rect x="60.5" y="726.5" width="8" height="8" fill="#fff" stroke="#848484" stroke-width="1" shape-rendering="crispEdges"/><path d="M62 730.5H67" stroke="#000" stroke-width="1" shape-rendering="crispEdges"/><path d="M64.5 728V733" stroke="#000" stroke-width="1" shape-rendering="crispEdges"/><g transform="translate(75,722.5)"><path d="M0.700 3.200Q0.700 1.200 2.600 1.200H6.200Q7.400 1.200 8.200 2.400L8.800 3.200H13.600Q15.300 3.200 15.300 5V11.600Q15.300 13.300 13.600 13.300H2.400Q0.700 13.300 0.700 11.600Z" fill="#e9c955" stroke="#7d6a1c" stroke-width="1"/><path d="M1.600 6.200Q1.600 4.900 2.900 4.900H13.200Q14.400 4.900 14.400 6.200V11.300Q14.400 12.400 13.300 12.400H2.700Q1.600 12.400 1.600 11.300Z" fill="url(#fg)" stroke="#fff8cc" stroke-width="0.700"/><path d="M1.500 13.300H13.800Q15.300 13.300 15.300 11.800V5" fill="none" stroke="#5f5010" stroke-width="1.300"/></g><path d="M66 748.5H74" stroke="#8c8c8c" stroke-width="1" stroke-dasharray="1 1" shape-rendering="crispEdges"/><rect x="60.5" y="744.5" width="8" height="8" fill="#fff" stroke="#848484" stroke-width="1" shape-rendering="crispEdges"/><path d="M62 748.5H67" stroke="#000" stroke-width="1" shape-rendering="crispEdges"/><path d="M64.5 746V751" stroke="#000" stroke-width="1" shape-rendering="crispEdges"/><g transform="translate(75,740.5)"><path d="M0.700 3.200Q0.700 1.200 2.600 1.200H6.200Q7.400 1.200 8.200 2.400L8.800 3.200H13.600Q15.300 3.200 15.300 5V11.600Q15.300 13.300 13.600 13.300H2.400Q0.700 13.300 0.700 11.600Z" fill="#e9c955" stroke="#7d6a1c" stroke-width="1"/><path d="M1.600 6.200Q1.600 4.900 2.900 4.900H13.200Q14.400 4.900 14.400 6.200V11.300Q14.400 12.400 13.300 12.400H2.700Q1.600 12.400 1.600 11.300Z" fill="url(#fg)" stroke="#fff8cc" stroke-width="0.700"/><path d="M1.500 13.300H13.800Q15.300 13.300 15.300 11.800V5" fill="none" stroke="#5f5010" stroke-width="1.300"/></g></svg>
<div class="b" style="left:235px;top:161px;width:232px;height:750px;overflow:hidden;"><span class="t" style="left:96.0px;top:1.5px;font-size:12px;color:#000;letter-spacing:-0.147px;">véhicules</span><span class="t" style="left:96.0px;top:19.5px;font-size:12px;color:#000;transform-origin:0 50%;transform:scaleX(0.8288);">VRD</span><span class="t" style="left:77.0px;top:37.5px;font-size:12px;color:#000;transform-origin:0 50%;transform:scaleX(0.8925);">3D-POUR_MAQUETTES</span><span class="t" style="left:96.0px;top:55.5px;font-size:12px;color:#000;letter-spacing:-0.389px;">Ascenseurs</span><span class="t" style="left:96.0px;top:73.5px;font-size:12px;color:#000;letter-spacing:-0.256px;">Balcons</span><span class="t" style="left:96.0px;top:91.5px;font-size:12px;color:#000;letter-spacing:-0.315px;">Boite_Aux_Lettres</span><span class="t" style="left:96.0px;top:109.5px;font-size:12px;color:#000;letter-spacing:-0.085px;">Clotures</span><span class="t" style="left:96.0px;top:127.5px;font-size:12px;color:#000;letter-spacing:-0.230px;">Concessionnaires</span><span class="t" style="left:96.0px;top:145.5px;font-size:12px;color:#000;letter-spacing:-0.125px;">Corniches</span><span class="t" style="left:96.0px;top:163.5px;font-size:12px;color:#000;letter-spacing:-0.215px;">Dalles de Plafond</span><span class="t" style="left:96.0px;top:181.5px;font-size:12px;color:#000;letter-spacing:-0.300px;">Dalles de sol</span><span class="t" style="left:96.0px;top:199.5px;font-size:12px;color:#000;transform-origin:0 50%;transform:scaleX(0.9231);">Dalles Facade</span><span class="t" style="left:96.0px;top:217.5px;font-size:12px;color:#000;transform-origin:0 50%;transform:scaleX(0.9244);">Enseignes</span><span class="t" style="left:96.0px;top:235.5px;font-size:12px;color:#000;transform-origin:0 50%;transform:scaleX(0.8977);">Escaliers</span><span class="t" style="left:115.0px;top:253.5px;font-size:12px;color:#000;letter-spacing:-0.369px;">Balustres</span><span class="t" style="left:96.0px;top:271.5px;font-size:12px;color:#000;transform-origin:0 50%;transform:scaleX(0.9246);">Fermes</span><span class="t" style="left:96.0px;top:289.5px;font-size:12px;color:#000;letter-spacing:-0.121px;">Fumisterie</span><span class="t" style="left:96.0px;top:307.5px;font-size:12px;color:#000;letter-spacing:-0.266px;">Gardes-corps</span><span class="t" style="left:115.0px;top:325.5px;font-size:12px;color:#000;transform-origin:0 50%;transform:scaleX(0.8821);">0-PROFILS</span><span class="t" style="left:115.0px;top:343.5px;font-size:12px;color:#000;letter-spacing:0.021px;">Modules</span><div class="b" style="left:94px;top:360px;width:58px;height:18px;background:#0078d7;"></div><span class="t" style="left:96.0px;top:361.5px;font-size:12px;color:#fff;letter-spacing:-0.136px;">Gouttières</span><span class="t" style="left:96.0px;top:379.5px;font-size:12px;color:#000;letter-spacing:-0.314px;">Grilles</span><span class="t" style="left:96.0px;top:397.5px;font-size:12px;color:#000;letter-spacing:-0.109px;">Luminaires</span><span class="t" style="left:96.0px;top:415.5px;font-size:12px;color:#000;letter-spacing:-0.232px;">Magasins</span><span class="t" style="left:96.0px;top:433.5px;font-size:12px;color:#000;letter-spacing:-0.183px;">Marquises</span><span class="t" style="left:96.0px;top:451.5px;font-size:12px;color:#000;letter-spacing:0.032px;">Mobilier extérieur</span><span class="t" style="left:96.0px;top:469.5px;font-size:12px;color:#000;letter-spacing:0.111px;">Mobilier interieur</span><span class="t" style="left:96.0px;top:487.5px;font-size:12px;color:#000;letter-spacing:-0.213px;">Objets</span><span class="t" style="left:96.0px;top:505.5px;font-size:12px;color:#000;letter-spacing:-0.366px;">Objets_Param</span><span class="t" style="left:96.0px;top:523.5px;font-size:12px;color:#000;letter-spacing:-0.175px;">Ouvertures</span><span class="t" style="left:96.0px;top:541.5px;font-size:12px;color:#000;letter-spacing:-0.240px;">Ouvertures_param</span><span class="t" style="left:96.0px;top:559.5px;font-size:12px;color:#000;letter-spacing:-0.190px;">Pare-soleil</span><span class="t" style="left:96.0px;top:577.5px;font-size:12px;color:#000;letter-spacing:-0.332px;">Pare-vues</span><span class="t" style="left:96.0px;top:595.5px;font-size:12px;color:#000;letter-spacing:-0.332px;">Pergolas</span><span class="t" style="left:96.0px;top:613.5px;font-size:12px;color:#000;letter-spacing:-0.244px;">personnages</span><span class="t" style="left:96.0px;top:631.5px;font-size:12px;color:#000;letter-spacing:-0.236px;">Poeles-Cheminees</span><span class="t" style="left:96.0px;top:649.5px;font-size:12px;color:#000;transform-origin:0 50%;transform:scaleX(0.9277);">Sanitaires</span><span class="t" style="left:96.0px;top:667.5px;font-size:12px;color:#000;letter-spacing:-0.176px;">Sport</span><span class="t" style="left:96.0px;top:685.5px;font-size:12px;color:#000;letter-spacing:-0.087px;">Structure</span><span class="t" style="left:96.0px;top:703.5px;font-size:12px;color:#000;letter-spacing:0.098px;">Toiture</span><span class="t" style="left:96.0px;top:721.5px;font-size:12px;color:#000;letter-spacing:-0.088px;">Végétation</span><span class="t" style="left:96.0px;top:739.5px;font-size:12px;color:#000;letter-spacing:-0.207px;">Vehicules</span></div>
<div class="b" style="left:467px;top:161px;width:16px;height:750px;background:#f0f0f0;"></div>
<div class="b" style="left:468px;top:557px;width:15px;height:171px;background:#cdcdcd;"></div>
<svg style="position:absolute;left:470px;top:166px;" width="10" height="8" viewBox="0 0 10 8"><path d="M1.500 5.800L5 2.500L8.500 5.800" fill="none" stroke="#505050" stroke-width="1.900"/></svg>
<svg style="position:absolute;left:470px;top:899px;" width="10" height="8" viewBox="0 0 10 8"><path d="M1.500 2.200L5 5.500L8.500 2.200" fill="none" stroke="#505050" stroke-width="1.900"/></svg>
<div class="b" style="left:235px;top:912px;width:248px;height:18px;background:#f0f0f0;"></div>
<div class="b" style="left:280px;top:913px;width:169px;height:16px;background:#cdcdcd;"></div>
<svg style="position:absolute;left:239px;top:915px;" width="8" height="12" viewBox="0 0 8 12"><path d="M5.500 2.500L2.200 6L5.500 9.500" fill="none" stroke="#505050" stroke-width="1.900"/></svg>
<svg style="position:absolute;left:454px;top:915px;" width="8" height="12" viewBox="0 0 8 12"><path d="M2.500 2.500L5.800 6L2.500 9.500" fill="none" stroke="#505050" stroke-width="1.900"/></svg>
<!-- s_dialog.grid -->
<div class="b" style="left:494px;top:190px;width:1173px;height:643px;box-sizing:border-box;background:#fff;border:1px solid;border-color:#8b8b8b #e8e8e8 #e8e8e8 #8b8b8b;box-shadow:inset 1px 1px 0 #b5b5b5;"></div>
<!-- s_dialog.fields -->
<div class="b" style="left:494px;top:160px;width:86px;height:23px;box-sizing:border-box;background:#f0f0f0;border:1px solid;border-color:#fdfdfd #6e6e6e #6e6e6e #fdfdfd;box-shadow:inset -1px -1px 0 #a5a5a5, inset 1px 1px 0 #fff;"></div><span class="t" style="left:505.5px;top:163.5px;font-size:12px;color:#000;letter-spacing:-0.142px;">Catalogue...</span>
<div class="b" style="left:588px;top:160px;width:893px;height:22px;box-sizing:border-box;background:#fff;border:1px solid;border-color:#8b8b8b #f8f8f8 #f8f8f8 #8b8b8b;box-shadow:inset 1px 1px 0 #6a6a6a, inset -1px -1px 0 #e3e3e3;"></div>
<span class="t" style="left:593.0px;top:163.5px;font-size:12px;color:#000;letter-spacing:-0.426px;">D:\MES DOCUMENTS\ARCALIB-EVO\3D-POUR_MAQUETTES\Gouttières\</span>
<div class="b" style="left:1463px;top:162px;width:16px;height:18px;box-sizing:border-box;background:#f0f0f0;border:1px solid;border-color:#fff #6e6e6e #6e6e6e #fff;box-shadow:inset -1px -1px 0 #a5a5a5;"></div>
<svg style="position:absolute;left:1467px;top:169px;" width="8" height="5" viewBox="0 0 8 5"><path d="M0 0H7L3.500 4Z" fill="#000"/></svg>
<span class="t" style="left:494.0px;top:855.0px;font-size:12px;color:#000;letter-spacing:0.333px;">Nom:</span>
<div class="b" style="left:608px;top:848.5px;width:953px;height:22px;box-sizing:border-box;background:#fff;border:1px solid;border-color:#8b8b8b #f8f8f8 #f8f8f8 #8b8b8b;box-shadow:inset 1px 1px 0 #6a6a6a, inset -1px -1px 0 #e3e3e3;"></div>
<span class="t" style="left:614.0px;top:851.5px;font-size:12px;color:#000;letter-spacing:-0.159px;">BAE-Prépatiné.iii</span>
<span class="t" style="left:494.0px;top:884.0px;font-size:12px;color:#000;letter-spacing:-0.030px;">Description:</span>
<div class="b" style="left:608px;top:878.5px;width:953px;height:22px;box-sizing:border-box;background:#fff;border:1px solid;border-color:#8b8b8b #f8f8f8 #f8f8f8 #8b8b8b;box-shadow:inset 1px 1px 0 #6a6a6a, inset -1px -1px 0 #e3e3e3;"></div>
<span class="t" style="left:494.0px;top:912.0px;font-size:12px;color:#000;letter-spacing:-0.194px;">Calque:</span>
<div class="b" style="left:608px;top:908.5px;width:953px;height:22px;box-sizing:border-box;background:#f0f0f0;border:1px solid;border-color:#8b8b8b #f8f8f8 #f8f8f8 #8b8b8b;box-shadow:inset 1px 1px 0 #6a6a6a, inset -1px -1px 0 #e3e3e3;"></div>
<span class="t" style="left:614.0px;top:911.5px;font-size:12px;color:#000;letter-spacing:0.125px;">Calque commun</span>
<div class="b" style="left:1574px;top:849px;width:93px;height:23px;box-sizing:border-box;background:#f0f0f0;border:1px solid;border-color:#fdfdfd #6e6e6e #6e6e6e #fdfdfd;box-shadow:inset -1px -1px 0 #a5a5a5, inset 1px 1px 0 #fff;"></div><span class="t" style="left:1583.0px;top:852.5px;font-size:12px;color:#000;letter-spacing:-0.158px;">Présentation...</span>
<div class="b" style="left:1575px;top:880px;width:92px;height:23px;box-sizing:border-box;background:#f0f0f0;border:1px solid #3c3c3c;box-shadow:inset -1px -1px 0 #6e6e6e, inset 1px 1px 0 #fff, inset -2px -2px 0 #a5a5a5;"></div><span class="t" style="left:1613.5px;top:883.5px;font-size:12px;color:#000;transform-origin:0 50%;transform:scaleX(0.8651);">OK</span>
<div class="b" style="left:1574px;top:908px;width:92px;height:23px;box-sizing:border-box;background:#f0f0f0;border:1px solid;border-color:#fdfdfd #6e6e6e #6e6e6e #fdfdfd;box-shadow:inset -1px -1px 0 #a5a5a5, inset 1px 1px 0 #fff;"></div><span class="t" style="left:1599.0px;top:911.5px;font-size:12px;color:#000;letter-spacing:0.092px;">Annuler</span>
<!-- s_dialog.dlgicons -->
<svg style="position:absolute;left:1497px;top:163px;" width="17" height="17" viewBox="0 0 17 17"><path d="M1 7L8 5.500V15L1 16.500Z" fill="#f1d56a" stroke="#c79a22" stroke-width="0.800"/><path d="M8 5.500L12 7V14L8 15Z" fill="#e8c850" stroke="#c79a22" stroke-width="0.800"/><path d="M5 15Q11 12 9 6.500H6L9.500 1L14 5.500H11.500Q13 13 5 15Z" fill="#2eaa2e" stroke="#1a7a1a" stroke-width="0.700"/></svg>
<svg style="position:absolute;left:1519px;top:163px;" width="17" height="17" viewBox="0 0 17 17"><path d="M1 8L3 5H6V14H1Z" fill="#f1d56a" stroke="#c79a22" stroke-width="0.800"/><rect x="5" y="1.500" width="9" height="7" fill="#fff" stroke="#8aa8d8" stroke-width="0.900"/><path d="M6.500 3.500H12.500M6.500 5.500H12.500" stroke="#b8cdea" stroke-width="0.900"/><path d="M3 8.500H15.500V14.500H3Z" fill="#fff" stroke="#e8a820" stroke-width="1"/><path d="M1 14.500H15.500" stroke="#e8a820" stroke-width="1.400"/></svg>
<svg style="position:absolute;left:1542px;top:163px;" width="17" height="17" viewBox="0 0 17 17"><path d="M1 3.500H7.500Q8.500 3.500 8.500 4.500Q8.500 3.500 9.500 3.500H16V14.500H9.500Q8.500 14.500 8.500 15.500Q8.500 14.500 7.500 14.500H1Z" fill="#fff" stroke="#5a6aa8" stroke-width="1.200"/><path d="M8.500 4.500V15" stroke="#5a6aa8" stroke-width="1"/><path d="M3.500 6V8M3.500 10V12M11 6V8M11 10V12" stroke="#8a9ad0" stroke-width="1.300"/><path d="M14 5V13" stroke="#9aa8d8" stroke-width="1.300"/></svg>
<div class="b" style="left:1563px;top:160px;width:22px;height:21px;box-sizing:border-box;background:#f7f7f7;border:1px solid;border-color:#8c8c8c #fff #fff #8c8c8c;"></div>
<svg style="position:absolute;left:1566px;top:164px;" width="17" height="15" viewBox="0 0 17 15"><path d="M1.500 3Q1.500 1.500 3 1.500H6L7.500 3H12Q13 3 13 4.500V6H4.500L1.500 13Z" fill="#e8c850" stroke="#c79a22" stroke-width="0.900"/><path d="M4.500 6H16L12.500 13.500H1.500Z" fill="#f1d56a" stroke="#c79a22" stroke-width="0.900"/><path d="M6 8H12" stroke="#c79a22" stroke-width="0.800"/></svg>
<svg style="position:absolute;left:1588px;top:163px;" width="18" height="17" viewBox="0 0 18 17"><path d="M1 4Q1 2.500 2.500 2.500H5.500L7 4H12.500Q14 4 14 5.500V12H1Z" fill="#f1d56a" stroke="#c79a22" stroke-width="0.900"/><path d="M1 12L3 6.500H16L13.500 12Z" fill="#fdf0a8" stroke="#c79a22" stroke-width="0.800"/><circle cx="7.500" cy="8" r="3.200" fill="#dce8fa" stroke="#8aa0c8" stroke-width="0.900"/><path d="M10 10.500L14 15" stroke="#d08a70" stroke-width="1.500"/></svg>
<svg style="position:absolute;left:1611px;top:163px;" width="17" height="17" viewBox="0 0 17 17"><path d="M1 4Q1 2 3 2H6.500L8.500 4H14Q16 4 16 6V13Q16 14.500 14.500 14.500H2.500Q1 14.500 1 13Z" fill="#e8c850" stroke="#c79a22" stroke-width="0.900"/><path d="M1.800 7Q1.800 6 3 6H14Q15.200 6 15.200 7V12.500Q15.200 13.700 14 13.700H3Q1.800 13.700 1.800 12.500Z" fill="url(#fg)"/></svg>
<svg style="position:absolute;left:1632px;top:164px;" width="20" height="15" viewBox="0 0 20 15"><path d="M4.500 1.500V13.500" stroke="#111" stroke-width="1.300"/><path d="M4.500 0L7 3.500H2ZM4.500 15L7 11.500H2Z" fill="#111"/><rect x="9" y="3.500" width="9" height="8.500" fill="#e8eef8" stroke="#8a9ab8" stroke-width="1"/><rect x="11.500" y="6" width="5" height="4.500" fill="#c8708a"/><rect x="11.500" y="6" width="2.500" height="4.500" fill="#8a96a8"/></svg>
<svg style="position:absolute;left:1659px;top:169px;" width="8" height="5" viewBox="0 0 8 5"><path d="M0 0H7.500L3.700 4.200Z" fill="#000"/></svg>
<!-- s_grid.griditems -->
<svg width="0" height="0" style="position:absolute"><defs>
<linearGradient id="gDarkL" x1="0" y1="0" x2="1" y2="0"><stop offset="0" stop-color="#3a3a3a"/><stop offset="1" stop-color="#4b4b4b"/></linearGradient>
<linearGradient id="gDarkR" x1="0" y1="0" x2="1" y2="0"><stop offset="0" stop-color="#555"/><stop offset="1" stop-color="#4a4a4a"/></linearGradient>
<linearGradient id="gDarkP" x1="0" y1="0" x2="1" y2="0"><stop offset="0" stop-color="#262626"/><stop offset=".45" stop-color="#4d4d4d"/><stop offset="1" stop-color="#232323"/></linearGradient>
<linearGradient id="gSilL" x1="0" y1="0" x2="1" y2="0"><stop offset="0" stop-color="#8a8a8a"/><stop offset=".6" stop-color="#b9b9b9"/><stop offset="1" stop-color="#c9c9c9"/></linearGradient>
<linearGradient id="gSilR" x1="0" y1="0" x2="1" y2="0"><stop offset="0" stop-color="#dedede"/><stop offset="1" stop-color="#b5b5b5"/></linearGradient>
<linearGradient id="gSilP" x1="0" y1="0" x2="1" y2="0"><stop offset="0" stop-color="#6a6a6a"/><stop offset=".5" stop-color="#a9a9a9"/><stop offset="1" stop-color="#6c6c6c"/></linearGradient>
<linearGradient id="gTube" x1="0" y1="0" x2="1" y2="0"><stop offset="0" stop-color="#a3a7ab"/><stop offset=".28" stop-color="#e6e9eb"/><stop offset=".52" stop-color="#bcc0c4"/><stop offset=".78" stop-color="#eceef0"/><stop offset="1" stop-color="#a9adb1"/></linearGradient>
<linearGradient id="gPipe" x1="0" y1="0" x2="1" y2="0"><stop offset="0" stop-color="#74746c"/><stop offset=".3" stop-color="#dcdcd4"/><stop offset=".6" stop-color="#aeaea6"/><stop offset="1" stop-color="#66665e"/></linearGradient>
<linearGradient id="gMet" x1="0" y1="0" x2="0" y2="1"><stop offset="0" stop-color="#e9e9e9"/><stop offset=".5" stop-color="#b9b9b9"/><stop offset="1" stop-color="#7f7f7f"/></linearGradient>
<linearGradient id="gMet2" x1="0" y1="0" x2="1" y2="1"><stop offset="0" stop-color="#f0f0f0"/><stop offset=".5" stop-color="#a8a8a8"/><stop offset="1" stop-color="#dcdcdc"/></linearGradient>
<linearGradient id="gHav" x1="0" y1="1" x2="1" y2="0"><stop offset="0" stop-color="#9a9a9a"/><stop offset=".25" stop-color="#f2f2f2"/><stop offset=".7" stop-color="#e2e2e2"/><stop offset="1" stop-color="#a2a2a2"/></linearGradient>
<linearGradient id="gNan" x1="0" y1="0" x2="1" y2="1"><stop offset="0" stop-color="#c6c6c6"/><stop offset=".6" stop-color="#a2a2a2"/><stop offset="1" stop-color="#b9b9b9"/></linearGradient>
<linearGradient id="gGut" x1="0" y1="0" x2="1" y2="0"><stop offset="0" stop-color="#b4bac4"/><stop offset=".3" stop-color="#d6d8d2"/><stop offset=".62" stop-color="#e4e3a4"/><stop offset="1" stop-color="#cfd0c4"/></linearGradient>
<linearGradient id="gGutF" x1="0" y1="0" x2="0" y2="1"><stop offset="0" stop-color="#dfe3ee"/><stop offset="1" stop-color="#a9b0c2"/></linearGradient>
<linearGradient id="gAE" x1="0" y1="0" x2="1" y2="0"><stop offset="0" stop-color="#8a8a8a"/><stop offset=".2" stop-color="#b9b9b9"/><stop offset=".42" stop-color="#5a5a5a"/><stop offset=".6" stop-color="#f4f4f4"/><stop offset=".85" stop-color="#dcdcdc"/><stop offset="1" stop-color="#8c8c8c"/></linearGradient>
<radialGradient id="gSh" cx=".5" cy=".5" r=".5"><stop offset="0" stop-color="#000" stop-opacity=".42"/><stop offset=".6" stop-color="#000" stop-opacity=".18"/><stop offset="1" stop-color="#000" stop-opacity="0"/></radialGradient>
</defs></svg>
<div class="b" style="left:511px;top:262px;width:92px;height:16px;background:#e9e9e9;"></div>
<svg style="position:absolute;left:515px;top:190px" width="210" height="72" viewBox="0 0 1920.01 658.289"><g transform="translate(0,0)"><ellipse cx="380" cy="505" rx="250" ry="105" fill="url(#gSh)"/><path d="M160 95L370 45L590 80L400 130Z" fill="#333"/><path d="M215 98L372 60L540 86L400 118Z" fill="#232323"/><path d="M160 95L400 130L400 445L165 380Z" fill="url(#gDarkL)"/><path d="M400 130L590 80L585 360L400 445Z" fill="url(#gDarkR)"/><path d="M478 165L555 150L555 178L478 193Z" fill="#161616"/><path d="M285 412L415 440L415 585Q350 620 285 585Z" fill="url(#gDarkP)"/></g><g transform="translate(1143,0)"><ellipse cx="380" cy="505" rx="250" ry="105" fill="url(#gSh)"/><path d="M160 95L370 45L590 80L400 130Z" fill="#9c9c9c"/><path d="M215 98L372 60L540 86L400 118Z" fill="#6b6b6b"/><path d="M160 95L400 130L400 445L165 380Z" fill="url(#gSilL)"/><path d="M400 130L590 80L585 360L400 445Z" fill="url(#gSilR)"/><path d="M478 165L555 150L555 178L478 193Z" fill="#2e2e2e"/><path d="M285 412L415 440L415 585Q350 620 285 585Z" fill="url(#gSilP)"/></g></svg>
<svg style="position:absolute;left:800.5px;top:192.5px" width="14" height="66" viewBox="0 0 128.001 603.431"><ellipse cx="60" cy="42" rx="12" ry="20" fill="none" stroke="#222" stroke-width="7"/><path d="M60 62V92" stroke="#222" stroke-width="7"/><ellipse cx="60" cy="110" rx="12" ry="20" fill="none" stroke="#222" stroke-width="7"/><path d="M60 130V160" stroke="#222" stroke-width="7"/><ellipse cx="60" cy="178" rx="12" ry="20" fill="none" stroke="#222" stroke-width="7"/><path d="M60 198V228" stroke="#222" stroke-width="7"/><ellipse cx="60" cy="246" rx="12" ry="20" fill="none" stroke="#222" stroke-width="7"/><path d="M60 266V296" stroke="#222" stroke-width="7"/><ellipse cx="60" cy="314" rx="12" ry="20" fill="none" stroke="#222" stroke-width="7"/><path d="M60 334V364" stroke="#222" stroke-width="7"/><ellipse cx="60" cy="382" rx="12" ry="20" fill="none" stroke="#222" stroke-width="7"/><path d="M60 402V432" stroke="#222" stroke-width="7"/><ellipse cx="60" cy="450" rx="12" ry="20" fill="none" stroke="#222" stroke-width="7"/><path d="M60 470V500" stroke="#222" stroke-width="7"/><ellipse cx="60" cy="518" rx="12" ry="20" fill="none" stroke="#222" stroke-width="7"/><path d="M60 538V568" stroke="#222" stroke-width="7"/></svg>
<svg style="position:absolute;left:890px;top:195px" width="210" height="72" viewBox="0 0 1920.01 658.289"><path d="M105 275L130 225L600 85L660 105L650 140L290 465L130 390Z" fill="#a9a9a9"/><path d="M130 225L600 85L640 100L300 330L110 280Z" fill="#8f8f8f"/><path d="M150 240L600 100L625 108L300 318Z" fill="#a4a4a4"/><path d="M110 280L300 330L290 465L130 390Z" fill="#bcbcbc"/><path d="M300 330L660 105L650 140L290 465Z" fill="#b0b0b0"/><path d="M300 330L660 105" stroke="#e4e4e4" stroke-width="9"/><path d="M110 280L300 330" stroke="#dcdcdc" stroke-width="8"/><path d="M130 225L600 85" stroke="#d2d2d2" stroke-width="8"/><path d="M305 360L650 135" stroke="#8a8a8a" stroke-width="7" stroke-dasharray="6 22"/><path d="M302 340V455" stroke="#6f6f6f" stroke-width="6" stroke-dasharray="10 14"/><ellipse cx="135" cy="238" rx="10" ry="14" fill="#666"/><g transform="translate(0,0)"><path d="M1410 50Q1410 28 1475 28Q1540 28 1540 50L1545 160Q1560 200 1600 260Q1645 330 1645 400L1645 515Q1645 540 1582 540Q1520 540 1520 515L1515 420Q1505 340 1460 280Q1415 215 1412 160Z" fill="url(#gPipe)"/><ellipse cx="1475" cy="48" rx="64" ry="16" fill="#66665f"/><ellipse cx="1475" cy="51" rx="52" ry="10" fill="#44443f"/><path d="M1412 150Q1478 172 1545 150" fill="none" stroke="#6f6f67" stroke-width="7"/><path d="M1445 70V160Q1450 215 1495 280Q1545 345 1550 420V530" fill="none" stroke="#f2f2ea" stroke-width="16" opacity=".5"/><path d="M1535 200Q1620 300 1630 420" fill="none" stroke="#3c3c36" stroke-width="7" stroke-dasharray="5 22" opacity=".8"/></g></svg>
<svg style="position:absolute;left:1140px;top:190px" width="210" height="72" viewBox="0 0 1920.01 658.289"><ellipse cx="400" cy="425" rx="230" ry="22" fill="url(#gSh)" opacity=".75"/><path d="M128 160L208 160Q205 230 265 250L470 280Q635 300 640 460L550 462Q545 370 470 360L300 335Q140 320 128 160Z" fill="url(#gMet)"/><path d="M128 160L208 160Q205 230 265 250L240 325Q135 290 128 160Z" fill="#777" opacity=".75"/><path d="M265 250L470 280L470 360L300 335L240 325Z" fill="#f1f1f1" opacity=".85"/><path d="M470 280Q635 300 640 460L550 462Q545 370 470 360Z" fill="#8a8a8a" opacity=".8"/><path d="M160 170Q160 280 280 295L470 320Q590 335 598 458" fill="none" stroke="#fff" stroke-width="16" opacity=".45"/><g transform="translate(0,45)"><path d="M1410 50Q1410 28 1475 28Q1540 28 1540 50L1545 160Q1560 200 1600 260Q1645 330 1645 400L1645 515Q1645 540 1582 540Q1520 540 1520 515L1515 420Q1505 340 1460 280Q1415 215 1412 160Z" fill="url(#gPipe)"/><ellipse cx="1475" cy="48" rx="64" ry="16" fill="#66665f"/><ellipse cx="1475" cy="51" rx="52" ry="10" fill="#44443f"/><path d="M1412 150Q1478 172 1545 150" fill="none" stroke="#6f6f67" stroke-width="7"/><path d="M1445 70V160Q1450 215 1495 280Q1545 345 1550 420V530" fill="none" stroke="#f2f2ea" stroke-width="16" opacity=".5"/><path d="M1535 200Q1620 300 1630 420" fill="none" stroke="#3c3c36" stroke-width="7" stroke-dasharray="5 22" opacity=".8"/></g></svg>
<svg style="position:absolute;left:1424px;top:192px" width="150" height="66" viewBox="0 0 1371.43 603.431"><g transform="translate(0,0)"><rect x="0" y="14" width="146" height="585" fill="url(#gTube)"/><path d="M0 18Q73 -12 146 18V38Q73 60 0 38Z" fill="#2b2b2b"/><path d="M0 130Q73 146 146 130" fill="none" stroke="#9a9ea2" stroke-width="6"/></g><g transform="translate(1143,0)"><rect x="0" y="14" width="146" height="585" fill="url(#gTube)"/><path d="M0 18Q73 -12 146 18V38Q73 60 0 38Z" fill="#2b2b2b"/><path d="M0 130Q73 146 146 130" fill="none" stroke="#9a9ea2" stroke-width="6"/></g></svg>
<svg style="position:absolute;left:515px;top:305px" width="210" height="50" viewBox="0 0 1920.01 457.145"><path d="M92 379.400H675" stroke="#000" stroke-width="9.143"/><path d="M535 160L565 155L565 122L555 126L225 210L212 226L212 290Q220 330 250 360Q290 385 335 380Q400 365 455 315Q505 255 525 185Z" fill="none" stroke="#7a0a30" stroke-width="8.500" stroke-linejoin="round"/><path d="M1441 103Q1440 170 1475 228Q1520 290 1585 312H1655Q1725 285 1770 225Q1795 180 1800 146H1818" fill="none" stroke="#7a0a30" stroke-width="17" stroke-linejoin="round"/><path d="M1592 313H1650" stroke="#fff" stroke-width="5"/></svg>
<svg style="position:absolute;left:775px;top:318px;" width="64" height="30" viewBox="0 0 64 30"><path d="M0 28.500H64" stroke="#000" stroke-width="1"/><path d="M6.500 1H58.500V7H53Q52 17 43 23Q34 29 25 27.500Q14 26 9 17Q6.500 12 6.500 1Z" fill="none" stroke="#111" stroke-width="1"/></svg>
<svg style="position:absolute;left:890px;top:300px" width="210" height="72" viewBox="0 0 1920.01 658.289"><path d="M95 310L610 140L675 140L675 255L200 435Q130 390 95 310Z" fill="url(#gHav)"/><path d="M232 372L675 213L675 240L222 400Z" fill="#1c1c1c"/><path d="M222 400L675 240L675 255L200 435Z" fill="#8e8e8e"/><path d="M230 372L675 212" stroke="#f4f4f4" stroke-width="14" stroke-dasharray="12 10"/><path d="M95 310L620 140" stroke="#2a2a2a" stroke-width="7" stroke-dasharray="14 9"/><path d="M610 140L675 140L675 215Z" fill="#8f8f8f" opacity=".7"/><path d="M95 310Q130 390 200 435L225 385Z" fill="#8c8c8c" opacity=".55"/><path d="M1440 148L1810 240L1600 415L1345 205Z" fill="url(#gNan)"/><path d="M1245 160L1345 205L1600 415L1555 340Z" fill="#a4a8b0"/><path d="M1245 160L1350 200L1440 148L1345 205Z" fill="#b9b9b9"/><path d="M1380 225L1530 305" stroke="#fff" stroke-width="13" stroke-dasharray="10 7"/><path d="M1245 160L1560 340" stroke="#7f838b" stroke-width="7" stroke-dasharray="12 10"/><path d="M1600 415L1810 240" stroke="#c9c9c9" stroke-width="5"/><path d="M1345 205L1600 415" stroke="#8a8a8a" stroke-width="4"/></svg>
<svg style="position:absolute;left:1140px;top:300px" width="210" height="72" viewBox="0 0 1920.01 658.289"><path d="M128 190L380 148L645 200L640 225Q600 330 500 400Q450 400 410 345L340 350Q300 395 235 400Q150 320 128 190Z" fill="url(#gAE)"/><path d="M128 190L380 148L645 200L640 215L385 170L130 210Z" fill="#3d3d3d"/><path d="M150 198L380 160L620 205L385 178Z" fill="#a5a5a5"/><path d="M330 290Q370 240 420 285L410 345L340 350Z" fill="#333"/><path d="M390 175L400 260" stroke="#eee" stroke-width="10" opacity=".7"/><path d="M580 290L500 400" stroke="#222" stroke-width="5"/><path d="M235 400Q300 395 340 350L410 345Q450 400 500 400" fill="none" stroke="#2f2f2f" stroke-width="8"/><path d="M1235 220L1380 240L1385 195L1530 250L1690 200L1690 235L1815 220L1800 290L1530 390L1290 300Z" fill="#a9a9a9"/><path d="M1385 195L1530 250L1530 300L1380 245Z" fill="#8c8c8c"/><path d="M1530 250L1690 200L1690 240L1530 300Z" fill="#7d7d7d"/><path d="M1235 220L1530 305L1530 390L1290 300Z" fill="#b2b2b2"/><path d="M1530 305L1815 220L1800 290L1530 390Z" fill="#9c9c9c"/><path d="M1235 220L1530 305L1815 220" fill="none" stroke="#e6e6e6" stroke-width="8"/><path d="M1260 255L1530 340L1805 255M1280 285L1530 370L1800 280" fill="none" stroke="#8a8a8a" stroke-width="4"/><path d="M1530 305V390" stroke="#6f6f6f" stroke-width="5"/></svg>
<svg style="position:absolute;left:1390px;top:300px" width="210" height="72" viewBox="0 0 1920.01 658.289"><path d="M95 195L475 135L675 300L670 330L545 445Q500 440 460 395L360 265L135 350L100 290Z" fill="#9a9a9a"/><path d="M95 195L475 135L460 215L110 280Z" fill="url(#gMet)"/><path d="M110 280L460 215L360 265L135 350Z" fill="#5f5f5f"/><path d="M140 300L350 250M150 325L355 262" stroke="#d9d9d9" stroke-width="8"/><path d="M475 135L675 300L640 375L480 230Z" fill="#6b6b6b"/><path d="M460 215L480 230L640 375L545 445Q500 440 460 395L360 265Z" fill="#e6e6e6"/><path d="M520 300L640 380L560 440Q510 430 480 390Z" fill="#f6f6f6" opacity=".8"/><path d="M360 262L450 385" stroke="#1c1c1c" stroke-width="12"/><circle cx="448" cy="382" r="11" fill="#111"/><path d="M640 375L545 445" stroke="#555" stroke-width="6"/><g transform="translate(1143,-18)"><path d="M118 268L495 165L497 200Q505 235 530 262L655 205L650 222L240 455Q150 400 118 268Z" fill="url(#gGut)"/><path d="M118 268Q150 400 240 455L262 375Q175 345 118 268Z" fill="#a9b0bc" opacity=".85"/><path d="M265 352L652 205L650 222L240 455L255 395Z" fill="url(#gGutF)"/><path d="M118 268L495 165" stroke="#8b909a" stroke-width="7" stroke-dasharray="22 12"/><path d="M262 362L652 207" stroke="#f7f8fb" stroke-width="10" stroke-dasharray="14 9"/><path d="M240 455L650 222" stroke="#8a8f9b" stroke-width="6" stroke-dasharray="20 10"/><circle cx="270" cy="368" r="9" fill="#1c1c1c"/></g></svg>
<svg style="position:absolute;left:515px;top:405px" width="210" height="72" viewBox="0 0 1920.01 658.289"><g transform="translate(0,0)"><path d="M118 268L495 165L497 200Q505 235 530 262L655 205L650 222L240 455Q150 400 118 268Z" fill="url(#gGut)"/><path d="M118 268Q150 400 240 455L262 375Q175 345 118 268Z" fill="#a9b0bc" opacity=".85"/><path d="M265 352L652 205L650 222L240 455L255 395Z" fill="url(#gGutF)"/><path d="M118 268L495 165" stroke="#8b909a" stroke-width="7" stroke-dasharray="22 12"/><path d="M262 362L652 207" stroke="#f7f8fb" stroke-width="10" stroke-dasharray="14 9"/><path d="M240 455L650 222" stroke="#8a8f9b" stroke-width="6" stroke-dasharray="20 10"/><circle cx="270" cy="368" r="9" fill="#1c1c1c"/></g><g transform="translate(1143,0)"><path d="M118 268L495 165L497 200Q505 235 530 262L655 205L650 222L240 455Q150 400 118 268Z" fill="url(#gGut)"/><path d="M118 268Q150 400 240 455L262 375Q175 345 118 268Z" fill="#a9b0bc" opacity=".85"/><path d="M265 352L652 205L650 222L240 455L255 395Z" fill="url(#gGutF)"/><path d="M118 268L495 165" stroke="#8b909a" stroke-width="7" stroke-dasharray="22 12"/><path d="M262 362L652 207" stroke="#f7f8fb" stroke-width="10" stroke-dasharray="14 9"/><path d="M240 455L650 222" stroke="#8a8f9b" stroke-width="6" stroke-dasharray="20 10"/><circle cx="270" cy="368" r="9" fill="#1c1c1c"/></g></svg>
<svg style="position:absolute;left:765px;top:405px" width="210" height="72" viewBox="0 0 1920.01 658.289"><path d="M118 360L158 280L470 135L470 118L545 85L655 105L655 125L640 180L180 405Z" fill="#b9bbbc"/><path d="M158 280L470 135L640 125L215 300Z" fill="#d6d7d8"/><path d="M215 300L640 125L640 180L180 405Z" fill="#b2b4b5"/><path d="M158 280L215 300L180 405L118 360Z" fill="#6f7173"/><path d="M165 295L205 310L178 388L132 357Z" fill="#cfcfcf"/><path d="M165 295L205 310L192 345L150 325Z" fill="#4a4a4a"/><path d="M470 118L545 85L655 105L560 150Z" fill="#c9cbcc"/><path d="M490 122L545 98L620 110L555 140Z" fill="#9aa2ac"/><path d="M470 135L560 165L560 150L470 118Z" fill="#e9e9e9"/></svg>
<span class="t" style="left:513.3px;top:261.5px;font-size:12px;color:#000;letter-spacing:-0.183px;">BAE-Prépatiné.iii</span>
<span class="t" style="left:666.0px;top:261.5px;font-size:12px;color:#000;letter-spacing:-0.335px;">BAE.iii</span>
<span class="t" style="left:777.2px;top:261.5px;font-size:12px;color:#000;letter-spacing:-0.175px;">Chaine01.iii</span>
<span class="t" style="left:897.5px;top:261.5px;font-size:12px;color:#000;letter-spacing:-0.237px;">Cheneau01.iii</span>
<span class="t" style="left:1028.4px;top:261.5px;font-size:12px;color:#000;letter-spacing:-0.185px;">Coude01.iii</span>
<span class="t" style="left:1153.5px;top:261.5px;font-size:12px;color:#000;letter-spacing:-0.149px;">Coude02.iii</span>
<span class="t" style="left:1278.3px;top:261.5px;font-size:12px;color:#000;letter-spacing:-0.149px;">Coude03.iii</span>
<span class="t" style="left:1396.3px;top:261.5px;font-size:12px;color:#000;letter-spacing:-0.219px;">descentD08.iii</span>
<span class="t" style="left:1521.4px;top:261.5px;font-size:12px;color:#000;letter-spacing:-0.219px;">descentD10.iii</span>
<span class="t" style="left:514.3px;top:368.5px;font-size:12px;color:#000;letter-spacing:0.209px;">goutière-bout.iii</span>
<span class="t" style="left:635.2px;top:368.5px;font-size:12px;color:#000;letter-spacing:0.166px;">goutière-profile.iii</span>
<span class="t" style="left:757.4px;top:368.5px;font-size:12px;color:#000;letter-spacing:0.117px;">goutière-profile2.iii</span>
<span class="t" style="left:877.4px;top:368.5px;font-size:12px;color:#000;letter-spacing:-0.083px;">Gouttiere-Havraise.iii</span>
<span class="t" style="left:1001.5px;top:368.5px;font-size:12px;color:#000;letter-spacing:-0.025px;">Gouttiere-Nantaise.iii</span>
<span class="t" style="left:1122.4px;top:368.5px;font-size:12px;color:#000;letter-spacing:-0.031px;">Gouttiere01-Angl-ext...</span>
<span class="t" style="left:1249.5px;top:368.5px;font-size:12px;color:#000;letter-spacing:-0.063px;">Gouttiere01-Angl-ex...</span>
<span class="t" style="left:1373.3px;top:368.5px;font-size:12px;color:#000;letter-spacing:0.057px;">Gouttiere01-Angl-int...</span>
<span class="t" style="left:1521.4px;top:368.5px;font-size:12px;color:#000;letter-spacing:-0.116px;">Gouttiere01.iii</span>
<span class="t" style="left:521.4px;top:475.5px;font-size:12px;color:#000;letter-spacing:-0.116px;">Gouttiere02.iii</span>
<span class="t" style="left:646.2px;top:475.5px;font-size:12px;color:#000;letter-spacing:-0.096px;">Gouttiere03.iii</span>
<span class="t" style="left:775.3px;top:475.5px;font-size:12px;color:#000;letter-spacing:-0.276px;">Pissette01.iii</span>
<!-- s_bottom.cmdline -->
<div class="b" style="left:27px;top:971px;width:1795px;height:33px;background:#f0f0f0;"></div>
<div class="b" style="left:27px;top:972px;width:1794px;height:1px;background:#fff;"></div>
<div class="b" style="left:30px;top:979px;width:292px;height:20px;box-sizing:border-box;background:#fff;border:1px solid;border-color:#868686 #f6f6f6 #f6f6f6 #868686;box-shadow:inset 1px 1px 0 #5f5f5f, inset -1px -1px 0 #dcdcdc;"></div><div class="b" style="left:305px;top:981px;width:15px;height:16px;box-sizing:border-box;background:#ececec;border:1px solid;border-color:#fff #6e6e6e #6e6e6e #fff;box-shadow:inset -1px -1px 0 #a5a5a5;"></div><svg style="position:absolute;left:309px;top:987px;" width="8" height="5" viewBox="0 0 8 5"><path d="M0 0H7L3.500 4Z" fill="#000"/></svg>
<span class="t" style="left:327.0px;top:982.0px;font-size:12.5px;color:#000;transform-origin:0 50%;transform:scaleX(0.8218);">Entrez la(les) commande(s):</span>
<div class="b" style="left:1406px;top:977px;width:61px;height:22px;box-sizing:border-box;background:#f0f0f0;border:1px solid;border-color:#7e7e7e #fbfbfb #fbfbfb #7e7e7e;box-shadow:inset 1px 1px 0 #b7b7b7;"></div>
<span class="t" style="left:1409.0px;top:982.0px;font-size:12.5px;color:#000;transform-origin:0 50%;transform:scaleX(0.8297);">Placement</span>
<div class="b" style="left:1476px;top:978px;width:161px;height:20px;box-sizing:border-box;background:#fff;border:1px solid;border-color:#7e7e7e #e8e8e8 #e8e8e8 #7e7e7e;box-shadow:inset 1px 1px 0 #4a4a4a;"></div>
<span class="t" style="left:1478.0px;top:978.5px;font-size:12.5px;color:#000;transform-origin:0 50%;transform:scaleX(0.8351);">Calque commun</span>
<div class="b" style="left:1620px;top:980px;width:16px;height:17px;box-sizing:border-box;background:#f0f0f0;border:1px solid;border-color:#fff #6e6e6e #6e6e6e #fff;"></div>
<span class="t" style="left:1624.0px;top:981.0px;font-size:11px;color:#000;">...</span>
<div class="b" style="left:1640px;top:978px;width:20px;height:21px;box-sizing:border-box;background:#e4e4e4;border:1px solid;border-color:#fff #6e6e6e #6e6e6e #fff;box-shadow:inset -1px -1px 0 #a5a5a5;"></div>
<svg style="position:absolute;left:1643px;top:981px;" width="14" height="14" viewBox="0 0 14 14"><path d="M1 6L5 2H13L9 6Z" fill="#fff" stroke="#222" stroke-width="1"/><path d="M1 8H9M1 10H9" stroke="#222" stroke-width="1"/><path d="M11 6V11M9 9.500L11 12.500L13 9.500Z" stroke="#1040d0" fill="#1040d0" stroke-width="1"/></svg>
<div class="b" style="left:1667px;top:977px;width:77px;height:22px;box-sizing:border-box;background:#f0f0f0;border:1px solid;border-color:#7e7e7e #fbfbfb #fbfbfb #7e7e7e;box-shadow:inset 1px 1px 0 #b7b7b7;"></div>
<span class="t" style="left:1670.0px;top:982.0px;font-size:12.5px;color:#000;transform-origin:0 50%;transform:scaleX(0.8312);">TSC 100</span>
<div class="b" style="left:1751px;top:977px;width:62px;height:22px;box-sizing:border-box;background:#f0f0f0;border:1px solid;border-color:#7e7e7e #fbfbfb #fbfbfb #7e7e7e;box-shadow:inset 1px 1px 0 #b7b7b7;"></div>
<span class="t" style="left:1754.0px;top:982.0px;font-size:12.5px;color:#000;transform-origin:0 50%;transform:scaleX(0.8414);">1.123 m</span>
<!-- s_bottom.bottomtb -->
<div class="b" style="left:0px;top:1004px;width:1920px;height:36px;background:#dcdee8;"></div>
<div class="b" style="left:0px;top:1003px;width:1920px;height:1px;background:#b4b4b8;"></div>
<div class="b" style="left:0px;top:1004px;width:1920px;height:1px;background:#fbfbfd;"></div>
<div class="b" style="left:2px;top:1006px;width:703px;height:33px;box-sizing:border-box;background:linear-gradient(#eeeef3,#e7e7ed 45%,#dedee6 90%,#dadae2);border:1px solid #f8f8fb;border-radius:5px 4px 4px 5px;box-shadow:0 0 0 0.500px #c6ccd6;"></div>
<div class="b" style="left:6px;top:1011px;width:2px;height:2px;background:#3f4654;"></div><div class="b" style="left:6px;top:1015px;width:2px;height:2px;background:#3f4654;"></div><div class="b" style="left:6px;top:1019px;width:2px;height:2px;background:#3f4654;"></div><div class="b" style="left:6px;top:1023px;width:2px;height:2px;background:#3f4654;"></div><div class="b" style="left:6px;top:1027px;width:2px;height:2px;background:#3f4654;"></div><div class="b" style="left:6px;top:1031px;width:2px;height:2px;background:#3f4654;"></div>
<svg style="position:absolute;left:12px;top:1013px;" width="18" height="18" viewBox="0 0 18 18"><path d="M1 7H17M1 11H17" stroke="#2f78b4" stroke-width="1.600"/><path d="M1 9H17" stroke="#a9d060" stroke-width="1.400"/></svg>
<svg style="position:absolute;left:33.5px;top:1013px;" width="18" height="18" viewBox="0 0 18 18"><path d="M2 3H16" stroke="#345" stroke-width="1.400"/><path d="M9 4V10M6.500 7.500L9 10.500L11.500 7.500Z" stroke="#e03030" fill="#e03030" stroke-width="1.200"/><path d="M1 12H17M1 16H17" stroke="#2f78b4" stroke-width="1.600"/><path d="M1 14H17" stroke="#a9d060" stroke-width="1.400"/></svg>
<svg style="position:absolute;left:56px;top:1013px;" width="18" height="18" viewBox="0 0 18 18"><path d="M1 5Q11 5 12 16" fill="none" stroke="#2f78b4" stroke-width="3.600"/><path d="M1 5Q11 5 12 16" fill="none" stroke="#a9d060" stroke-width="1.600"/></svg>
<svg style="position:absolute;left:78px;top:1020px;" width="6" height="4" viewBox="0 0 6 4"><path d="M0 0H6L3 3.500Z" fill="#6d7480"/></svg>
<svg style="position:absolute;left:88.5px;top:1013px;" width="18" height="18" viewBox="0 0 18 18"><rect x="5" y="2" width="9" height="14" fill="#2f78b4"/><rect x="5" y="5" width="9" height="3" fill="#dcd860"/><rect x="5" y="10" width="9" height="3" fill="#dcd860"/><path d="M15 3V15" stroke="#345" stroke-width="1.400"/></svg>
<svg style="position:absolute;left:111px;top:1013px;" width="18" height="18" viewBox="0 0 18 18"><path d="M3 3L9 1L15 4V10H4Z" fill="#fff" stroke="#8a96a8" stroke-width="1"/><path d="M3 12H16M5 15H16" stroke="#2f78b4" stroke-width="1.400"/></svg>
<div class="b" style="left:134px;top:1010px;width:1px;height:24px;background:#7d8796;box-shadow:1px 0 0 #f4f6fa;"></div>
<svg style="position:absolute;left:138.5px;top:1013px;" width="18" height="18" viewBox="0 0 18 18"><path d="M2 5H13V17" fill="none" stroke="#2f78b4" stroke-width="3.600"/><path d="M2 5H13V17" fill="none" stroke="#dcd860" stroke-width="1.400"/></svg>
<svg style="position:absolute;left:161px;top:1013px;" width="18" height="18" viewBox="0 0 18 18"><path d="M1 5Q11 5 12 16" fill="none" stroke="#2f78b4" stroke-width="3.600"/><path d="M1 5Q11 5 12 16" fill="none" stroke="#a9d060" stroke-width="1.600"/></svg>
<svg style="position:absolute;left:182.5px;top:1013px;" width="18" height="18" viewBox="0 0 18 18"><path d="M1 5H17M9 5V17" fill="none" stroke="#2f78b4" stroke-width="3.800"/><path d="M1 5H17M9 6V17" fill="none" stroke="#dfeefa" stroke-width="1.300"/></svg>
<svg style="position:absolute;left:205px;top:1013px;" width="18" height="18" viewBox="0 0 18 18"><path d="M3 3L9 9.500L15 3M9 9.500V17" fill="none" stroke="#2f78b4" stroke-width="3.400"/><path d="M3 3L9 9.500L15 3M9 9.500V17" fill="none" stroke="#a9d060" stroke-width="1.300"/></svg>
<svg style="position:absolute;left:227px;top:1013px;" width="18" height="18" viewBox="0 0 18 18"><path d="M1 7H17M1 11.500H17M6.500 2V17M11.500 2V17" stroke="#2f78b4" stroke-width="1.500"/><path d="M1 9H17" stroke="#a9d060" stroke-width="1.400"/></svg>
<svg style="position:absolute;left:248.5px;top:1013px;" width="18" height="18" viewBox="0 0 18 18"><path d="M4 4Q14 5 15 16" fill="none" stroke="#2f78b4" stroke-width="3.400"/><path d="M4 4Q14 5 15 16" fill="none" stroke="#a9d060" stroke-width="1.400"/><path d="M2 17L10 9" stroke="#2f78b4" stroke-width="1.200"/></svg>
<svg style="position:absolute;left:269.5px;top:1013px;" width="18" height="18" viewBox="0 0 18 18"><path d="M2 4V10H6V5H9V12" fill="none" stroke="#5a8ab0" stroke-width="2"/><path d="M11 10H15M13 10V16" stroke="#8aa" stroke-width="1.600"/></svg>
<svg style="position:absolute;left:291px;top:1013px;" width="18" height="18" viewBox="0 0 18 18"><path d="M2 4V10H6V5H9V12" fill="none" stroke="#5a8ab0" stroke-width="2"/><path d="M11 10H15M13 10V16" stroke="#8aa" stroke-width="1.600"/></svg>
<svg style="position:absolute;left:315.5px;top:1020px;" width="6" height="4" viewBox="0 0 6 4"><path d="M0 0H6L3 3.500Z" fill="#6d7480"/></svg>
<svg style="position:absolute;left:327px;top:1013px;" width="18" height="18" viewBox="0 0 18 18"><path d="M1 3H17" stroke="#2f78b4" stroke-width="2"/><path d="M4 3V17M8 3V17M12 3V17" stroke="#345" stroke-width="2"/><rect x="13" y="9" width="3" height="7" fill="#fff" stroke="#2f78b4" stroke-width="0.800"/></svg>
<div class="b" style="left:348.5px;top:1010px;width:1px;height:24px;background:#7d8796;box-shadow:1px 0 0 #f4f6fa;"></div>
<svg style="position:absolute;left:355px;top:1013px;" width="18" height="18" viewBox="0 0 18 18"><path d="M1 4H17" stroke="#a9d060" stroke-width="1.600"/><path d="M1 6.500H14" stroke="#dcd860" stroke-width="1.600"/><path d="M8 8H15V11H13V16H10V11H8Z" fill="#fff" stroke="#7a8aa0" stroke-width="0.800"/></svg>
<svg style="position:absolute;left:377px;top:1013px;" width="18" height="18" viewBox="0 0 18 18"><path d="M1 4H17" stroke="#a9d060" stroke-width="1.600"/><path d="M1 6.500H14" stroke="#dcd860" stroke-width="1.600"/><path d="M8 8H15V11H13V16H10V11H8Z" fill="#fff" stroke="#7a8aa0" stroke-width="0.800"/></svg>
<svg style="position:absolute;left:398.5px;top:1020px;" width="6" height="4" viewBox="0 0 6 4"><path d="M0 0H6L3 3.500Z" fill="#6d7480"/></svg>
<svg style="position:absolute;left:410px;top:1013px;" width="18" height="18" viewBox="0 0 18 18"><path d="M1 4H17" stroke="#a9d060" stroke-width="1.600"/><path d="M1 6.500H14" stroke="#dcd860" stroke-width="1.600"/><path d="M8 8H15V11H13V16H10V11H8Z" fill="#fff" stroke="#7a8aa0" stroke-width="0.800"/></svg>
<svg style="position:absolute;left:431px;top:1013px;" width="18" height="18" viewBox="0 0 18 18"><path d="M1 3H17M1 8H17" stroke="#a9d060" stroke-width="1.500"/><path d="M1 5.500H17" stroke="#e05a3a" stroke-width="1.500"/><path d="M1 11H12" stroke="#2f78b4" stroke-width="1.500"/><path d="M4 16Q4 13 7 13M14 13Q17 13 17 16" fill="none" stroke="#2f78b4" stroke-width="1.800"/></svg>
<svg style="position:absolute;left:453.5px;top:1020px;" width="6" height="4" viewBox="0 0 6 4"><path d="M0 0H6L3 3.500Z" fill="#6d7480"/></svg>
<svg style="position:absolute;left:463.5px;top:1013px;" width="18" height="18" viewBox="0 0 18 18"><path d="M1 3H17" stroke="#a9d060" stroke-width="1.500"/><path d="M3 6L15 9V15Z" fill="#fff" stroke="#2f78b4" stroke-width="1.400"/></svg>
<svg style="position:absolute;left:486px;top:1020px;" width="6" height="4" viewBox="0 0 6 4"><path d="M0 0H6L3 3.500Z" fill="#6d7480"/></svg>
<svg style="position:absolute;left:497px;top:1013px;" width="18" height="18" viewBox="0 0 18 18"><path d="M1 3H17M1 15H17" stroke="#2f78b4" stroke-width="1.600"/><path d="M5 3V15" stroke="#2f78b4" stroke-width="1.600"/><path d="M9 11Q9 8 12 8M14 14Q17 14 17 11" fill="none" stroke="#2f78b4" stroke-width="1.800"/></svg>
<svg style="position:absolute;left:519.5px;top:1020px;" width="6" height="4" viewBox="0 0 6 4"><path d="M0 0H6L3 3.500Z" fill="#6d7480"/></svg>
<svg style="position:absolute;left:530px;top:1013px;" width="18" height="18" viewBox="0 0 18 18"><path d="M1 3H17" stroke="#e05a3a" stroke-width="1.500"/><path d="M1 6H17" stroke="#a9d060" stroke-width="1.500"/><path d="M6 15Q6 11 10 11M12 16Q16 16 16 12" fill="none" stroke="#2f78b4" stroke-width="2"/></svg>
<svg style="position:absolute;left:552px;top:1020px;" width="6" height="4" viewBox="0 0 6 4"><path d="M0 0H6L3 3.500Z" fill="#6d7480"/></svg>
<svg style="position:absolute;left:562.5px;top:1013px;" width="18" height="18" viewBox="0 0 18 18"><path d="M3 3L9 1L15 4V10H4Z" fill="#fff" stroke="#8a96a8" stroke-width="1"/><path d="M3 12H16M5 15H16" stroke="#2f78b4" stroke-width="1.400"/></svg>
<svg style="position:absolute;left:584.5px;top:1013px;" width="18" height="18" viewBox="0 0 18 18"><path d="M1 5H17" stroke="#a9d060" stroke-width="1.600"/><path d="M1 9H17" stroke="#e05a3a" stroke-width="1.600"/><path d="M1 13H17" stroke="#2f78b4" stroke-width="1.600"/></svg>
<svg style="position:absolute;left:607px;top:1013px;" width="18" height="18" viewBox="0 0 18 18"><path d="M1 3H17M1 15H17" stroke="#2f78b4" stroke-width="1.600"/><path d="M1 7H17" stroke="#a9d060" stroke-width="1.600"/><path d="M1 11H17" stroke="#e05a3a" stroke-width="1.400"/></svg>
<svg style="position:absolute;left:628.5px;top:1013px;" width="18" height="18" viewBox="0 0 18 18"><path d="M1 3H17M1 11H17" stroke="#a9d060" stroke-width="1.600"/><path d="M1 7H17" stroke="#e05a3a" stroke-width="1.600"/><path d="M1 15H10" stroke="#2f78b4" stroke-width="1.600"/><circle cx="14" cy="14.500" r="2.200" fill="none" stroke="#2f78b4" stroke-width="1.400"/></svg>
<svg style="position:absolute;left:651px;top:1013px;" width="18" height="18" viewBox="0 0 18 18"><path d="M2 3V8M16 3V8M3 5.500H15" stroke="#2f78b4" stroke-width="1.600"/><rect x="2" y="9" width="5" height="7" fill="#9ab8d8"/><circle cx="12" cy="13" r="3.500" fill="#fff" stroke="#8a96a8" stroke-width="1"/></svg>
<svg style="position:absolute;left:672.5px;top:1013px;" width="18" height="18" viewBox="0 0 18 18"><path d="M2 16V8L6 4L10 8V16Z" fill="#cfe0f2" stroke="#6a9ad0" stroke-width="1"/><path d="M8 16V9L11 6L14 9V16Z" fill="#e6eff8" stroke="#6a9ad0" stroke-width="1"/><path d="M14 10V17M10.500 13.500H17.500" stroke="#e03030" stroke-width="2"/></svg>
<div class="b" style="left:693px;top:1007px;width:11px;height:31px;background:#cfd0d8;border-radius:0 4px 4px 0;"></div>
<svg style="position:absolute;left:696px;top:1030px;" width="7" height="7" viewBox="0 0 7 7"><path d="M0 0.500H6" stroke="#555" stroke-width="1"/><path d="M0 2.500H6L3 6Z" fill="#555"/></svg>
<div class="b" style="left:708px;top:1006px;width:827px;height:33px;box-sizing:border-box;background:linear-gradient(#eeeef3,#e7e7ed 45%,#dedee6 90%,#dadae2);border:1px solid #f8f8fb;border-radius:5px 4px 4px 5px;box-shadow:0 0 0 0.500px #c6ccd6;"></div>
<div class="b" style="left:712px;top:1011px;width:2px;height:2px;background:#3f4654;"></div><div class="b" style="left:712px;top:1015px;width:2px;height:2px;background:#3f4654;"></div><div class="b" style="left:712px;top:1019px;width:2px;height:2px;background:#3f4654;"></div><div class="b" style="left:712px;top:1023px;width:2px;height:2px;background:#3f4654;"></div><div class="b" style="left:712px;top:1027px;width:2px;height:2px;background:#3f4654;"></div><div class="b" style="left:712px;top:1031px;width:2px;height:2px;background:#3f4654;"></div>
<div class="b" style="left:718px;top:1012px;width:16px;height:18px;box-sizing:border-box;background:#d0d0d0;border:1px solid;border-color:#fff #777 #777 #fff;"></div>
<svg style="position:absolute;left:720px;top:1015px;" width="12" height="12" viewBox="0 0 12 12"><path d="M6 1.500L10.500 10.500H1.500Z" fill="none" stroke="#000" stroke-width="1"/></svg>
<span class="t" style="left:736.0px;top:1012.5px;font-size:15px;color:#000;">X</span>
<div class="b" style="left:748px;top:1012px;width:15px;height:18px;box-sizing:border-box;background:#d6d6d6;border:1px solid;border-color:#fff #777 #777 #fff;"></div><svg style="position:absolute;left:750px;top:1014px;" width="12" height="14" viewBox="0 0 12 14"><path d="M6 5V3.500A2.500 2.500 0 0 1 11 3.500V4.500" fill="none" stroke="#1d3f9e" stroke-width="1.400"/><rect x="1" y="6" width="9" height="7" fill="#1d3f9e"/><path d="M1 8H10M1 10H10M1 12H10" stroke="#fff" stroke-width="0.700"/></svg>
<div class="b" style="left:765px;top:1011px;width:57px;height:22px;box-sizing:border-box;background:#fff;border:1px solid;border-color:#8a8a8a #fafafa #fafafa #8a8a8a;box-shadow:inset 1px 1px 0 #5f5f5f, inset -1px -1px 0 #dcdcdc;"></div><span class="t" style="left:768.0px;top:1012.5px;font-size:15px;color:#000;letter-spacing:-0.312px;">23.083</span>
<span class="t" style="left:823.0px;top:1012.5px;font-size:15px;color:#000;">Y</span>
<div class="b" style="left:835px;top:1012px;width:15px;height:18px;box-sizing:border-box;background:#d6d6d6;border:1px solid;border-color:#fff #777 #777 #fff;"></div><svg style="position:absolute;left:837px;top:1014px;" width="12" height="14" viewBox="0 0 12 14"><path d="M6 5V3.500A2.500 2.500 0 0 1 11 3.500V4.500" fill="none" stroke="#1d3f9e" stroke-width="1.400"/><rect x="1" y="6" width="9" height="7" fill="#1d3f9e"/><path d="M1 8H10M1 10H10M1 12H10" stroke="#fff" stroke-width="0.700"/></svg>
<div class="b" style="left:850px;top:1011px;width:58px;height:22px;box-sizing:border-box;background:#fff;border:1px solid;border-color:#8a8a8a #fafafa #fafafa #8a8a8a;box-shadow:inset 1px 1px 0 #5f5f5f, inset -1px -1px 0 #dcdcdc;"></div><span class="t" style="left:853.0px;top:1012.5px;font-size:15px;color:#000;letter-spacing:-0.312px;">22.378</span>
<span class="t" style="left:911.0px;top:1012.5px;font-size:15px;color:#000;">Z</span>
<div class="b" style="left:923px;top:1012px;width:15px;height:18px;box-sizing:border-box;background:#d6d6d6;border:1px solid;border-color:#fff #777 #777 #fff;"></div><svg style="position:absolute;left:925px;top:1014px;" width="12" height="14" viewBox="0 0 12 14"><path d="M6 5V3.500A2.500 2.500 0 0 1 11 3.500V4.500" fill="none" stroke="#1d3f9e" stroke-width="1.400"/><rect x="1" y="6" width="9" height="7" fill="#1d3f9e"/><path d="M1 8H10M1 10H10M1 12H10" stroke="#fff" stroke-width="0.700"/></svg>
<div class="b" style="left:940px;top:1011px;width:56px;height:22px;box-sizing:border-box;background:#e9e9e9;border:1px solid;border-color:#8a8a8a #fafafa #fafafa #8a8a8a;box-shadow:inset 1px 1px 0 #5f5f5f, inset -1px -1px 0 #dcdcdc;"></div><span class="t" style="left:943.0px;top:1012.5px;font-size:15px;color:#000;letter-spacing:-0.307px;">0.000</span>
<span class="t" style="left:998.0px;top:1012.5px;font-size:15px;color:#000;">L</span>
<div class="b" style="left:1007px;top:1011px;width:51px;height:22px;box-sizing:border-box;background:#fff;border:1px solid;border-color:#8a8a8a #fafafa #fafafa #8a8a8a;box-shadow:inset 1px 1px 0 #5f5f5f, inset -1px -1px 0 #dcdcdc;"></div><span class="t" style="left:1010.0px;top:1012.5px;font-size:15px;color:#000;letter-spacing:-0.312px;">36.766</span>
<span class="t" style="left:1059.0px;top:1012.5px;font-size:15px;color:#000;">A</span>
<div class="b" style="left:1069px;top:1011px;width:51px;height:22px;box-sizing:border-box;background:#fff;border:1px solid;border-color:#8a8a8a #fafafa #fafafa #8a8a8a;box-shadow:inset 1px 1px 0 #5f5f5f, inset -1px -1px 0 #dcdcdc;"></div><span class="t" style="left:1072.0px;top:1012.5px;font-size:15px;color:#000;letter-spacing:-0.312px;">149.81</span>
<div class="b" style="left:1129px;top:1010px;width:98px;height:23px;box-sizing:border-box;background:#fff;border:1px solid;border-color:#868686 #f6f6f6 #f6f6f6 #868686;box-shadow:inset 1px 1px 0 #5f5f5f, inset -1px -1px 0 #dcdcdc;"></div><div class="b" style="left:1208px;top:1012px;width:17px;height:19px;box-sizing:border-box;background:#ececec;border:1px solid;border-color:#fff #6e6e6e #6e6e6e #fff;box-shadow:inset -1px -1px 0 #a5a5a5;"></div><svg style="position:absolute;left:1213px;top:1019.5px;" width="8" height="5" viewBox="0 0 8 5"><path d="M0 0H7L3.500 4Z" fill="#000"/></svg><span class="t" style="left:1133.0px;top:1012.1px;font-size:15px;color:#000;letter-spacing:-0.423px;">1:100.00</span>
<div class="b" style="left:1232px;top:1010px;width:138px;height:23px;box-sizing:border-box;background:#fff;border:1px solid;border-color:#868686 #f6f6f6 #f6f6f6 #868686;box-shadow:inset 1px 1px 0 #5f5f5f, inset -1px -1px 0 #dcdcdc;"></div><div class="b" style="left:1351px;top:1012px;width:17px;height:19px;box-sizing:border-box;background:#ececec;border:1px solid;border-color:#fff #6e6e6e #6e6e6e #fff;box-shadow:inset -1px -1px 0 #a5a5a5;"></div><svg style="position:absolute;left:1356px;top:1019.5px;" width="8" height="5" viewBox="0 0 8 5"><path d="M0 0H7L3.500 4Z" fill="#000"/></svg><span class="t" style="left:1236.0px;top:1012.1px;font-size:15px;color:#000;transform-origin:0 50%;transform:scaleX(0.8999);font-weight:bold;">Navigation</span>
<div class="b" style="left:1382px;top:1010px;width:128px;height:23px;box-sizing:border-box;background:#fff;border:1px solid;border-color:#868686 #f6f6f6 #f6f6f6 #868686;box-shadow:inset 1px 1px 0 #5f5f5f, inset -1px -1px 0 #dcdcdc;"></div><div class="b" style="left:1491px;top:1012px;width:17px;height:19px;box-sizing:border-box;background:#ececec;border:1px solid;border-color:#fff #6e6e6e #6e6e6e #fff;box-shadow:inset -1px -1px 0 #a5a5a5;"></div><svg style="position:absolute;left:1496px;top:1019.5px;" width="8" height="5" viewBox="0 0 8 5"><path d="M0 0H7L3.500 4Z" fill="#000"/></svg><span class="t" style="left:1386.0px;top:1012.1px;font-size:15px;color:#000;transform-origin:0 50%;transform:scaleX(0.9040);font-weight:bold;">Bascule filtre ca</span>
<div class="b" style="left:1522px;top:1007px;width:12px;height:31px;background:#cfd0d8;border-radius:0 4px 4px 0;"></div>
<svg style="position:absolute;left:1524px;top:1030px;" width="7" height="7" viewBox="0 0 7 7"><path d="M0 0.500H6" stroke="#555" stroke-width="1"/><path d="M0 2.500H6L3 6Z" fill="#555"/></svg>
<div class="b" style="left:1538px;top:1006px;width:355px;height:33px;box-sizing:border-box;background:linear-gradient(#eeeef3,#e7e7ed 45%,#dedee6 90%,#dadae2);border:1px solid #f8f8fb;border-radius:5px 4px 4px 5px;box-shadow:0 0 0 0.500px #c6ccd6;"></div>
<div class="b" style="left:1542px;top:1011px;width:2px;height:2px;background:#3f4654;"></div><div class="b" style="left:1542px;top:1015px;width:2px;height:2px;background:#3f4654;"></div><div class="b" style="left:1542px;top:1019px;width:2px;height:2px;background:#3f4654;"></div><div class="b" style="left:1542px;top:1023px;width:2px;height:2px;background:#3f4654;"></div><div class="b" style="left:1542px;top:1027px;width:2px;height:2px;background:#3f4654;"></div><div class="b" style="left:1542px;top:1031px;width:2px;height:2px;background:#3f4654;"></div>
<svg style="position:absolute;left:1547px;top:1012px;" width="18" height="18" viewBox="0 0 18 18"><path d="M2 5L8 3L15 5V14L9 16L2 14Z" fill="#fff" stroke="#1b6fb5" stroke-width="1"/><path d="M2 5L9 7L15 5M9 7V16" fill="none" stroke="#1b6fb5" stroke-width="0.900"/><path d="M2 14L9 12L15 14" fill="none" stroke="#f07a28" stroke-width="1.200"/><path d="M2 14L9 16L15 14" fill="none" stroke="#f07a28" stroke-width="1.600"/></svg>
<svg style="position:absolute;left:1569px;top:1012px;" width="18" height="18" viewBox="0 0 18 18"><path d="M2 5L8 3L15 5V14L9 16L2 14Z" fill="#fff" stroke="#1b6fb5" stroke-width="1"/><path d="M2 5L9 7L15 5M9 7V16" fill="none" stroke="#1b6fb5" stroke-width="0.900"/><path d="M2 14L9 12L15 14" fill="none" stroke="#f07a28" stroke-width="1.200"/><path d="M9 2V9M6 6L9 10L12 6Z" fill="#e03030" stroke="#e03030" stroke-width="1.400"/><path d="M2 14L9 16L15 14" fill="none" stroke="#f07a28" stroke-width="1.600"/></svg>
<svg style="position:absolute;left:1591px;top:1012px;" width="18" height="18" viewBox="0 0 18 18"><path d="M2 5L8 3L15 5V14L9 16L2 14Z" fill="#fff" stroke="#1b6fb5" stroke-width="1"/><path d="M2 5L9 7L15 5M9 7V16" fill="none" stroke="#1b6fb5" stroke-width="0.900"/><path d="M2 14L9 12L15 14" fill="none" stroke="#f07a28" stroke-width="1.200"/><path d="M2 5V14L9 16V7Z" fill="none" stroke="#f07a28" stroke-width="1.500"/></svg>
<svg style="position:absolute;left:1613px;top:1012px;" width="18" height="18" viewBox="0 0 18 18"><path d="M2 5L8 3L15 5V14L9 16L2 14Z" fill="#fff" stroke="#1b6fb5" stroke-width="1"/><path d="M2 5L9 7L15 5M9 7V16" fill="none" stroke="#1b6fb5" stroke-width="0.900"/><path d="M2 14L9 12L15 14" fill="none" stroke="#f07a28" stroke-width="1.200"/><path d="M14 12L8 8M8 8L12 8M8 8L9 12" stroke="#e03030" stroke-width="1.600" fill="none"/></svg>
<svg style="position:absolute;left:1635px;top:1012px;" width="18" height="18" viewBox="0 0 18 18"><path d="M2 5L8 3L15 5V14L9 16L2 14Z" fill="#fff" stroke="#1b6fb5" stroke-width="1"/><path d="M2 5L9 7L15 5M9 7V16" fill="none" stroke="#1b6fb5" stroke-width="0.900"/><path d="M2 14L9 12L15 14" fill="none" stroke="#f07a28" stroke-width="1.200"/><path d="M9 7V16L15 14V5Z" fill="none" stroke="#f07a28" stroke-width="1.500"/></svg>
<svg style="position:absolute;left:1657px;top:1012px;" width="18" height="18" viewBox="0 0 18 18"><path d="M2 5L8 3L15 5V14L9 16L2 14Z" fill="#fff" stroke="#1b6fb5" stroke-width="1"/><path d="M2 5L9 7L15 5M9 7V16" fill="none" stroke="#1b6fb5" stroke-width="0.900"/><path d="M2 14L9 12L15 14" fill="none" stroke="#f07a28" stroke-width="1.200"/><path d="M4 11H12M9 8L13 11L9 14Z" stroke="#e03030" fill="#e03030" stroke-width="1.300"/></svg>
<div class="b" style="left:1679px;top:1010px;width:1px;height:24px;background:#2a6cc0;"></div>
<svg style="position:absolute;left:1684px;top:1012px;" width="18" height="18" viewBox="0 0 18 18"><rect x="4" y="2" width="10" height="5" fill="#fff" stroke="#4a86d0" stroke-width="1"/><rect x="1" y="7" width="16" height="6" fill="#7fb0e8" stroke="#4a86d0" stroke-width="1"/><rect x="4" y="11" width="10" height="5" fill="#fff" stroke="#4a86d0" stroke-width="1"/></svg>
<svg style="position:absolute;left:1707px;top:1012px;" width="18" height="18" viewBox="0 0 18 18"><path d="M2 3V16M16 3V16" stroke="#e05a3a" stroke-width="1.400"/><rect x="3" y="6" width="12" height="7" fill="#f2b8a8" stroke="#e05a3a" stroke-width="1"/><path d="M2 4H16" stroke="#1b6fb5" stroke-width="1"/></svg>
<svg style="position:absolute;left:1729px;top:1012px;" width="18" height="18" viewBox="0 0 18 18"><rect x="1" y="7" width="13" height="6" fill="#9cc0ea" stroke="#4a86d0" stroke-width="1"/><rect x="4" y="3" width="7" height="4" fill="#fff" stroke="#4a86d0" stroke-width="1"/><rect x="10" y="10" width="7" height="6" fill="#fff" stroke="#c06a8a" stroke-width="1"/></svg>
<svg style="position:absolute;left:1751px;top:1012px;" width="18" height="18" viewBox="0 0 18 18"><rect x="1.500" y="1.500" width="15" height="15" fill="#fff" stroke="#1b6fb5" stroke-width="1.600"/><path d="M9 1.500V16.500M1.500 9H16.500" stroke="#1b6fb5" stroke-width="1.600"/><rect x="4" y="11" width="3" height="3" fill="#9cc0ea"/><rect x="11" y="4" width="3" height="3" fill="#9cc0ea"/></svg>
<svg style="position:absolute;left:1773px;top:1012px;" width="18" height="18" viewBox="0 0 18 18"><rect x="1.500" y="1.500" width="15" height="15" fill="#fff" stroke="#345" stroke-width="1.200"/><rect x="2" y="2" width="7" height="7" fill="#f4e060"/><rect x="9" y="9" width="7" height="7" fill="#8a96a8"/><path d="M9 1.500V16.500M1.500 9H16.500" stroke="#345" stroke-width="1.200"/></svg>
<svg style="position:absolute;left:1795px;top:1012px;" width="18" height="18" viewBox="0 0 18 18"><path d="M3 6L11 3V13L3 16Z" fill="#9cc0ea" stroke="#1b6fb5" stroke-width="1.200"/><path d="M2 16L16 2" stroke="#e03030" stroke-width="1.300"/></svg>
<svg style="position:absolute;left:1817px;top:1012px;" width="18" height="18" viewBox="0 0 18 18"><path d="M3 6L11 3V13L3 16Z" fill="#dce9f6" stroke="#1b6fb5" stroke-width="1.200"/><path d="M2 16L16 2" stroke="#e03030" stroke-width="1.300"/><path d="M11 8L15 9V15L11 13Z" fill="#f2b8a8"/></svg>
<svg style="position:absolute;left:1839px;top:1012px;" width="18" height="18" viewBox="0 0 18 18"><path d="M1 11L9 8L17 10V13L9 15L1 13Z" fill="#2a5f9e"/><path d="M5 9L12 7V10L5 12Z" fill="#5a8fc8"/></svg>
<svg style="position:absolute;left:1861px;top:1012px;" width="18" height="18" viewBox="0 0 18 18"><rect x="1.500" y="1.500" width="15" height="15" fill="#dce9f6" stroke="#1b6fb5" stroke-width="1.600"/><path d="M9 1.500V16.500" stroke="#1b6fb5" stroke-width="1.600"/><path d="M10 5H15M12 5V9" stroke="#e03030" stroke-width="1.200"/><rect x="4" y="10" width="4" height="4" fill="#fff" stroke="#6a9ad0" stroke-width="0.800"/></svg>
<div class="b" style="left:1881px;top:1007px;width:11px;height:31px;background:#cfd0d8;border-radius:0 4px 4px 0;"></div>
<svg style="position:absolute;left:1884px;top:1030px;" width="7" height="7" viewBox="0 0 7 7"><path d="M0 0.500H6" stroke="#555" stroke-width="1"/><path d="M0 2.500H6L3 6Z" fill="#555"/></svg>
<!-- s_taskbar.taskbar -->
<div class="b" style="left:0px;top:1040px;width:1920px;height:40px;background:#1f1f1f;"></div>
<svg style="position:absolute;left:16px;top:1052px;" width="16" height="16" viewBox="0 0 16 16"><path d="M0 2.300L6.500 1.400V7.600H0ZM7.400 1.300L16 0V7.600H7.400ZM0 8.400H6.500V14.600L0 13.700ZM7.400 8.400H16V16L7.400 14.700Z" fill="#fff"/></svg>
<div class="b" style="left:48px;top:1040px;width:288px;height:40px;background:#f2f2f2;"></div>
<svg style="position:absolute;left:59px;top:1052px;" width="18" height="18" viewBox="0 0 18 18"><circle cx="11" cy="7" r="5.200" fill="none" stroke="#222" stroke-width="1.400"/><path d="M7.200 10.800L1.500 16.500" stroke="#222" stroke-width="1.600"/></svg>
<span class="t" style="left:88.0px;top:1051.0px;font-size:15px;color:#3a3a3a;letter-spacing:-0.116px;">Taper ici pour rechercher</span>
<svg style="position:absolute;left:265px;top:1053px;" width="30" height="26" viewBox="0 0 30 26"><rect x="1" y="2" width="26" height="10" fill="#e9c85a" stroke="#b8962e" stroke-width="1"/><rect x="0" y="0.500" width="28" height="3" fill="#f4dc82" stroke="#b8962e" stroke-width="0.600"/><rect x="10" y="6" width="8" height="2" fill="#8a6a1a"/><rect x="1" y="13" width="26" height="10" fill="#e9c85a" stroke="#b8962e" stroke-width="1"/><rect x="0" y="12" width="28" height="3" fill="#f4dc82" stroke="#b8962e" stroke-width="0.600"/><rect x="10" y="18" width="8" height="2" fill="#8a6a1a"/></svg>
<svg style="position:absolute;left:299px;top:1046px;" width="30" height="32" viewBox="0 0 30 32"><path d="M4 3H12L13 6H9V9H5V6Z" fill="#5fb89a"/><path d="M5 9H9L12 14V29H2V14Z" fill="#8fd0b8" stroke="#4a9a80" stroke-width="0.800"/><path d="M10 26L22 22L28 27L16 31Z" fill="#e8d040" stroke="#a89820" stroke-width="0.600"/><path d="M10 26L22 22L24 23.500L12 28Z" fill="#3a9a3a"/></svg>
<svg style="position:absolute;left:352px;top:1051px;" width="18" height="18" viewBox="0 0 18 18"><rect x="2" y="4" width="9" height="10" fill="none" stroke="#fff" stroke-width="1.300"/><path d="M14 4V7M14 9V14M2 1.500H11M2 16.500H11" stroke="#fff" stroke-width="1.300"/><rect x="13.300" y="3" width="1.400" height="2" fill="#fff"/></svg>
<svg style="position:absolute;left:399px;top:1051px;" width="20" height="18" viewBox="0 0 20 18"><rect x="0" y="0" width="20" height="16" fill="#3a8ad8"/><rect x="1.500" y="1.500" width="17" height="13" fill="#bfe0fa"/><circle cx="7" cy="8" r="3.500" fill="#f0b030"/><path d="M7 8V4.500A3.500 3.500 0 0 1 10.500 8Z" fill="#3a8ad8"/><rect x="12.500" y="4" width="4.500" height="1.500" fill="#2a6ab8"/><rect x="12.500" y="7" width="4.500" height="1.500" fill="#2a6ab8"/><rect x="12.500" y="10" width="4.500" height="1.500" fill="#2a6ab8"/></svg>
<div class="b" style="left:442px;top:1048px;width:24px;height:24px;background:#4a2fd0;border-radius:1px;"></div>
<span class="t" style="left:444.0px;top:1049.5px;font-size:6.5px;color:#fff;transform-origin:0 50%;transform:scaleX(0.8649);">amazon</span>
<span class="t" style="left:443.5px;top:1056.0px;font-size:9px;color:#fff;transform-origin:0 50%;transform:scaleX(0.8936);">music</span>
<svg style="position:absolute;left:486px;top:1049px;" width="22" height="22" viewBox="0 0 22 22"><circle cx="11" cy="11" r="10.500" fill="#f0b41c"/><circle cx="11" cy="11" r="8" fill="#1f1f1f"/><path d="M11 5L17 15.500H5Z" fill="#f0b41c"/><path d="M11 9.500L13.500 14H8.500Z" fill="#1f1f1f"/></svg>
<svg style="position:absolute;left:530px;top:1048px;" width="26" height="26" viewBox="0 0 26 26"><path d="M3 9Q3 4 9 4H22L19 8H10Q8 8 8 10V15Q8 17 10 17H15V14H12V11H21V18Q21 22 16 22H9Q3 22 3 17Z" fill="#e8281e"/><path d="M20 1L25 0L22 5Z" fill="#e8281e"/></svg>
<span class="t" style="left:558.0px;top:1052.5px;font-size:12px;color:#fff;letter-spacing:-0.001px;">Foxmail</span>
<div class="b" style="left:526px;top:1078px;width:110px;height:2px;background:#76b9ed;"></div>
<div class="b" style="left:647px;top:1049px;width:20px;height:20px;box-sizing:border-box;background:#0c1d5e;border:1.500px solid #8ab4f8;"></div>
<span class="t" style="left:650.0px;top:1050.5px;font-size:12px;color:#8ab4f8;letter-spacing:-0.339px;font-weight:bold;">Ps</span>
<span class="t" style="left:675.0px;top:1052.5px;font-size:12px;color:#fff;letter-spacing:0.179px;">bonhomme...</span>
<div class="b" style="left:640px;top:1078px;width:110px;height:2px;background:#76b9ed;"></div>
<svg style="position:absolute;left:766px;top:1048px;" width="24" height="24" viewBox="0 0 24 24"><ellipse cx="18" cy="12" rx="4.800" ry="3.600" transform="rotate(0 18 12)" fill="#e84a3a" opacity=".900"/><ellipse cx="16.2426" cy="16.2426" rx="4.800" ry="3.600" transform="rotate(45 16.2426 16.2426)" fill="#f09a2a" opacity=".900"/><ellipse cx="12" cy="18" rx="4.800" ry="3.600" transform="rotate(90 12 18)" fill="#e8d02a" opacity=".900"/><ellipse cx="7.75736" cy="16.2426" rx="4.800" ry="3.600" transform="rotate(135 7.75736 16.2426)" fill="#6ab83a" opacity=".900"/><ellipse cx="6" cy="12" rx="4.800" ry="3.600" transform="rotate(180 6 12)" fill="#3a9ad8" opacity=".900"/><ellipse cx="7.75736" cy="7.75736" rx="4.800" ry="3.600" transform="rotate(225 7.75736 7.75736)" fill="#5a5ad0" opacity=".900"/><ellipse cx="12" cy="6" rx="4.800" ry="3.600" transform="rotate(270 12 6)" fill="#b04ac0" opacity=".900"/><ellipse cx="16.2426" cy="7.75736" rx="4.800" ry="3.600" transform="rotate(315 16.2426 7.75736)" fill="#e84a8a" opacity=".900"/></svg>
<svg style="position:absolute;left:810px;top:1048px;" width="25" height="25" viewBox="0 0 25 25"><rect x="0" y="0" width="25" height="25" fill="#2a6ad0"/><path d="M14 3Q7 8 12 12Q6 16 9 22M16 6Q12 10 17 13Q13 17 16 21" fill="none" stroke="#cfe0fa" stroke-width="1.300"/></svg>
<svg style="position:absolute;left:855px;top:1051px;" width="26" height="22" viewBox="0 0 26 22"><ellipse cx="13" cy="13" rx="9" ry="6" fill="none" stroke="#e8a81e" stroke-width="1.600"/><circle cx="13" cy="13" r="3" fill="none" stroke="#d04020" stroke-width="1.400"/><circle cx="3" cy="6" r="2" fill="#e8a81e"/><circle cx="9" cy="2.500" r="2" fill="#e8a81e"/><circle cx="16" cy="2.500" r="2" fill="#e8a81e"/><circle cx="22" cy="6" r="2" fill="#e8a81e"/></svg>
<svg style="position:absolute;left:900px;top:1048px;" width="26" height="24" viewBox="0 0 26 24"><rect x="14" y="0" width="12" height="24" fill="#c8202e"/><path d="M0 24L9 0H17V24H12V18H7L5 24ZM8.500 14H12V5Z" fill="#fff"/><path d="M16 9H26M16 13H26" stroke="#fff" stroke-width="2"/><rect x="20" y="0" width="2" height="24" fill="#1f1f1f" opacity=".250"/></svg>
<svg style="position:absolute;left:945px;top:1050px;" width="23" height="20" viewBox="0 0 23 20"><path d="M0 2H8L10 4H22V19H0Z" fill="#e8b830"/><rect x="0" y="6" width="22" height="13" fill="#f8d860"/><rect x="5" y="11" width="12" height="8" fill="#3a8ad8"/><rect x="7" y="13" width="8" height="6" fill="#bfe0fa"/></svg>
<span class="t" style="left:972.0px;top:1052.5px;font-size:12px;color:#fff;letter-spacing:-0.246px;">Explorateur ...</span>
<div class="b" style="left:940px;top:1078px;width:108px;height:2px;background:#76b9ed;"></div>
<svg style="position:absolute;left:1061px;top:1048px;" width="23" height="23" viewBox="0 0 23 23"><circle cx="11.500" cy="11.500" r="11" fill="#e8432e"/><path d="M11.500 11.500L1.900 6A11 11 0 0 0 7 21.500Z" fill="#2ea04e"/><path d="M11.500 11.500L7 21.500A11 11 0 0 0 22.500 11.500Z" fill="#f8c41c"/><path d="M11.500 11.500H22.500A11 11 0 0 0 1.900 6Z" fill="#e8432e"/><circle cx="11.500" cy="11.500" r="5.200" fill="#fff"/><circle cx="11.500" cy="11.500" r="4" fill="#3a7ae8"/></svg>
<span class="t" style="left:1089.0px;top:1052.5px;font-size:12px;color:#fff;letter-spacing:-0.288px;">Vous êtes m...</span>
<div class="b" style="left:1057px;top:1078px;width:108px;height:2px;background:#76b9ed;"></div>
<svg style="position:absolute;left:1177px;top:1048px;" width="23" height="23" viewBox="0 0 23 23"><circle cx="11.500" cy="11.500" r="11" fill="#e8432e"/><path d="M11.500 11.500L1.900 6A11 11 0 0 0 7 21.500Z" fill="#2ea04e"/><path d="M11.500 11.500L7 21.500A11 11 0 0 0 22.500 11.500Z" fill="#f8c41c"/><path d="M11.500 11.500H22.500A11 11 0 0 0 1.900 6Z" fill="#e8432e"/><circle cx="11.500" cy="11.500" r="5.200" fill="#fff"/><circle cx="11.500" cy="11.500" r="4" fill="#3a7ae8"/></svg>
<span class="t" style="left:1205.0px;top:1052.5px;font-size:12px;color:#fff;letter-spacing:-0.053px;">Le Colombi...</span>
<div class="b" style="left:1173px;top:1078px;width:108px;height:2px;background:#76b9ed;"></div>
<div class="b" style="left:1297px;top:1049px;width:23px;height:22px;background:#2a2a2a;border:1px solid #444;box-sizing:border-box;"></div>
<span class="t" style="left:1298.5px;top:1051.0px;font-size:6px;color:#eee;letter-spacing:0.133px;font-weight:bold;">GoPro</span>
<div class="b" style="left:1299px;top:1060px;width:4px;height:3px;background:#3a9ae8;"></div>
<div class="b" style="left:1304px;top:1060px;width:4px;height:3px;background:#3a9ae8;"></div>
<div class="b" style="left:1309px;top:1060px;width:4px;height:3px;background:#3a9ae8;"></div>
<div class="b" style="left:1314px;top:1060px;width:4px;height:3px;background:#e8e8e8;"></div>
<svg style="position:absolute;left:1340px;top:1049px;" width="25" height="22" viewBox="0 0 25 22"><ellipse cx="15" cy="5" rx="9" ry="4" fill="#c8303a"/><rect x="6" y="5" width="18" height="12" fill="#b02a34"/><ellipse cx="15" cy="17" rx="9" ry="4" fill="#b02a34"/><rect x="0" y="4" width="13" height="14" fill="#a01e2a"/><text x="2.500" y="15.500" font-family="Liberation Sans,sans-serif" font-weight="bold" font-size="11" fill="#fff">A</text></svg>
<svg style="position:absolute;left:1386px;top:1048px;" width="19" height="24" viewBox="0 0 19 24"><rect x="0.500" y="2" width="18" height="21" fill="#dfe9f6" stroke="#7a9ac8" stroke-width="1"/><path d="M3 0V4M6 0V4M9 0V4M12 0V4M15 0V4" stroke="#e8c81e" stroke-width="1.500"/><rect x="3" y="8" width="13" height="9" fill="#f4d020"/><path d="M3 19H16" stroke="#7a9ac8" stroke-width="1"/></svg>
<span class="t" style="left:1411.0px;top:1052.5px;font-size:12px;color:#fff;letter-spacing:-0.207px;">Mots de Pa...</span>
<div class="b" style="left:1380px;top:1078px;width:106px;height:2px;background:#76b9ed;"></div>
<svg style="position:absolute;left:1499px;top:1048px;" width="24" height="24" viewBox="0 0 24 24"><circle cx="12" cy="12" r="11.500" fill="#e03a2a"/><path d="M4 7L8 17L11 10L14 17L17 10L19 15" fill="none" stroke="#fff" stroke-width="2.400" stroke-linejoin="round"/></svg>
<span class="t" style="left:1527.0px;top:1052.5px;font-size:12px;color:#fff;letter-spacing:-0.226px;">WebAcapp...</span>
<div class="b" style="left:1495px;top:1078px;width:106px;height:2px;background:#76b9ed;"></div>
<div class="b" style="left:1607px;top:1040px;width:115px;height:40px;background:#3d3d3d;"></div>
<svg style="position:absolute;left:1614px;top:1048px;" width="26" height="24" viewBox="0 0 26 24"><rect x="14" y="0" width="12" height="24" fill="#c8202e"/><path d="M0 24L9 0H17V24H12V18H7L5 24ZM8.500 14H12V5Z" fill="#fff"/><path d="M16 9H26M16 13H26" stroke="#fff" stroke-width="2"/><rect x="20" y="0" width="2" height="24" fill="#1f1f1f" opacity=".250"/></svg>
<span class="t" style="left:1643.0px;top:1052.5px;font-size:12px;color:#fff;letter-spacing:-0.114px;">Nouveau m...</span>
<div class="b" style="left:1607px;top:1078px;width:115px;height:2px;background:#8cc4f0;"></div>
<svg style="position:absolute;left:1729px;top:1054px;" width="14" height="10" viewBox="0 0 14 10"><path d="M1.500 8L7 2.500L12.500 8" fill="none" stroke="#fff" stroke-width="1.400"/></svg>
<svg style="position:absolute;left:1752px;top:1051px;" width="18" height="18" viewBox="0 0 18 18"><rect x="3.500" y="2.500" width="12" height="9" fill="none" stroke="#fff" stroke-width="1.200"/><path d="M9.500 11.500V14.500M5 14.500H14" stroke="#fff" stroke-width="1.200"/><rect x="1" y="1" width="5" height="3" fill="#1f1f1f" stroke="#fff" stroke-width="1"/></svg>
<svg style="position:absolute;left:1776px;top:1051px;" width="18" height="18" viewBox="0 0 18 18"><path d="M2 7H5L9 3V15L5 11H2Z" fill="none" stroke="#fff" stroke-width="1.200" stroke-linejoin="round"/><path d="M11.500 6.500Q13.500 9 11.500 11.500M13.500 4.500Q17 9 13.500 13.500" fill="none" stroke="#fff" stroke-width="1.100"/></svg>
<span class="t" style="left:1818.0px;top:1045.0px;font-size:12px;color:#fff;transform-origin:0 50%;transform:scaleX(0.8992);">10:59</span>
<span class="t" style="left:1803.0px;top:1063.0px;font-size:12px;color:#fff;letter-spacing:-0.205px;">30/12/2024</span>
<svg style="position:absolute;left:1878px;top:1050px;" width="24" height="22" viewBox="0 0 24 22"><path d="M1.500 1.500H15.500V12.500H6L3.500 15.500V12.500H1.500Z" fill="none" stroke="#fff" stroke-width="1.300"/><path d="M4 5H13M4 7.500H13M4 10H10" stroke="#fff" stroke-width="1"/><circle cx="16" cy="14.500" r="6" fill="#1f1f1f" stroke="#fff" stroke-width="1.100"/><text x="13.800" y="18.500" font-family="Liberation Sans,sans-serif" font-size="10" fill="#fff">1</text></svg>
<!-- s_zcursor.cursor -->
<svg style="position:absolute;left:1596px;top:584px;" width="14" height="21" viewBox="0 0 14 21"><path d="M1.100 1.200V16.600L4.400 13.600L7.200 19.600L9.700 18.500L7 12.600H11.600Z" fill="#fff" stroke="#111" stroke-width="1" stroke-linejoin="round"/></svg>
</body></html>
